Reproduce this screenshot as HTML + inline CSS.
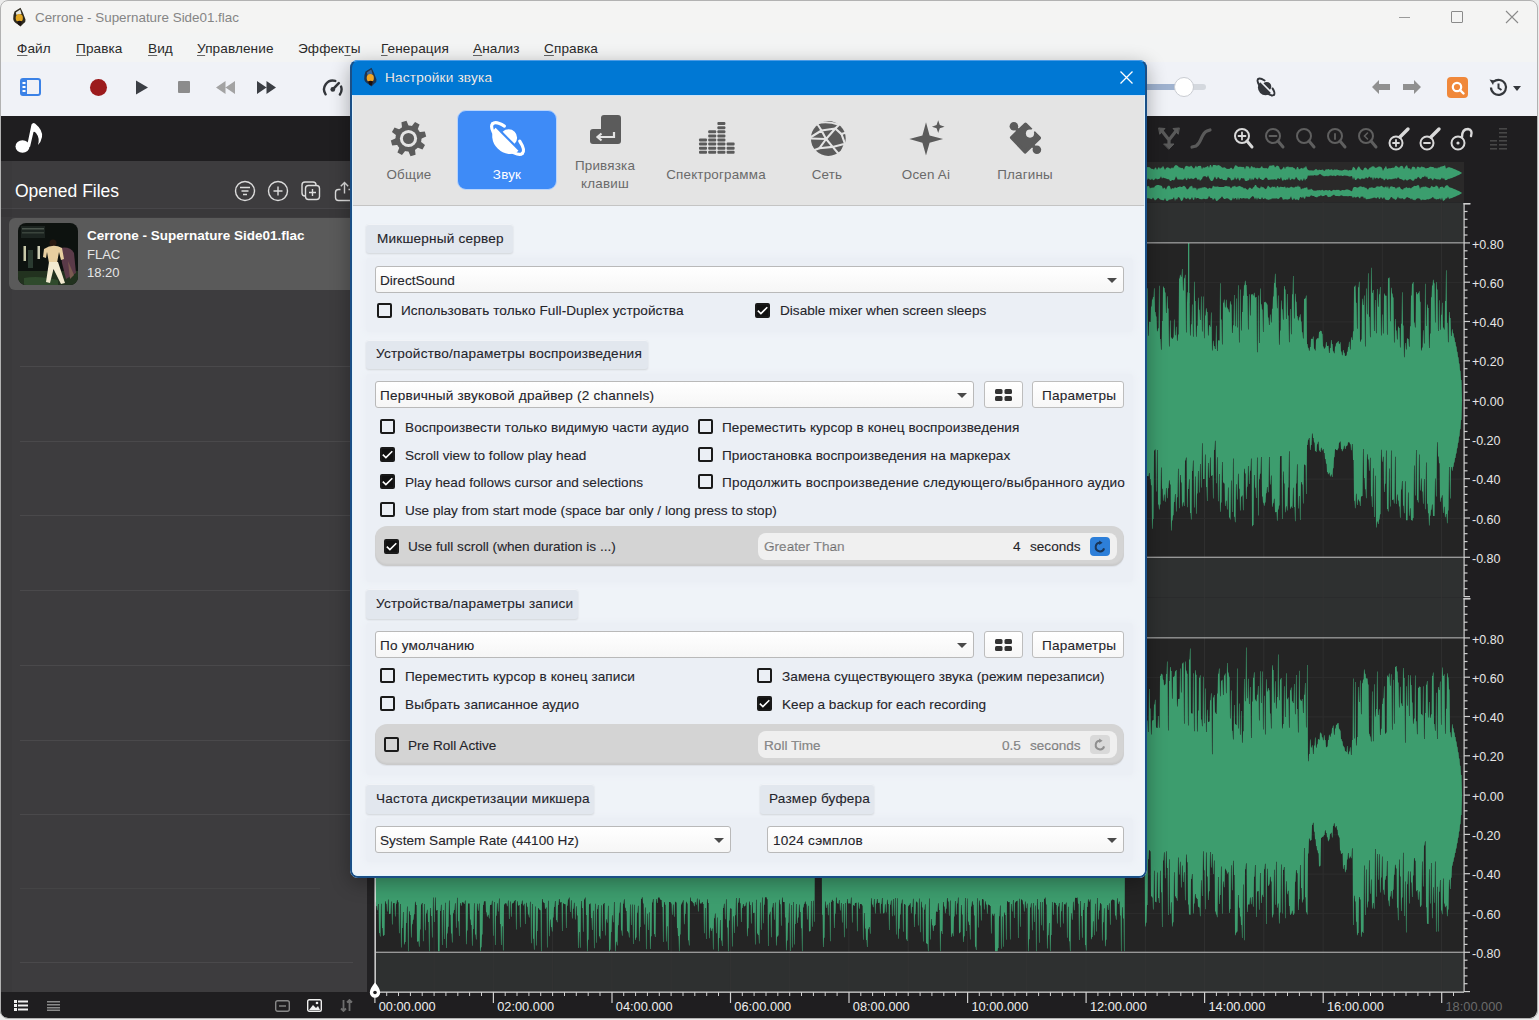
<!DOCTYPE html>
<html><head><meta charset="utf-8">
<style>
*{box-sizing:border-box}
html,body{margin:0;padding:0}
body{width:1539px;height:1020px;overflow:hidden;background:#ececec;position:relative;font-family:"Liberation Sans",sans-serif;color:#1b1b1b}
.a{position:absolute}
.t{position:absolute;white-space:nowrap;line-height:16px;font-size:14px}
#win{position:absolute;left:0;top:0;width:1537px;height:1018px;border-radius:8px;overflow:hidden;background:#f3f3f3}
#wb{position:absolute;left:0;top:0;width:1538px;height:1019px;border:1px solid #b2b2b2;border-radius:8px;pointer-events:none}
.menu .t{color:#2a2a2a;font-size:13.6px;letter-spacing:0.1px;margin-top:1px}
.u{text-decoration:underline;text-decoration-color:#666;text-decoration-thickness:1px;text-underline-offset:2px}
.lbl{position:absolute;background:#e2e7ee;border-radius:3px;box-shadow:0 1px 2px rgba(0,0,0,0.12), inset 0 1px 0 rgba(255,255,255,0.5)}
.sel{position:absolute;background:linear-gradient(#ffffff,#f6f6f6);border:1px solid #b9b9b9;border-radius:3px}
.sel .arr{position:absolute;right:6.5px;top:10.5px;width:0;height:0;border-left:5px solid transparent;border-right:5px solid transparent;border-top:5px solid #4a4a4a}
.btn{position:absolute;background:linear-gradient(#ffffff,#f7f7f7);border:1px solid #bdbdbd;border-radius:3px}
.cb{position:absolute;width:15px;height:15px;border:2px solid #1a1a1a;border-radius:2px;background:transparent}
.cb.on{background:#111}
.cb.on svg{position:absolute;left:0;top:0}
.tab{position:absolute;color:#6a6a6a;font-size:14px;text-align:center;line-height:18px;margin-top:1px;letter-spacing:0.2px}
.ax{position:absolute;color:#e6e6e6;font-size:12.5px;line-height:14px;white-space:nowrap}
.tl{position:absolute;color:#eeeeee;font-size:12.8px;line-height:14px;white-space:nowrap}
.hl{position:absolute;left:20px;width:333px;height:1px;background:#4a494b}
</style></head><body>
<div id="win">
  <!-- title bar -->
  <div class="a" style="left:0;top:0;width:1537px;height:33px;background:#f4f4f3"></div>
  <svg class="a" style="left:12px;top:7px" width="15" height="20" viewBox="0 0 15 20">
    <path d="M2.5 4.5 L8.5 0.8 L11 6 L13.5 12.5 Q14 15 11.5 16.5 L8.5 19.5 L6 17.5 Q1.5 15 1.2 12 Q1 8 2.5 4.5Z" fill="#2e2a1e"/>
    <path d="M3.8 5.5 L8.2 2.6 L9.6 7 L4.5 8Z" fill="#e6e6de"/>
    <ellipse cx="7.3" cy="11" rx="3.6" ry="4" fill="#e2a722"/>
    <path d="M5 14.5 Q7.5 13 10 14.5 L8.5 18.5 L6.5 18Z" fill="#1e1414"/>
  </svg>
  <div class="t" style="left:35px;top:10px;color:#858585;font-size:13.4px">Cerrone - Supernature Side01.flac</div>
  <div class="a" style="left:1399px;top:17px;width:11px;height:1px;background:#9a9a9a"></div>
  <div class="a" style="left:1451px;top:11px;width:12px;height:12px;border:1px solid #8a8a8a;border-radius:1px"></div>
  <svg class="a" style="left:1505px;top:10px" width="14" height="14" viewBox="0 0 14 14"><path d="M1 1L13 13M13 1L1 13" stroke="#8a8a8a" stroke-width="1.1"/></svg>

  <!-- menu -->
  <div class="a menu" style="left:0;top:33px;width:1537px;height:29px;background:#f3f4f4">
    <div class="t" style="left:17px;top:7px"><span class="u">Ф</span>айл</div>
    <div class="t" style="left:76px;top:7px"><span class="u">П</span>равка</div>
    <div class="t" style="left:148px;top:7px"><span class="u">В</span>ид</div>
    <div class="t" style="left:197px;top:7px"><span class="u">У</span>правление</div>
    <div class="t" style="left:298px;top:7px">Эффек<span class="u">т</span>ы</div>
    <div class="t" style="left:381px;top:7px"><span class="u">Г</span>енерация</div>
    <div class="t" style="left:473px;top:7px"><span class="u">А</span>нализ</div>
    <div class="t" style="left:544px;top:7px"><span class="u">С</span>правка</div>
  </div>

  <!-- toolbar -->
  <div class="a" style="left:0;top:62px;width:1537px;height:54px;background:#f0f2f7"></div>
  <svg class="a" style="left:20px;top:78px" width="21" height="18" viewBox="0 0 21 18">
    <rect x="1" y="1" width="19" height="16" rx="2" fill="none" stroke="#3b82e6" stroke-width="2"/>
    <rect x="1" y="1" width="6" height="16" fill="#3b82e6"/>
    <rect x="2.5" y="4" width="3" height="2" fill="#fff"/><rect x="2.5" y="8" width="3" height="2" fill="#fff"/><rect x="2.5" y="12" width="3" height="2" fill="#fff"/>
  </svg>
  <div class="a" style="left:90px;top:79px;width:17px;height:17px;border-radius:50%;background:#9c1b1d"></div>
  <svg class="a" style="left:135px;top:80px" width="14" height="15" viewBox="0 0 14 15"><path d="M1 0.5L13 7.5L1 14.5Z" fill="#3b3e44"/></svg>
  <div class="a" style="left:178px;top:81px;width:12px;height:12px;background:#8c8c8c;border-radius:1px"></div>
  <svg class="a" style="left:216px;top:81px" width="19" height="13" viewBox="0 0 19 13"><path d="M9.5 0L0 6.5L9.5 13ZM19 0L9.5 6.5L19 13Z" fill="#a3a3a3"/></svg>
  <svg class="a" style="left:257px;top:81px" width="19" height="13" viewBox="0 0 19 13"><path d="M0 0L9.5 6.5L0 13ZM9.5 0L19 6.5L9.5 13Z" fill="#3b3e44"/></svg>
  <svg class="a" style="left:322px;top:78px" width="22" height="18" viewBox="0 0 22 18"><g fill="none" stroke="#34373c" stroke-width="2.4" stroke-linecap="round"><path d="M3.6 16.3 A8.8 8.8 0 0 1 13.3 2.9"/><path d="M19.1 8.6 A8.8 8.8 0 0 1 17.9 16.5"/><path d="M10.8 11.4 L16.8 5.2" stroke-width="2.6"/></g><circle cx="10.8" cy="11.4" r="2.4" fill="#34373c"/></svg>
  <!-- right toolbar -->
  <div class="a" style="left:1140px;top:84px;width:66px;height:6px;border-radius:3px;background:#d4d8de"></div>
  <div class="a" style="left:1140px;top:84px;width:40px;height:6px;border-radius:3px;background:#9fb2cf"></div>
  <div class="a" style="left:1174px;top:77px;width:20px;height:20px;border-radius:50%;background:#fff;border:1px solid #c9ccd2"></div>
  <svg class="a" style="left:1254px;top:75px" width="24" height="24" viewBox="0 0 45 45">
    <g transform="translate(22.5 22.5) rotate(45)" fill="#34373c">
      <path d="M -8.3 -1.6 A 8.6 8.6 0 0 1 8.9 -1.6 Z"/>
      <path d="M -14.2 1.3 A 14.3 14.3 0 0 0 14.4 1.3 Z"/>
      <g fill="none" stroke="#34373c" stroke-width="3.6" stroke-linecap="round">
        <path d="M -21 0 A 21 7.8 0 0 0 21 0"/>
        <path d="M -21 0 A 21 7.8 0 0 1 -10.5 -6.8"/>
        <path d="M 10.5 -6.8 A 21 7.8 0 0 1 21 0"/>
      </g>
    </g>
  </svg>
  <svg class="a" style="left:1372px;top:80px" width="18" height="14" viewBox="0 0 18 14"><path d="M0 7L7 0V4H18V10H7V14Z" fill="#909090"/></svg>
  <svg class="a" style="left:1403px;top:80px" width="18" height="14" viewBox="0 0 18 14"><path d="M18 7L11 0V4H0V10H11V14Z" fill="#909090"/></svg>
  <div class="a" style="left:1447px;top:77px;width:21px;height:21px;border-radius:4px;background:#f0883a"></div>
  <svg class="a" style="left:1450px;top:80px" width="16" height="16" viewBox="0 0 16 16"><circle cx="7" cy="7" r="4.2" fill="none" stroke="#fff" stroke-width="2.2"/><path d="M10 10L13.5 13.5" stroke="#fff" stroke-width="2.4" stroke-linecap="round"/></svg>
  <svg class="a" style="left:1487px;top:77px" width="36" height="21" viewBox="0 0 36 21"><path d="M4 10.5 A7.5 7.5 0 1 0 6.5 4.8" fill="none" stroke="#34373c" stroke-width="2.2"/><path d="M2.5 2.5 L7.5 3.5 L6 8Z" fill="#34373c"/><path d="M11.5 6.5V11L14.5 13" fill="none" stroke="#34373c" stroke-width="2"/><path d="M26 9H34L30 14Z" fill="#34373c"/></svg>

  <!-- dark strip -->
  <div class="a" style="left:0;top:116px;width:1537px;height:45px;background:#1f1e20"></div>
  <svg class="a" style="left:14px;top:121px" width="32" height="34" viewBox="0 0 32 34"><ellipse cx="8.5" cy="25.5" rx="7" ry="6.2" fill="#fff"/><path d="M13 25 L17.5 3.5 Q19 1 21 2.5 Q29 9 28 16 Q27 21 24 24 Q26 17 22 12 Q20 10 19.5 11 L16 26Z" fill="#fff"/></svg>
  <!-- right strip icons -->
  <svg class="a" style="left:1155px;top:124px" width="360" height="30" viewBox="1155 124 360 30">
<g fill="none" stroke-linecap="round">
 <path d="M1162 131 L1169 140 L1176 131 M1169 140 V146" stroke="#5a5a5a" stroke-width="3.2"/><path d="M1159 128 L1165 128.5 L1160 134Z M1179 128 L1173 128.5 L1178 134Z M1164 144 L1174 144 L1169 149Z" fill="#5a5a5a" stroke="#5a5a5a" stroke-width="1"/>
 <path d="M1192 147 L1196 146 Q1199 144 1201 139 Q1204 132 1207 131 L1210 130" stroke="#5a5a5a" stroke-width="3.2"/>
 <circle cx="1242" cy="136" r="7" stroke="#d9d9d9" stroke-width="2"/><path d="M1247 141 L1252 147" stroke="#d9d9d9" stroke-width="3"/><path d="M1242 132.5V139.5M1238.5 136H1245.5" stroke="#d9d9d9" stroke-width="1.8"/>
 <circle cx="1273" cy="136" r="7" stroke="#5f5f5f" stroke-width="2"/><path d="M1278 141 L1283 147" stroke="#5f5f5f" stroke-width="3"/><path d="M1269.5 136H1276.5" stroke="#5f5f5f" stroke-width="1.8"/>
 <circle cx="1304" cy="136" r="7" stroke="#5f5f5f" stroke-width="2"/><path d="M1309 141 L1314 147" stroke="#5f5f5f" stroke-width="3"/>
 <circle cx="1335" cy="136" r="7" stroke="#5f5f5f" stroke-width="2"/><path d="M1340 141 L1345 147" stroke="#5f5f5f" stroke-width="3"/><path d="M1335 134V139" stroke="#5f5f5f" stroke-width="1.8"/>
 <circle cx="1366" cy="136" r="7" stroke="#5f5f5f" stroke-width="2"/><path d="M1371 141 L1376 147" stroke="#5f5f5f" stroke-width="3"/><path d="M1367.5 133L1364.5 136L1367.5 139" stroke="#5f5f5f" stroke-width="1.6"/>
 <circle cx="1396" cy="143" r="6.5" stroke="#d9d9d9" stroke-width="2"/><path d="M1400 137 L1408 129" stroke="#d9d9d9" stroke-width="3.4"/><path d="M1396 140V146M1393 143H1399" stroke="#d9d9d9" stroke-width="1.8"/>
 <circle cx="1427" cy="143" r="6.5" stroke="#d9d9d9" stroke-width="2"/><path d="M1431 137 L1439 129" stroke="#d9d9d9" stroke-width="3.4"/><path d="M1424 143H1430" stroke="#d9d9d9" stroke-width="1.8"/>
 <circle cx="1458" cy="143" r="6.5" stroke="#d9d9d9" stroke-width="2"/><path d="M1462 137 Q1462 129 1468 129 Q1473 130 1471 136" stroke="#d9d9d9" stroke-width="2.4"/><circle cx="1458" cy="143" r="1.6" fill="#d9d9d9" stroke="none"/>
</g>
<g fill="#474747"><rect x="1490" y="140" width="7" height="1.6"/><rect x="1490" y="144" width="7" height="1.6"/><rect x="1490" y="148" width="7" height="1.6"/><rect x="1499" y="128" width="8" height="1.6"/><rect x="1499" y="132" width="8" height="1.6"/><rect x="1499" y="136" width="8" height="1.6"/><rect x="1499" y="140" width="8" height="1.6"/><rect x="1499" y="144" width="8" height="1.6"/><rect x="1499" y="148" width="8" height="1.6"/></g>
</svg>

  <!-- sidebar -->
  <div class="a" style="left:0;top:161px;width:370px;height:831px;background:#3d3c3e"></div>
  <div class="a" style="left:0;top:208px;width:370px;height:1px;background:#474649"></div>
  <div class="a" style="left:0;top:209px;width:370px;height:8px;background:#39383a"></div>
  <div class="a" style="left:0;top:161px;width:12px;height:831px;background:rgba(0,0,0,0.03)"></div>
  <div class="t" style="left:15px;top:181px;color:#fff;font-size:17.5px;line-height:20px">Opened Files</div>
  <svg class="a" style="left:234px;top:180px" width="124" height="22" viewBox="0 0 124 22">
    <g fill="none" stroke="#dcdcdc" stroke-width="1.4">
      <circle cx="11" cy="11" r="9.5"/><path d="M6 7.5H16M7.5 11H14.5M9 14.5H13"/>
      <circle cx="44" cy="11" r="9.5"/><path d="M44 6.5V15.5M39.5 11H48.5"/>
      <rect x="68" y="2" width="14" height="14" rx="3"/><rect x="71.5" y="5.5" width="14" height="14" rx="3" fill="#3d3c3e"/><path d="M78.5 9V16M75 12.5H82"/>
      <path d="M106.5 9.5H104.5Q101.5 9.5 101.5 12.5V17.5Q101.5 20.5 104.5 20.5H124M110.5 13.5V2.5M106.8 6.2L110.5 2.5L114.2 6.2M114.5 9.5H124"/>
    </g>
  </svg>
  <div class="a" style="left:9px;top:218px;width:370px;height:72px;border-radius:6px;background:#5a5a5a"></div>
  <svg class="a" style="left:18px;top:223px" width="60" height="62" viewBox="0 0 60 62">
    <defs><clipPath id="thc"><rect width="60" height="62" rx="8"/></clipPath></defs>
    <g clip-path="url(#thc)">
      <rect width="60" height="62" fill="#0d120f"/>
      <rect x="3" y="3" width="24" height="12" fill="#1c2420"/>
      <rect x="4" y="5" width="22" height="1.5" fill="#4a544c"/><rect x="4" y="9" width="22" height="1.5" fill="#3a443c"/>
      <rect x="0" y="48" width="60" height="14" fill="#22321f"/>
      <path d="M6 55 Q20 52 40 57 L40 62 L6 62Z" fill="#2f4a2c"/>
      <rect x="5.5" y="23" width="2.5" height="15" fill="#c8c8a8"/><rect x="19.5" y="23" width="2.5" height="13" fill="#d0d0b8"/>
      <rect x="10" y="27" width="5" height="18" fill="#2a3a30"/>
      <path d="M42 25 Q52 23 56 30 L58 50 L48 56 L44 40Z" fill="#5a3a48"/>
      <path d="M50 38 L56 52 L52 56Z" fill="#7a5a50"/>
      <circle cx="35" cy="20" r="3.5" fill="#2a1a12"/>
      <path d="M26 26 Q35 20 44 25 L46 36 L43 37 L41 29 L39 40 L31 40 L29 29 L28 35 L25 34Z" fill="#e8cfa0"/>
      <path d="M31 39 L40 39 L47 60 L43 61 L35.5 46 L32 60 L28 59 Z" fill="#f2ead0"/>
    </g>
  </svg>
  <div class="t" style="left:87px;top:228px;color:#fff;font-weight:bold;font-size:13.5px">Cerrone - Supernature Side01.flac</div>
  <div class="t" style="left:87px;top:246.5px;color:#e6e6e6;font-size:13px">FLAC</div>
  <div class="t" style="left:87px;top:264.5px;color:#e6e6e6;font-size:13px">18:20</div>
  <div class="hl" style="top:366px"></div><div class="hl" style="top:441px"></div><div class="hl" style="top:515px"></div>
  <div class="hl" style="top:590px"></div><div class="hl" style="top:665px"></div><div class="hl" style="top:740px"></div>
  <div class="hl" style="top:814px"></div><div class="hl" style="top:888px;width:300px;opacity:0.6"></div><div class="hl" style="top:962px"></div>

  <!-- bottom bar -->
  <div class="a" style="left:0;top:992px;width:1537px;height:26px;background:#1f1e20"></div>
  <svg class="a" style="left:14px;top:1000px" width="14" height="11" viewBox="0 0 14 11"><g fill="#f0f0f0"><rect x="0" y="0" width="3" height="3"/><rect x="0" y="4" width="3" height="3"/><rect x="0" y="8" width="3" height="3"/><rect x="4" y="0.5" width="10" height="2"/><rect x="4" y="4.5" width="10" height="2"/><rect x="4" y="8.5" width="10" height="2"/></g></svg>
  <svg class="a" style="left:47px;top:1001px" width="13" height="10" viewBox="0 0 13 10"><g fill="#8a8a8a"><rect y="0" width="13" height="1.5"/><rect y="3" width="13" height="1.5"/><rect y="6" width="13" height="1.5"/><rect y="8.5" width="13" height="1.5"/></g></svg>
  <svg class="a" style="left:275px;top:1000px" width="15" height="12" viewBox="0 0 15 12"><rect x="0.7" y="0.7" width="13.6" height="10.6" rx="2" fill="none" stroke="#888" stroke-width="1.4"/><path d="M4 6H11" stroke="#888" stroke-width="1.4"/></svg>
  <svg class="a" style="left:307px;top:999px" width="15" height="13" viewBox="0 0 15 13"><rect x="0.7" y="0.7" width="13.6" height="11.6" rx="1.5" fill="none" stroke="#f0f0f0" stroke-width="1.4"/><path d="M2 11L6 6L9 9L11 7L13 11Z" fill="#f0f0f0"/><circle cx="10" cy="4" r="1.3" fill="#f0f0f0"/></svg>
  <svg class="a" style="left:340px;top:999px" width="13" height="13" viewBox="0 0 13 13"><path d="M3.5 1V12M1 9.5L3.5 12L6 9.5M9.5 12V1M7 3.5L9.5 1L12 3.5" fill="none" stroke="#6e6e6e" stroke-width="1.8"/></svg>

  <!-- waveform area -->
  <svg class="a" style="left:0;top:0" width="1537" height="1018" viewBox="0 0 1537 1018">
<rect x="367" y="161" width="1170" height="857" fill="#1f1e20"/>
<rect x="367" y="161" width="9" height="831" fill="#222123"/>
<rect x="370" y="162" width="1094" height="40" fill="#2a2929"/>
<path d="M375.0,168.1 L376.0,166.8 L377.0,165.6 L378.0,166.5 L379.0,168.5 L380.0,166.9 L381.0,166.8 L382.0,166.2 L383.0,167.2 L384.0,166.4 L385.0,168.2 L386.0,165.6 L387.0,166.7 L388.0,166.6 L389.0,167.0 L390.0,166.5 L391.0,166.6 L392.0,168.6 L393.0,166.8 L394.0,169.2 L395.0,168.9 L396.0,168.0 L397.0,169.9 L398.0,169.9 L399.0,168.8 L400.0,168.6 L401.0,168.3 L402.0,168.6 L403.0,168.4 L404.0,168.5 L405.0,166.6 L406.0,167.0 L407.0,169.0 L408.0,166.7 L409.0,166.5 L410.0,166.4 L411.0,168.3 L412.0,166.4 L413.0,167.2 L414.0,167.5 L415.0,167.3 L416.0,166.3 L417.0,167.0 L418.0,167.6 L419.0,168.6 L420.0,168.7 L421.0,168.3 L422.0,167.7 L423.0,167.1 L424.0,167.5 L425.0,167.3 L426.0,165.6 L427.0,165.8 L428.0,168.4 L429.0,166.7 L430.0,166.7 L431.0,166.9 L432.0,167.1 L433.0,167.1 L434.0,168.3 L435.0,166.3 L436.0,166.7 L437.0,167.6 L438.0,167.0 L439.0,167.3 L440.0,167.0 L441.0,167.2 L442.0,166.6 L443.0,167.0 L444.0,166.3 L445.0,166.1 L446.0,166.0 L447.0,166.3 L448.0,167.7 L449.0,167.7 L450.0,168.5 L451.0,168.5 L452.0,166.9 L453.0,166.1 L454.0,167.1 L455.0,166.6 L456.0,169.1 L457.0,166.1 L458.0,167.3 L459.0,166.4 L460.0,166.9 L461.0,167.5 L462.0,167.1 L463.0,166.1 L464.0,167.6 L465.0,165.5 L466.0,166.5 L467.0,167.1 L468.0,168.3 L469.0,165.1 L470.0,165.7 L471.0,166.6 L472.0,169.3 L473.0,166.6 L474.0,167.1 L475.0,166.8 L476.0,168.0 L477.0,166.5 L478.0,166.9 L479.0,169.4 L480.0,169.6 L481.0,167.2 L482.0,166.8 L483.0,167.3 L484.0,167.2 L485.0,167.0 L486.0,167.3 L487.0,165.7 L488.0,166.2 L489.0,168.0 L490.0,167.5 L491.0,165.7 L492.0,165.2 L493.0,166.2 L494.0,167.1 L495.0,167.0 L496.0,167.0 L497.0,167.4 L498.0,167.8 L499.0,166.0 L500.0,165.9 L501.0,165.5 L502.0,165.8 L503.0,166.3 L504.0,167.9 L505.0,168.5 L506.0,168.4 L507.0,167.7 L508.0,166.6 L509.0,169.1 L510.0,168.4 L511.0,167.6 L512.0,165.4 L513.0,167.4 L514.0,169.4 L515.0,167.9 L516.0,167.9 L517.0,169.3 L518.0,169.9 L519.0,167.9 L520.0,167.2 L521.0,167.0 L522.0,169.9 L523.0,169.5 L524.0,167.9 L525.0,166.3 L526.0,166.6 L527.0,166.3 L528.0,167.0 L529.0,166.4 L530.0,165.8 L531.0,165.1 L532.0,165.1 L533.0,165.3 L534.0,166.0 L535.0,168.8 L536.0,166.3 L537.0,166.3 L538.0,166.5 L539.0,166.1 L540.0,167.7 L541.0,167.9 L542.0,170.3 L543.0,167.8 L544.0,169.7 L545.0,166.9 L546.0,168.2 L547.0,166.2 L548.0,166.5 L549.0,167.6 L550.0,168.2 L551.0,167.2 L552.0,167.4 L553.0,166.9 L554.0,169.1 L555.0,166.5 L556.0,167.5 L557.0,167.0 L558.0,167.6 L559.0,167.4 L560.0,168.0 L561.0,167.9 L562.0,167.3 L563.0,168.3 L564.0,167.6 L565.0,168.1 L566.0,167.3 L567.0,166.7 L568.0,166.9 L569.0,168.2 L570.0,167.7 L571.0,166.7 L572.0,167.5 L573.0,166.4 L574.0,167.0 L575.0,167.1 L576.0,168.5 L577.0,166.9 L578.0,165.8 L579.0,165.8 L580.0,167.6 L581.0,166.1 L582.0,165.9 L583.0,166.4 L584.0,166.1 L585.0,166.8 L586.0,166.3 L587.0,166.8 L588.0,167.5 L589.0,167.1 L590.0,165.9 L591.0,165.1 L592.0,165.4 L593.0,165.9 L594.0,166.7 L595.0,166.5 L596.0,166.8 L597.0,167.8 L598.0,167.8 L599.0,168.4 L600.0,167.7 L601.0,168.5 L602.0,169.0 L603.0,169.6 L604.0,167.9 L605.0,166.3 L606.0,165.8 L607.0,165.7 L608.0,168.5 L609.0,168.9 L610.0,168.0 L611.0,167.7 L612.0,169.1 L613.0,166.8 L614.0,166.8 L615.0,167.1 L616.0,169.9 L617.0,169.5 L618.0,168.9 L619.0,167.3 L620.0,166.8 L621.0,165.8 L622.0,165.7 L623.0,166.0 L624.0,166.4 L625.0,165.7 L626.0,166.8 L627.0,166.3 L628.0,166.3 L629.0,167.3 L630.0,165.1 L631.0,165.6 L632.0,165.6 L633.0,166.0 L634.0,166.3 L635.0,166.2 L636.0,166.1 L637.0,167.0 L638.0,166.6 L639.0,167.6 L640.0,167.6 L641.0,167.2 L642.0,168.8 L643.0,167.0 L644.0,167.3 L645.0,167.7 L646.0,169.7 L647.0,169.4 L648.0,168.4 L649.0,167.2 L650.0,169.1 L651.0,166.7 L652.0,166.9 L653.0,166.9 L654.0,166.3 L655.0,166.5 L656.0,167.6 L657.0,166.6 L658.0,167.1 L659.0,167.5 L660.0,168.8 L661.0,166.3 L662.0,165.9 L663.0,168.0 L664.0,166.9 L665.0,168.3 L666.0,169.1 L667.0,166.8 L668.0,167.8 L669.0,168.2 L670.0,167.1 L671.0,166.9 L672.0,169.8 L673.0,169.4 L674.0,166.7 L675.0,167.3 L676.0,167.1 L677.0,165.6 L678.0,165.8 L679.0,166.0 L680.0,167.9 L681.0,168.3 L682.0,169.3 L683.0,168.6 L684.0,169.9 L685.0,167.4 L686.0,168.2 L687.0,166.7 L688.0,166.6 L689.0,166.0 L690.0,168.5 L691.0,168.6 L692.0,167.8 L693.0,167.3 L694.0,166.3 L695.0,166.2 L696.0,166.6 L697.0,166.8 L698.0,166.9 L699.0,165.1 L700.0,168.5 L701.0,168.7 L702.0,168.6 L703.0,166.2 L704.0,166.9 L705.0,168.0 L706.0,165.3 L707.0,165.1 L708.0,165.6 L709.0,166.2 L710.0,166.5 L711.0,167.6 L712.0,167.2 L713.0,166.2 L714.0,166.0 L715.0,167.4 L716.0,166.1 L717.0,167.2 L718.0,167.6 L719.0,167.4 L720.0,168.8 L721.0,168.9 L722.0,167.4 L723.0,166.2 L724.0,166.1 L725.0,167.1 L726.0,165.6 L727.0,167.3 L728.0,167.8 L729.0,167.7 L730.0,165.6 L731.0,165.1 L732.0,165.1 L733.0,167.3 L734.0,167.8 L735.0,168.3 L736.0,168.4 L737.0,166.1 L738.0,166.5 L739.0,168.6 L740.0,167.4 L741.0,167.2 L742.0,169.4 L743.0,168.1 L744.0,166.7 L745.0,166.6 L746.0,166.5 L747.0,166.8 L748.0,165.7 L749.0,168.7 L750.0,168.2 L751.0,167.0 L752.0,166.4 L753.0,166.2 L754.0,165.6 L755.0,166.3 L756.0,166.6 L757.0,169.5 L758.0,168.5 L759.0,167.2 L760.0,166.4 L761.0,167.1 L762.0,167.4 L763.0,167.8 L764.0,169.0 L765.0,167.2 L766.0,167.0 L767.0,168.0 L768.0,166.1 L769.0,169.0 L770.0,165.7 L771.0,168.1 L772.0,165.6 L773.0,165.1 L774.0,166.3 L775.0,167.0 L776.0,166.9 L777.0,168.9 L778.0,167.3 L779.0,167.8 L780.0,167.9 L781.0,167.1 L782.0,167.0 L783.0,167.0 L784.0,167.5 L785.0,166.5 L786.0,165.5 L787.0,165.8 L788.0,166.4 L789.0,166.5 L790.0,167.4 L791.0,166.9 L792.0,165.9 L793.0,167.1 L794.0,168.3 L795.0,168.3 L796.0,167.4 L797.0,169.2 L798.0,168.0 L799.0,167.9 L800.0,167.4 L801.0,169.7 L802.0,167.3 L803.0,166.1 L804.0,166.0 L805.0,165.7 L806.0,167.1 L807.0,165.9 L808.0,167.6 L809.0,167.9 L810.0,168.1 L811.0,166.7 L812.0,166.6 L813.0,167.5 L814.0,168.1 L815.0,168.2 L816.0,167.5 L817.0,167.6 L818.0,168.9 L819.0,167.9 L820.0,166.4 L821.0,165.6 L822.0,168.2 L823.0,166.7 L824.0,168.8 L825.0,167.1 L826.0,166.8 L827.0,166.3 L828.0,165.3 L829.0,165.1 L830.0,165.7 L831.0,166.2 L832.0,167.0 L833.0,167.1 L834.0,167.9 L835.0,165.7 L836.0,165.2 L837.0,165.1 L838.0,165.9 L839.0,169.1 L840.0,169.1 L841.0,166.7 L842.0,165.9 L843.0,165.8 L844.0,168.9 L845.0,167.6 L846.0,169.3 L847.0,167.0 L848.0,166.0 L849.0,168.9 L850.0,167.0 L851.0,167.9 L852.0,167.9 L853.0,167.7 L854.0,168.6 L855.0,166.8 L856.0,167.5 L857.0,167.9 L858.0,170.1 L859.0,168.6 L860.0,167.3 L861.0,167.8 L862.0,166.6 L863.0,168.1 L864.0,166.3 L865.0,167.0 L866.0,169.2 L867.0,167.9 L868.0,166.1 L869.0,166.2 L870.0,167.3 L871.0,166.7 L872.0,166.2 L873.0,165.8 L874.0,168.4 L875.0,167.1 L876.0,167.3 L877.0,167.8 L878.0,167.2 L879.0,167.6 L880.0,166.5 L881.0,166.2 L882.0,166.0 L883.0,165.6 L884.0,165.2 L885.0,165.1 L886.0,167.9 L887.0,166.4 L888.0,166.2 L889.0,165.7 L890.0,168.3 L891.0,166.0 L892.0,166.9 L893.0,166.3 L894.0,167.6 L895.0,166.9 L896.0,166.2 L897.0,168.1 L898.0,165.1 L899.0,166.4 L900.0,167.4 L901.0,169.0 L902.0,167.4 L903.0,167.7 L904.0,166.2 L905.0,165.8 L906.0,166.0 L907.0,166.6 L908.0,167.1 L909.0,167.8 L910.0,167.2 L911.0,166.5 L912.0,165.7 L913.0,165.6 L914.0,167.6 L915.0,167.0 L916.0,167.5 L917.0,168.5 L918.0,167.8 L919.0,167.3 L920.0,166.1 L921.0,167.9 L922.0,165.8 L923.0,166.4 L924.0,166.4 L925.0,166.6 L926.0,168.6 L927.0,166.2 L928.0,167.2 L929.0,168.1 L930.0,167.9 L931.0,168.4 L932.0,165.6 L933.0,166.1 L934.0,167.0 L935.0,167.1 L936.0,167.6 L937.0,167.7 L938.0,167.4 L939.0,167.6 L940.0,168.3 L941.0,168.3 L942.0,167.7 L943.0,169.0 L944.0,166.9 L945.0,168.2 L946.0,165.5 L947.0,165.1 L948.0,165.7 L949.0,167.7 L950.0,167.9 L951.0,167.8 L952.0,166.8 L953.0,167.3 L954.0,166.2 L955.0,166.2 L956.0,166.7 L957.0,166.9 L958.0,166.4 L959.0,165.9 L960.0,165.7 L961.0,167.4 L962.0,169.2 L963.0,168.1 L964.0,167.0 L965.0,168.0 L966.0,170.0 L967.0,168.7 L968.0,166.7 L969.0,165.7 L970.0,166.8 L971.0,166.5 L972.0,166.5 L973.0,166.7 L974.0,166.9 L975.0,165.9 L976.0,166.5 L977.0,167.3 L978.0,169.6 L979.0,166.6 L980.0,165.9 L981.0,165.5 L982.0,165.1 L983.0,167.3 L984.0,166.2 L985.0,166.2 L986.0,167.6 L987.0,166.0 L988.0,166.1 L989.0,167.7 L990.0,166.2 L991.0,166.8 L992.0,168.2 L993.0,168.2 L994.0,168.2 L995.0,167.2 L996.0,168.5 L997.0,169.0 L998.0,169.7 L999.0,167.4 L1000.0,167.8 L1001.0,167.3 L1002.0,169.0 L1003.0,166.8 L1004.0,167.5 L1005.0,167.5 L1006.0,168.3 L1007.0,167.4 L1008.0,167.1 L1009.0,167.2 L1010.0,167.4 L1011.0,167.7 L1012.0,169.5 L1013.0,169.3 L1014.0,167.5 L1015.0,167.8 L1016.0,167.5 L1017.0,165.9 L1018.0,168.9 L1019.0,166.2 L1020.0,166.5 L1021.0,167.2 L1022.0,167.7 L1023.0,170.2 L1024.0,168.3 L1025.0,166.2 L1026.0,165.2 L1027.0,165.1 L1028.0,165.8 L1029.0,166.8 L1030.0,169.0 L1031.0,168.2 L1032.0,167.0 L1033.0,166.3 L1034.0,168.1 L1035.0,167.0 L1036.0,165.9 L1037.0,165.7 L1038.0,167.1 L1039.0,166.6 L1040.0,166.9 L1041.0,167.2 L1042.0,167.3 L1043.0,167.4 L1044.0,166.2 L1045.0,167.5 L1046.0,166.5 L1047.0,167.3 L1048.0,167.2 L1049.0,168.1 L1050.0,167.9 L1051.0,168.2 L1052.0,167.1 L1053.0,169.1 L1054.0,167.7 L1055.0,169.2 L1056.0,167.0 L1057.0,167.0 L1058.0,166.0 L1059.0,165.5 L1060.0,168.5 L1061.0,167.6 L1062.0,169.3 L1063.0,169.0 L1064.0,166.9 L1065.0,166.3 L1066.0,166.0 L1067.0,167.5 L1068.0,166.6 L1069.0,166.4 L1070.0,166.2 L1071.0,166.3 L1072.0,166.7 L1073.0,166.0 L1074.0,166.8 L1075.0,165.8 L1076.0,166.9 L1077.0,166.7 L1078.0,167.3 L1079.0,169.4 L1080.0,167.6 L1081.0,167.2 L1082.0,167.3 L1083.0,168.8 L1084.0,167.5 L1085.0,168.0 L1086.0,167.6 L1087.0,167.5 L1088.0,166.5 L1089.0,168.6 L1090.0,165.8 L1091.0,165.8 L1092.0,165.1 L1093.0,165.2 L1094.0,167.0 L1095.0,167.3 L1096.0,168.2 L1097.0,166.5 L1098.0,165.4 L1099.0,167.6 L1100.0,165.3 L1101.0,166.6 L1102.0,165.7 L1103.0,167.2 L1104.0,168.1 L1105.0,166.3 L1106.0,167.2 L1107.0,166.5 L1108.0,166.8 L1109.0,166.2 L1110.0,166.9 L1111.0,167.6 L1112.0,166.7 L1113.0,167.9 L1114.0,167.6 L1115.0,167.1 L1116.0,167.5 L1117.0,167.0 L1118.0,169.7 L1119.0,167.4 L1120.0,167.0 L1121.0,166.4 L1122.0,166.3 L1123.0,169.1 L1124.0,167.8 L1125.0,167.1 L1126.0,166.7 L1127.0,166.2 L1128.0,167.0 L1129.0,167.2 L1130.0,169.5 L1131.0,168.0 L1132.0,168.8 L1133.0,167.4 L1134.0,166.3 L1135.0,168.7 L1136.0,166.5 L1137.0,166.1 L1138.0,167.2 L1139.0,169.8 L1140.0,168.0 L1141.0,168.7 L1142.0,166.8 L1143.0,166.2 L1144.0,167.4 L1145.0,167.3 L1146.0,167.6 L1147.0,167.0 L1148.0,167.2 L1149.0,166.9 L1150.0,167.5 L1151.0,168.6 L1152.0,168.9 L1153.0,168.8 L1154.0,169.7 L1155.0,167.8 L1156.0,167.6 L1157.0,170.0 L1158.0,168.1 L1159.0,167.1 L1160.0,169.0 L1161.0,167.4 L1162.0,167.7 L1163.0,165.8 L1164.0,167.8 L1165.0,170.0 L1166.0,167.9 L1167.0,167.4 L1168.0,167.3 L1169.0,168.0 L1170.0,168.6 L1171.0,168.5 L1172.0,167.2 L1173.0,168.6 L1174.0,166.7 L1175.0,165.5 L1176.0,165.1 L1177.0,165.4 L1178.0,166.0 L1179.0,167.4 L1180.0,167.3 L1181.0,168.2 L1182.0,167.8 L1183.0,168.3 L1184.0,169.7 L1185.0,166.8 L1186.0,166.1 L1187.0,165.7 L1188.0,166.4 L1189.0,166.4 L1190.0,166.8 L1191.0,165.6 L1192.0,166.5 L1193.0,167.8 L1194.0,168.8 L1195.0,167.1 L1196.0,165.4 L1197.0,167.5 L1198.0,166.0 L1199.0,166.1 L1200.0,165.8 L1201.0,165.9 L1202.0,169.2 L1203.0,167.1 L1204.0,167.9 L1205.0,167.3 L1206.0,167.3 L1207.0,166.5 L1208.0,165.7 L1209.0,167.9 L1210.0,165.1 L1211.0,165.1 L1212.0,167.7 L1213.0,165.1 L1214.0,165.1 L1215.0,165.1 L1216.0,165.3 L1217.0,165.8 L1218.0,165.1 L1219.0,165.2 L1220.0,165.7 L1221.0,166.6 L1222.0,167.4 L1223.0,167.7 L1224.0,167.3 L1225.0,167.6 L1226.0,168.3 L1227.0,169.0 L1228.0,168.8 L1229.0,168.9 L1230.0,168.4 L1231.0,167.4 L1232.0,168.2 L1233.0,169.6 L1234.0,167.8 L1235.0,165.5 L1236.0,165.2 L1237.0,166.0 L1238.0,166.7 L1239.0,167.1 L1240.0,166.6 L1241.0,167.0 L1242.0,166.7 L1243.0,167.2 L1244.0,166.7 L1245.0,169.4 L1246.0,166.1 L1247.0,166.5 L1248.0,166.2 L1249.0,167.1 L1250.0,169.1 L1251.0,166.3 L1252.0,166.3 L1253.0,167.5 L1254.0,167.2 L1255.0,167.5 L1256.0,168.5 L1257.0,167.6 L1258.0,168.2 L1259.0,168.1 L1260.0,168.3 L1261.0,166.9 L1262.0,166.1 L1263.0,168.2 L1264.0,167.8 L1265.0,168.4 L1266.0,167.7 L1267.0,168.6 L1268.0,168.4 L1269.0,166.6 L1270.0,165.3 L1271.0,165.9 L1272.0,165.2 L1273.0,165.5 L1274.0,165.1 L1275.0,167.5 L1276.0,166.5 L1277.0,165.4 L1278.0,165.9 L1279.0,166.5 L1280.0,169.3 L1281.0,169.4 L1282.0,169.2 L1283.0,167.7 L1284.0,166.6 L1285.0,169.2 L1286.0,166.5 L1287.0,167.2 L1288.0,166.0 L1289.0,167.4 L1290.0,166.7 L1291.0,167.6 L1292.0,166.8 L1293.0,167.4 L1294.0,168.1 L1295.0,168.6 L1296.0,170.0 L1297.0,166.9 L1298.0,167.1 L1299.0,169.5 L1300.0,168.8 L1301.0,168.3 L1302.0,167.7 L1303.0,169.0 L1304.0,167.2 L1305.0,167.8 L1306.0,165.8 L1307.0,168.5 L1308.0,170.1 L1309.0,170.3 L1310.0,170.4 L1311.0,170.2 L1312.0,170.5 L1313.0,170.4 L1314.0,170.5 L1315.0,169.6 L1316.0,169.1 L1317.0,169.6 L1318.0,170.5 L1319.0,169.6 L1320.0,170.0 L1321.0,169.9 L1322.0,169.7 L1323.0,169.6 L1324.0,171.0 L1325.0,170.6 L1326.0,168.9 L1327.0,169.8 L1328.0,169.1 L1329.0,169.2 L1330.0,169.9 L1331.0,169.3 L1332.0,169.3 L1333.0,170.6 L1334.0,169.5 L1335.0,169.5 L1336.0,169.7 L1337.0,169.3 L1338.0,170.0 L1339.0,170.0 L1340.0,170.4 L1341.0,170.3 L1342.0,170.8 L1343.0,170.1 L1344.0,169.9 L1345.0,169.3 L1346.0,170.3 L1347.0,169.6 L1348.0,170.7 L1349.0,170.2 L1350.0,170.1 L1351.0,170.6 L1352.0,169.8 L1353.0,166.7 L1354.0,167.2 L1355.0,168.3 L1356.0,170.5 L1357.0,168.8 L1358.0,167.0 L1359.0,166.3 L1360.0,167.9 L1361.0,169.6 L1362.0,170.0 L1363.0,170.6 L1364.0,168.2 L1365.0,167.6 L1366.0,167.8 L1367.0,168.7 L1368.0,169.9 L1369.0,168.6 L1370.0,167.4 L1371.0,167.4 L1372.0,166.3 L1373.0,166.4 L1374.0,166.3 L1375.0,167.8 L1376.0,167.8 L1377.0,167.6 L1378.0,166.8 L1379.0,166.6 L1380.0,166.6 L1381.0,166.9 L1382.0,167.8 L1383.0,170.9 L1384.0,168.7 L1385.0,167.4 L1386.0,165.7 L1387.0,168.8 L1388.0,168.7 L1389.0,167.9 L1390.0,168.4 L1391.0,167.9 L1392.0,168.1 L1393.0,167.4 L1394.0,168.0 L1395.0,166.6 L1396.0,165.4 L1397.0,166.4 L1398.0,167.0 L1399.0,167.9 L1400.0,166.6 L1401.0,166.0 L1402.0,165.7 L1403.0,166.7 L1404.0,169.3 L1405.0,167.0 L1406.0,165.9 L1407.0,165.1 L1408.0,167.9 L1409.0,168.4 L1410.0,168.3 L1411.0,170.0 L1412.0,167.2 L1413.0,166.4 L1414.0,167.1 L1415.0,167.3 L1416.0,169.7 L1417.0,166.8 L1418.0,166.7 L1419.0,166.9 L1420.0,168.0 L1421.0,166.7 L1422.0,166.6 L1423.0,167.2 L1424.0,167.1 L1425.0,167.9 L1426.0,168.5 L1427.0,167.9 L1428.0,167.9 L1429.0,167.5 L1430.0,166.8 L1431.0,166.7 L1432.0,167.0 L1433.0,167.1 L1434.0,167.4 L1435.0,168.5 L1436.0,167.6 L1437.0,168.8 L1438.0,167.2 L1439.0,167.8 L1440.0,166.9 L1441.0,166.4 L1442.0,166.4 L1443.0,165.9 L1444.0,166.1 L1445.0,165.1 L1446.0,168.7 L1447.0,167.7 L1448.0,167.4 L1449.0,167.0 L1450.0,167.4 L1451.0,167.8 L1452.0,168.1 L1453.0,168.5 L1454.0,168.9 L1455.0,169.3 L1456.0,169.8 L1457.0,170.2 L1458.0,170.7 L1459.0,171.1 L1460.0,171.7 L1461.0,172.2 L1462.0,173.0 L1463.0,173.0 L1463.0,173.0 L1462.0,173.0 L1461.0,173.8 L1460.0,174.3 L1459.0,174.9 L1458.0,175.3 L1457.0,175.8 L1456.0,176.2 L1455.0,176.7 L1454.0,177.1 L1453.0,177.5 L1452.0,177.9 L1451.0,178.2 L1450.0,178.6 L1449.0,179.0 L1448.0,178.8 L1447.0,180.0 L1446.0,180.1 L1445.0,180.2 L1444.0,177.9 L1443.0,179.3 L1442.0,177.4 L1441.0,179.1 L1440.0,179.7 L1439.0,179.6 L1438.0,179.2 L1437.0,179.4 L1436.0,178.9 L1435.0,178.7 L1434.0,178.3 L1433.0,180.6 L1432.0,179.4 L1431.0,178.3 L1430.0,178.4 L1429.0,179.1 L1428.0,179.1 L1427.0,176.3 L1426.0,177.8 L1425.0,175.6 L1424.0,177.2 L1423.0,176.8 L1422.0,177.5 L1421.0,178.9 L1420.0,178.8 L1419.0,177.4 L1418.0,176.7 L1417.0,178.6 L1416.0,178.9 L1415.0,178.6 L1414.0,180.4 L1413.0,180.7 L1412.0,180.5 L1411.0,179.6 L1410.0,179.1 L1409.0,179.5 L1408.0,180.1 L1407.0,180.8 L1406.0,179.8 L1405.0,179.2 L1404.0,180.8 L1403.0,180.1 L1402.0,179.6 L1401.0,179.0 L1400.0,179.1 L1399.0,178.3 L1398.0,177.0 L1397.0,178.7 L1396.0,178.5 L1395.0,178.3 L1394.0,179.1 L1393.0,178.5 L1392.0,179.6 L1391.0,179.0 L1390.0,179.6 L1389.0,178.7 L1388.0,179.9 L1387.0,179.6 L1386.0,178.3 L1385.0,179.8 L1384.0,180.6 L1383.0,178.4 L1382.0,179.0 L1381.0,178.1 L1380.0,177.6 L1379.0,178.5 L1378.0,178.7 L1377.0,177.4 L1376.0,178.3 L1375.0,178.8 L1374.0,177.1 L1373.0,180.4 L1372.0,176.9 L1371.0,178.2 L1370.0,177.1 L1369.0,176.5 L1368.0,178.2 L1367.0,178.3 L1366.0,176.9 L1365.0,178.8 L1364.0,178.6 L1363.0,178.9 L1362.0,177.9 L1361.0,179.3 L1360.0,179.4 L1359.0,178.7 L1358.0,177.9 L1357.0,179.1 L1356.0,180.0 L1355.0,179.9 L1354.0,176.9 L1353.0,179.8 L1352.0,176.0 L1351.0,176.3 L1350.0,176.4 L1349.0,176.4 L1348.0,176.1 L1347.0,175.7 L1346.0,175.7 L1345.0,175.5 L1344.0,175.4 L1343.0,176.0 L1342.0,176.1 L1341.0,175.3 L1340.0,175.9 L1339.0,175.6 L1338.0,175.4 L1337.0,175.1 L1336.0,176.2 L1335.0,175.9 L1334.0,175.4 L1333.0,175.8 L1332.0,175.9 L1331.0,175.3 L1330.0,175.8 L1329.0,175.8 L1328.0,176.5 L1327.0,175.8 L1326.0,176.3 L1325.0,176.0 L1324.0,176.4 L1323.0,175.7 L1322.0,175.5 L1321.0,174.4 L1320.0,174.1 L1319.0,174.6 L1318.0,175.6 L1317.0,175.2 L1316.0,175.8 L1315.0,175.0 L1314.0,175.3 L1313.0,175.7 L1312.0,175.2 L1311.0,175.7 L1310.0,175.3 L1309.0,175.9 L1308.0,175.3 L1307.0,178.8 L1306.0,179.0 L1305.0,180.7 L1304.0,178.0 L1303.0,180.5 L1302.0,180.7 L1301.0,178.8 L1300.0,180.9 L1299.0,180.3 L1298.0,179.7 L1297.0,178.3 L1296.0,176.7 L1295.0,179.3 L1294.0,179.4 L1293.0,179.2 L1292.0,178.6 L1291.0,179.7 L1290.0,180.2 L1289.0,177.0 L1288.0,180.1 L1287.0,179.0 L1286.0,180.0 L1285.0,180.3 L1284.0,179.3 L1283.0,180.9 L1282.0,180.0 L1281.0,176.9 L1280.0,179.1 L1279.0,178.9 L1278.0,177.8 L1277.0,179.4 L1276.0,180.0 L1275.0,179.1 L1274.0,179.6 L1273.0,179.6 L1272.0,179.6 L1271.0,179.4 L1270.0,179.7 L1269.0,179.8 L1268.0,180.0 L1267.0,178.0 L1266.0,177.5 L1265.0,178.0 L1264.0,179.6 L1263.0,180.0 L1262.0,180.0 L1261.0,179.0 L1260.0,179.0 L1259.0,176.9 L1258.0,179.4 L1257.0,179.2 L1256.0,178.4 L1255.0,177.2 L1254.0,179.1 L1253.0,180.2 L1252.0,178.3 L1251.0,180.8 L1250.0,177.7 L1249.0,180.3 L1248.0,180.2 L1247.0,180.9 L1246.0,180.9 L1245.0,180.7 L1244.0,177.9 L1243.0,178.7 L1242.0,178.0 L1241.0,178.3 L1240.0,180.6 L1239.0,180.3 L1238.0,177.2 L1237.0,179.2 L1236.0,179.4 L1235.0,177.0 L1234.0,179.8 L1233.0,179.4 L1232.0,180.6 L1231.0,180.3 L1230.0,177.7 L1229.0,178.1 L1228.0,176.7 L1227.0,179.8 L1226.0,180.5 L1225.0,180.0 L1224.0,179.9 L1223.0,179.9 L1222.0,178.4 L1221.0,179.0 L1220.0,178.9 L1219.0,178.0 L1218.0,176.7 L1217.0,179.2 L1216.0,178.7 L1215.0,176.5 L1214.0,178.2 L1213.0,180.6 L1212.0,180.9 L1211.0,180.9 L1210.0,179.4 L1209.0,177.8 L1208.0,175.3 L1207.0,177.5 L1206.0,176.7 L1205.0,176.0 L1204.0,176.6 L1203.0,176.5 L1202.0,179.1 L1201.0,179.8 L1200.0,180.9 L1199.0,178.7 L1198.0,180.3 L1197.0,178.8 L1196.0,177.4 L1195.0,178.1 L1194.0,178.8 L1193.0,179.2 L1192.0,178.6 L1191.0,178.5 L1190.0,178.7 L1189.0,179.2 L1188.0,177.6 L1187.0,180.2 L1186.0,179.7 L1185.0,177.4 L1184.0,179.4 L1183.0,179.3 L1182.0,180.2 L1181.0,178.9 L1180.0,180.0 L1179.0,179.1 L1178.0,180.1 L1177.0,178.3 L1176.0,176.3 L1175.0,179.1 L1174.0,180.4 L1173.0,180.1 L1172.0,179.9 L1171.0,180.9 L1170.0,180.9 L1169.0,179.3 L1168.0,179.2 L1167.0,179.0 L1166.0,178.5 L1165.0,178.2 L1164.0,178.0 L1163.0,177.6 L1162.0,178.7 L1161.0,176.2 L1160.0,178.3 L1159.0,178.9 L1158.0,178.9 L1157.0,179.4 L1156.0,178.3 L1155.0,178.9 L1154.0,180.0 L1153.0,180.2 L1152.0,178.6 L1151.0,180.0 L1150.0,179.6 L1149.0,179.3 L1148.0,178.3 L1147.0,180.3 L1146.0,179.3 L1145.0,179.1 L1144.0,179.2 L1143.0,179.7 L1142.0,179.7 L1141.0,179.2 L1140.0,179.5 L1139.0,179.7 L1138.0,179.5 L1137.0,179.0 L1136.0,178.7 L1135.0,178.7 L1134.0,178.8 L1133.0,178.6 L1132.0,177.3 L1131.0,178.1 L1130.0,178.0 L1129.0,177.9 L1128.0,177.7 L1127.0,177.3 L1126.0,178.8 L1125.0,178.0 L1124.0,178.1 L1123.0,178.4 L1122.0,179.1 L1121.0,178.9 L1120.0,178.0 L1119.0,178.0 L1118.0,177.9 L1117.0,178.4 L1116.0,179.8 L1115.0,179.8 L1114.0,180.5 L1113.0,177.7 L1112.0,178.6 L1111.0,180.1 L1110.0,177.6 L1109.0,178.2 L1108.0,177.8 L1107.0,178.6 L1106.0,180.1 L1105.0,179.7 L1104.0,179.5 L1103.0,179.1 L1102.0,179.8 L1101.0,178.6 L1100.0,177.0 L1099.0,176.3 L1098.0,176.3 L1097.0,176.6 L1096.0,177.1 L1095.0,177.8 L1094.0,179.3 L1093.0,179.6 L1092.0,177.3 L1091.0,177.8 L1090.0,176.6 L1089.0,177.5 L1088.0,176.1 L1087.0,179.5 L1086.0,179.2 L1085.0,177.8 L1084.0,176.7 L1083.0,178.3 L1082.0,178.6 L1081.0,178.3 L1080.0,179.9 L1079.0,180.1 L1078.0,179.4 L1077.0,179.0 L1076.0,179.7 L1075.0,180.9 L1074.0,178.4 L1073.0,179.1 L1072.0,178.4 L1071.0,179.4 L1070.0,179.3 L1069.0,177.3 L1068.0,178.6 L1067.0,179.3 L1066.0,177.6 L1065.0,179.8 L1064.0,178.8 L1063.0,176.8 L1062.0,178.8 L1061.0,178.2 L1060.0,176.6 L1059.0,179.3 L1058.0,178.9 L1057.0,178.4 L1056.0,179.4 L1055.0,179.9 L1054.0,179.8 L1053.0,178.6 L1052.0,176.4 L1051.0,177.8 L1050.0,178.6 L1049.0,179.0 L1048.0,179.2 L1047.0,179.0 L1046.0,178.0 L1045.0,177.0 L1044.0,177.4 L1043.0,178.2 L1042.0,179.6 L1041.0,177.9 L1040.0,179.2 L1039.0,177.7 L1038.0,179.9 L1037.0,179.2 L1036.0,179.7 L1035.0,177.9 L1034.0,178.5 L1033.0,178.5 L1032.0,179.1 L1031.0,176.2 L1030.0,176.5 L1029.0,177.8 L1028.0,177.5 L1027.0,179.3 L1026.0,178.8 L1025.0,179.8 L1024.0,179.5 L1023.0,179.4 L1022.0,178.2 L1021.0,179.3 L1020.0,178.9 L1019.0,179.3 L1018.0,179.0 L1017.0,180.3 L1016.0,177.7 L1015.0,177.6 L1014.0,178.6 L1013.0,179.2 L1012.0,178.0 L1011.0,180.8 L1010.0,180.9 L1009.0,180.9 L1008.0,180.0 L1007.0,179.3 L1006.0,179.3 L1005.0,179.1 L1004.0,179.6 L1003.0,179.2 L1002.0,179.7 L1001.0,178.8 L1000.0,178.8 L999.0,178.6 L998.0,179.0 L997.0,180.1 L996.0,179.7 L995.0,178.4 L994.0,180.6 L993.0,180.8 L992.0,177.5 L991.0,179.2 L990.0,177.2 L989.0,180.0 L988.0,180.3 L987.0,176.8 L986.0,177.8 L985.0,177.4 L984.0,177.2 L983.0,178.5 L982.0,177.7 L981.0,178.5 L980.0,178.7 L979.0,179.1 L978.0,176.3 L977.0,175.8 L976.0,176.6 L975.0,177.6 L974.0,178.2 L973.0,178.8 L972.0,177.1 L971.0,180.0 L970.0,177.4 L969.0,179.8 L968.0,178.3 L967.0,177.5 L966.0,178.1 L965.0,177.0 L964.0,178.4 L963.0,178.7 L962.0,178.6 L961.0,178.1 L960.0,178.2 L959.0,177.9 L958.0,179.4 L957.0,178.9 L956.0,178.3 L955.0,176.4 L954.0,177.0 L953.0,179.5 L952.0,180.1 L951.0,179.1 L950.0,178.5 L949.0,178.1 L948.0,178.9 L947.0,178.1 L946.0,179.5 L945.0,179.1 L944.0,179.5 L943.0,176.3 L942.0,178.7 L941.0,177.9 L940.0,179.3 L939.0,177.0 L938.0,177.2 L937.0,179.6 L936.0,179.2 L935.0,178.5 L934.0,177.4 L933.0,177.2 L932.0,179.4 L931.0,179.2 L930.0,179.8 L929.0,178.2 L928.0,178.7 L927.0,178.9 L926.0,178.3 L925.0,177.5 L924.0,177.6 L923.0,176.6 L922.0,178.2 L921.0,176.3 L920.0,178.4 L919.0,178.2 L918.0,177.3 L917.0,177.5 L916.0,178.8 L915.0,179.4 L914.0,179.3 L913.0,179.3 L912.0,179.0 L911.0,179.7 L910.0,179.7 L909.0,178.6 L908.0,177.3 L907.0,179.1 L906.0,180.7 L905.0,180.4 L904.0,177.9 L903.0,180.7 L902.0,180.9 L901.0,180.9 L900.0,180.9 L899.0,177.8 L898.0,180.2 L897.0,177.8 L896.0,180.4 L895.0,180.6 L894.0,179.1 L893.0,179.6 L892.0,179.2 L891.0,180.1 L890.0,177.5 L889.0,177.5 L888.0,179.3 L887.0,178.9 L886.0,180.0 L885.0,179.8 L884.0,177.5 L883.0,177.6 L882.0,177.7 L881.0,177.4 L880.0,178.3 L879.0,177.5 L878.0,180.0 L877.0,178.6 L876.0,178.2 L875.0,178.9 L874.0,179.0 L873.0,179.5 L872.0,178.4 L871.0,179.5 L870.0,177.8 L869.0,178.7 L868.0,176.1 L867.0,177.1 L866.0,179.0 L865.0,177.9 L864.0,178.1 L863.0,178.4 L862.0,177.7 L861.0,179.2 L860.0,179.2 L859.0,179.3 L858.0,179.3 L857.0,179.3 L856.0,178.7 L855.0,178.5 L854.0,177.7 L853.0,177.9 L852.0,178.1 L851.0,179.0 L850.0,178.0 L849.0,179.5 L848.0,179.4 L847.0,179.8 L846.0,179.2 L845.0,176.6 L844.0,179.0 L843.0,177.1 L842.0,179.6 L841.0,177.6 L840.0,180.0 L839.0,180.3 L838.0,179.7 L837.0,177.4 L836.0,177.2 L835.0,177.5 L834.0,177.6 L833.0,178.6 L832.0,178.1 L831.0,178.2 L830.0,178.2 L829.0,178.2 L828.0,178.2 L827.0,176.6 L826.0,177.4 L825.0,177.6 L824.0,177.6 L823.0,177.8 L822.0,176.8 L821.0,178.5 L820.0,179.0 L819.0,178.8 L818.0,179.4 L817.0,177.1 L816.0,178.6 L815.0,176.9 L814.0,178.5 L813.0,179.2 L812.0,180.2 L811.0,177.8 L810.0,180.9 L809.0,180.6 L808.0,179.9 L807.0,178.9 L806.0,178.4 L805.0,177.5 L804.0,179.5 L803.0,180.0 L802.0,177.9 L801.0,178.2 L800.0,177.8 L799.0,178.4 L798.0,178.5 L797.0,178.3 L796.0,177.2 L795.0,179.4 L794.0,179.6 L793.0,180.5 L792.0,180.3 L791.0,180.3 L790.0,179.2 L789.0,178.3 L788.0,180.0 L787.0,177.2 L786.0,179.4 L785.0,179.3 L784.0,178.6 L783.0,176.6 L782.0,178.5 L781.0,179.4 L780.0,179.8 L779.0,179.5 L778.0,178.8 L777.0,177.8 L776.0,177.4 L775.0,178.3 L774.0,176.2 L773.0,177.9 L772.0,180.4 L771.0,180.7 L770.0,178.0 L769.0,180.1 L768.0,180.2 L767.0,178.8 L766.0,179.7 L765.0,178.9 L764.0,177.8 L763.0,178.8 L762.0,180.2 L761.0,180.9 L760.0,180.2 L759.0,179.8 L758.0,178.4 L757.0,179.1 L756.0,176.2 L755.0,179.5 L754.0,178.5 L753.0,177.3 L752.0,179.1 L751.0,179.5 L750.0,179.7 L749.0,178.8 L748.0,178.6 L747.0,178.9 L746.0,177.7 L745.0,177.4 L744.0,178.3 L743.0,177.7 L742.0,177.0 L741.0,178.6 L740.0,177.8 L739.0,180.1 L738.0,178.4 L737.0,180.0 L736.0,179.3 L735.0,180.4 L734.0,180.0 L733.0,179.5 L732.0,179.6 L731.0,179.0 L730.0,179.7 L729.0,179.4 L728.0,179.5 L727.0,179.0 L726.0,180.0 L725.0,177.4 L724.0,178.8 L723.0,179.0 L722.0,180.4 L721.0,180.1 L720.0,176.8 L719.0,179.9 L718.0,180.9 L717.0,180.9 L716.0,180.9 L715.0,180.9 L714.0,178.3 L713.0,179.5 L712.0,179.0 L711.0,179.0 L710.0,180.7 L709.0,180.9 L708.0,180.9 L707.0,180.7 L706.0,180.6 L705.0,179.2 L704.0,178.7 L703.0,177.8 L702.0,177.7 L701.0,178.0 L700.0,179.5 L699.0,179.4 L698.0,178.8 L697.0,178.5 L696.0,179.0 L695.0,176.9 L694.0,178.4 L693.0,177.7 L692.0,179.3 L691.0,179.7 L690.0,179.0 L689.0,176.8 L688.0,178.2 L687.0,178.4 L686.0,179.7 L685.0,179.3 L684.0,177.4 L683.0,179.0 L682.0,177.3 L681.0,179.8 L680.0,178.3 L679.0,179.5 L678.0,179.0 L677.0,177.0 L676.0,178.4 L675.0,177.5 L674.0,177.5 L673.0,176.3 L672.0,177.1 L671.0,176.6 L670.0,177.2 L669.0,178.2 L668.0,179.4 L667.0,178.7 L666.0,179.2 L665.0,177.3 L664.0,180.9 L663.0,180.9 L662.0,178.8 L661.0,180.1 L660.0,179.6 L659.0,179.9 L658.0,176.5 L657.0,177.7 L656.0,176.1 L655.0,179.0 L654.0,177.7 L653.0,178.8 L652.0,179.0 L651.0,180.0 L650.0,179.8 L649.0,180.0 L648.0,178.9 L647.0,177.0 L646.0,177.6 L645.0,179.6 L644.0,180.4 L643.0,178.1 L642.0,179.2 L641.0,177.5 L640.0,177.9 L639.0,178.0 L638.0,176.8 L637.0,179.3 L636.0,180.1 L635.0,180.9 L634.0,177.7 L633.0,177.2 L632.0,177.7 L631.0,179.7 L630.0,180.4 L629.0,179.3 L628.0,177.4 L627.0,179.6 L626.0,178.3 L625.0,179.0 L624.0,178.3 L623.0,178.8 L622.0,177.2 L621.0,177.6 L620.0,177.8 L619.0,178.8 L618.0,178.8 L617.0,178.7 L616.0,179.2 L615.0,179.9 L614.0,179.2 L613.0,177.4 L612.0,178.5 L611.0,177.1 L610.0,177.4 L609.0,179.1 L608.0,179.2 L607.0,177.7 L606.0,178.1 L605.0,176.3 L604.0,177.4 L603.0,178.3 L602.0,179.3 L601.0,180.1 L600.0,178.4 L599.0,179.3 L598.0,176.6 L597.0,178.7 L596.0,177.4 L595.0,179.4 L594.0,178.2 L593.0,179.7 L592.0,179.5 L591.0,178.2 L590.0,176.4 L589.0,178.3 L588.0,179.2 L587.0,176.6 L586.0,177.1 L585.0,177.0 L584.0,178.0 L583.0,179.2 L582.0,179.2 L581.0,177.3 L580.0,178.6 L579.0,178.6 L578.0,177.9 L577.0,178.5 L576.0,178.0 L575.0,178.4 L574.0,179.8 L573.0,177.6 L572.0,179.9 L571.0,177.8 L570.0,178.6 L569.0,180.0 L568.0,179.1 L567.0,178.0 L566.0,176.3 L565.0,177.9 L564.0,178.7 L563.0,178.5 L562.0,177.6 L561.0,179.2 L560.0,179.8 L559.0,178.4 L558.0,178.7 L557.0,179.3 L556.0,178.5 L555.0,177.5 L554.0,177.0 L553.0,177.5 L552.0,178.5 L551.0,178.3 L550.0,177.5 L549.0,177.2 L548.0,179.3 L547.0,177.2 L546.0,178.9 L545.0,177.9 L544.0,178.1 L543.0,177.0 L542.0,178.0 L541.0,178.1 L540.0,180.9 L539.0,177.2 L538.0,176.4 L537.0,178.6 L536.0,179.6 L535.0,179.7 L534.0,179.6 L533.0,177.9 L532.0,178.7 L531.0,177.8 L530.0,178.1 L529.0,176.7 L528.0,179.0 L527.0,178.7 L526.0,178.7 L525.0,179.5 L524.0,179.5 L523.0,178.2 L522.0,176.9 L521.0,178.5 L520.0,180.9 L519.0,179.2 L518.0,178.1 L517.0,177.1 L516.0,178.3 L515.0,176.9 L514.0,177.8 L513.0,177.7 L512.0,178.6 L511.0,179.0 L510.0,179.1 L509.0,177.9 L508.0,178.7 L507.0,179.9 L506.0,179.4 L505.0,179.8 L504.0,179.4 L503.0,180.0 L502.0,179.5 L501.0,178.7 L500.0,178.4 L499.0,176.5 L498.0,178.4 L497.0,178.2 L496.0,177.8 L495.0,177.1 L494.0,176.9 L493.0,177.7 L492.0,178.0 L491.0,176.9 L490.0,179.2 L489.0,177.7 L488.0,177.6 L487.0,176.2 L486.0,177.6 L485.0,177.8 L484.0,178.2 L483.0,177.9 L482.0,178.5 L481.0,177.6 L480.0,178.3 L479.0,175.9 L478.0,177.5 L477.0,176.2 L476.0,178.3 L475.0,178.8 L474.0,179.5 L473.0,179.1 L472.0,177.3 L471.0,175.7 L470.0,176.4 L469.0,178.6 L468.0,179.9 L467.0,179.7 L466.0,180.2 L465.0,178.3 L464.0,179.7 L463.0,180.4 L462.0,178.6 L461.0,179.3 L460.0,179.2 L459.0,180.0 L458.0,178.9 L457.0,179.6 L456.0,178.0 L455.0,178.2 L454.0,178.3 L453.0,178.8 L452.0,179.3 L451.0,179.5 L450.0,179.7 L449.0,179.4 L448.0,179.0 L447.0,178.6 L446.0,177.3 L445.0,178.6 L444.0,180.1 L443.0,179.7 L442.0,180.1 L441.0,179.5 L440.0,178.8 L439.0,179.4 L438.0,178.5 L437.0,177.9 L436.0,176.3 L435.0,178.2 L434.0,178.3 L433.0,179.3 L432.0,177.2 L431.0,179.5 L430.0,178.6 L429.0,178.9 L428.0,177.3 L427.0,176.9 L426.0,179.2 L425.0,179.3 L424.0,176.6 L423.0,179.0 L422.0,179.5 L421.0,180.9 L420.0,180.9 L419.0,179.6 L418.0,179.2 L417.0,180.1 L416.0,178.2 L415.0,177.4 L414.0,176.8 L413.0,178.0 L412.0,179.8 L411.0,179.6 L410.0,178.6 L409.0,178.7 L408.0,179.2 L407.0,179.8 L406.0,177.6 L405.0,179.7 L404.0,179.3 L403.0,178.9 L402.0,180.0 L401.0,180.1 L400.0,179.3 L399.0,176.9 L398.0,177.3 L397.0,179.1 L396.0,179.4 L395.0,177.9 L394.0,178.4 L393.0,176.4 L392.0,178.2 L391.0,177.5 L390.0,177.9 L389.0,178.7 L388.0,177.5 L387.0,178.3 L386.0,178.7 L385.0,176.8 L384.0,178.3 L383.0,177.9 L382.0,178.5 L381.0,179.5 L380.0,180.7 L379.0,180.0 L378.0,180.3 L377.0,176.6 L376.0,179.1 L375.0,179.2Z" fill="#3b9e6e"/>
<path d="M375.0,188.9 L376.0,186.9 L377.0,187.8 L378.0,185.8 L379.0,186.1 L380.0,185.4 L381.0,187.9 L382.0,186.4 L383.0,186.9 L384.0,186.8 L385.0,186.6 L386.0,187.0 L387.0,188.2 L388.0,186.4 L389.0,188.3 L390.0,189.0 L391.0,188.3 L392.0,188.1 L393.0,186.8 L394.0,185.2 L395.0,185.1 L396.0,185.1 L397.0,187.2 L398.0,185.1 L399.0,185.1 L400.0,186.4 L401.0,186.1 L402.0,187.7 L403.0,187.9 L404.0,187.2 L405.0,186.3 L406.0,186.7 L407.0,187.7 L408.0,188.0 L409.0,187.4 L410.0,186.4 L411.0,188.0 L412.0,187.7 L413.0,189.4 L414.0,188.4 L415.0,187.9 L416.0,189.1 L417.0,187.2 L418.0,186.8 L419.0,186.4 L420.0,187.4 L421.0,188.2 L422.0,186.9 L423.0,186.3 L424.0,185.9 L425.0,185.8 L426.0,186.5 L427.0,185.7 L428.0,185.7 L429.0,185.1 L430.0,185.5 L431.0,185.1 L432.0,185.7 L433.0,186.0 L434.0,186.9 L435.0,187.3 L436.0,187.1 L437.0,186.9 L438.0,186.8 L439.0,188.3 L440.0,185.7 L441.0,188.3 L442.0,189.5 L443.0,189.3 L444.0,188.7 L445.0,189.9 L446.0,189.2 L447.0,186.6 L448.0,186.8 L449.0,187.3 L450.0,187.0 L451.0,186.5 L452.0,187.4 L453.0,187.4 L454.0,187.0 L455.0,186.8 L456.0,188.2 L457.0,188.1 L458.0,186.8 L459.0,186.3 L460.0,187.3 L461.0,188.5 L462.0,188.8 L463.0,187.8 L464.0,187.6 L465.0,186.4 L466.0,186.8 L467.0,186.5 L468.0,186.3 L469.0,186.5 L470.0,187.4 L471.0,187.7 L472.0,188.4 L473.0,187.5 L474.0,186.6 L475.0,188.8 L476.0,187.0 L477.0,189.4 L478.0,189.1 L479.0,190.0 L480.0,188.1 L481.0,187.0 L482.0,186.3 L483.0,187.8 L484.0,186.7 L485.0,186.4 L486.0,186.0 L487.0,186.5 L488.0,186.2 L489.0,186.7 L490.0,189.3 L491.0,188.3 L492.0,187.1 L493.0,186.8 L494.0,188.8 L495.0,187.8 L496.0,185.7 L497.0,186.0 L498.0,185.4 L499.0,186.3 L500.0,188.7 L501.0,187.0 L502.0,187.2 L503.0,188.1 L504.0,189.9 L505.0,189.1 L506.0,185.9 L507.0,185.1 L508.0,188.6 L509.0,187.2 L510.0,186.7 L511.0,186.7 L512.0,185.9 L513.0,187.0 L514.0,186.8 L515.0,186.1 L516.0,188.2 L517.0,185.4 L518.0,188.1 L519.0,185.7 L520.0,185.6 L521.0,185.6 L522.0,186.4 L523.0,186.7 L524.0,186.6 L525.0,186.8 L526.0,186.7 L527.0,186.5 L528.0,186.7 L529.0,188.2 L530.0,185.7 L531.0,185.1 L532.0,185.1 L533.0,185.1 L534.0,185.4 L535.0,189.0 L536.0,189.0 L537.0,190.1 L538.0,189.4 L539.0,187.1 L540.0,187.3 L541.0,186.9 L542.0,188.0 L543.0,186.8 L544.0,188.4 L545.0,186.3 L546.0,187.8 L547.0,188.4 L548.0,188.4 L549.0,189.6 L550.0,187.1 L551.0,186.1 L552.0,185.8 L553.0,185.1 L554.0,186.1 L555.0,185.7 L556.0,186.3 L557.0,188.4 L558.0,189.1 L559.0,188.6 L560.0,189.4 L561.0,186.1 L562.0,187.6 L563.0,187.0 L564.0,186.5 L565.0,186.0 L566.0,186.7 L567.0,189.4 L568.0,187.2 L569.0,187.2 L570.0,188.0 L571.0,189.5 L572.0,189.8 L573.0,189.9 L574.0,186.5 L575.0,189.0 L576.0,187.8 L577.0,188.9 L578.0,187.7 L579.0,186.6 L580.0,187.4 L581.0,187.7 L582.0,186.5 L583.0,187.5 L584.0,187.0 L585.0,188.5 L586.0,187.2 L587.0,186.7 L588.0,187.8 L589.0,186.5 L590.0,186.4 L591.0,186.0 L592.0,187.0 L593.0,186.6 L594.0,187.1 L595.0,186.1 L596.0,185.8 L597.0,185.1 L598.0,185.7 L599.0,186.4 L600.0,187.4 L601.0,187.9 L602.0,187.4 L603.0,187.8 L604.0,187.5 L605.0,185.7 L606.0,186.1 L607.0,186.6 L608.0,186.7 L609.0,186.4 L610.0,186.8 L611.0,187.1 L612.0,187.9 L613.0,187.6 L614.0,188.1 L615.0,187.1 L616.0,186.9 L617.0,188.9 L618.0,186.5 L619.0,186.7 L620.0,186.2 L621.0,186.1 L622.0,186.5 L623.0,186.6 L624.0,187.0 L625.0,186.8 L626.0,186.2 L627.0,187.5 L628.0,189.4 L629.0,189.5 L630.0,188.6 L631.0,188.4 L632.0,187.5 L633.0,186.8 L634.0,186.6 L635.0,188.1 L636.0,189.1 L637.0,188.6 L638.0,186.2 L639.0,185.6 L640.0,187.1 L641.0,188.1 L642.0,187.6 L643.0,186.5 L644.0,187.3 L645.0,188.8 L646.0,186.8 L647.0,189.1 L648.0,186.6 L649.0,186.3 L650.0,187.5 L651.0,187.6 L652.0,186.7 L653.0,188.1 L654.0,187.2 L655.0,188.2 L656.0,186.5 L657.0,188.4 L658.0,187.5 L659.0,187.6 L660.0,186.7 L661.0,187.9 L662.0,189.8 L663.0,188.0 L664.0,186.6 L665.0,186.0 L666.0,186.0 L667.0,186.0 L668.0,185.7 L669.0,185.1 L670.0,185.1 L671.0,185.8 L672.0,186.3 L673.0,188.8 L674.0,187.2 L675.0,187.9 L676.0,186.7 L677.0,186.4 L678.0,186.3 L679.0,187.0 L680.0,187.3 L681.0,187.9 L682.0,188.6 L683.0,186.7 L684.0,188.0 L685.0,186.4 L686.0,185.3 L687.0,185.8 L688.0,185.8 L689.0,187.1 L690.0,187.0 L691.0,186.8 L692.0,187.0 L693.0,187.1 L694.0,188.9 L695.0,186.7 L696.0,185.8 L697.0,188.0 L698.0,186.2 L699.0,187.9 L700.0,189.4 L701.0,187.3 L702.0,187.9 L703.0,186.6 L704.0,186.8 L705.0,187.3 L706.0,188.0 L707.0,188.5 L708.0,188.2 L709.0,186.5 L710.0,186.2 L711.0,186.4 L712.0,186.5 L713.0,186.8 L714.0,188.1 L715.0,187.5 L716.0,189.2 L717.0,188.0 L718.0,185.8 L719.0,186.0 L720.0,185.2 L721.0,186.1 L722.0,188.2 L723.0,186.3 L724.0,186.9 L725.0,188.4 L726.0,187.0 L727.0,186.4 L728.0,185.8 L729.0,186.1 L730.0,185.6 L731.0,188.7 L732.0,186.4 L733.0,186.6 L734.0,186.7 L735.0,185.5 L736.0,185.7 L737.0,188.0 L738.0,186.8 L739.0,186.2 L740.0,185.7 L741.0,185.1 L742.0,186.3 L743.0,187.3 L744.0,187.5 L745.0,188.8 L746.0,185.1 L747.0,187.0 L748.0,187.7 L749.0,187.9 L750.0,189.4 L751.0,188.2 L752.0,187.0 L753.0,186.9 L754.0,187.2 L755.0,187.8 L756.0,187.0 L757.0,185.4 L758.0,188.3 L759.0,186.8 L760.0,189.8 L761.0,186.9 L762.0,187.6 L763.0,187.1 L764.0,186.5 L765.0,189.0 L766.0,187.6 L767.0,187.7 L768.0,189.5 L769.0,187.9 L770.0,186.5 L771.0,188.1 L772.0,186.2 L773.0,189.2 L774.0,186.6 L775.0,187.0 L776.0,186.3 L777.0,186.9 L778.0,186.2 L779.0,186.2 L780.0,186.6 L781.0,187.5 L782.0,189.9 L783.0,188.7 L784.0,188.2 L785.0,187.4 L786.0,187.3 L787.0,188.0 L788.0,186.7 L789.0,186.7 L790.0,186.5 L791.0,187.8 L792.0,188.1 L793.0,186.5 L794.0,187.4 L795.0,187.1 L796.0,187.7 L797.0,186.6 L798.0,186.3 L799.0,185.7 L800.0,186.1 L801.0,186.6 L802.0,187.8 L803.0,188.1 L804.0,185.1 L805.0,185.5 L806.0,185.7 L807.0,188.6 L808.0,186.4 L809.0,187.3 L810.0,187.1 L811.0,186.7 L812.0,185.6 L813.0,188.7 L814.0,185.5 L815.0,185.5 L816.0,185.3 L817.0,185.7 L818.0,185.9 L819.0,187.0 L820.0,186.9 L821.0,188.2 L822.0,186.3 L823.0,186.5 L824.0,189.5 L825.0,188.0 L826.0,186.8 L827.0,185.3 L828.0,185.6 L829.0,187.9 L830.0,189.2 L831.0,187.8 L832.0,187.9 L833.0,188.1 L834.0,187.8 L835.0,188.4 L836.0,188.6 L837.0,187.8 L838.0,188.2 L839.0,187.9 L840.0,189.6 L841.0,188.3 L842.0,188.9 L843.0,186.4 L844.0,185.3 L845.0,185.1 L846.0,188.0 L847.0,186.1 L848.0,186.7 L849.0,187.0 L850.0,186.7 L851.0,186.4 L852.0,185.8 L853.0,189.5 L854.0,187.9 L855.0,188.1 L856.0,186.9 L857.0,186.7 L858.0,188.5 L859.0,186.1 L860.0,185.3 L861.0,186.0 L862.0,188.7 L863.0,189.0 L864.0,188.4 L865.0,190.0 L866.0,188.1 L867.0,186.8 L868.0,187.7 L869.0,187.6 L870.0,187.3 L871.0,186.6 L872.0,186.5 L873.0,186.3 L874.0,185.6 L875.0,187.8 L876.0,186.9 L877.0,186.4 L878.0,186.9 L879.0,187.0 L880.0,186.4 L881.0,185.5 L882.0,188.8 L883.0,186.4 L884.0,187.5 L885.0,185.6 L886.0,186.7 L887.0,185.6 L888.0,186.4 L889.0,187.4 L890.0,188.0 L891.0,187.6 L892.0,186.2 L893.0,187.1 L894.0,187.6 L895.0,188.5 L896.0,189.3 L897.0,188.4 L898.0,187.9 L899.0,187.2 L900.0,187.7 L901.0,187.9 L902.0,189.2 L903.0,187.5 L904.0,185.5 L905.0,189.7 L906.0,187.4 L907.0,187.4 L908.0,186.7 L909.0,187.0 L910.0,187.5 L911.0,185.8 L912.0,186.6 L913.0,186.6 L914.0,189.3 L915.0,187.9 L916.0,187.8 L917.0,186.9 L918.0,189.3 L919.0,188.9 L920.0,185.8 L921.0,185.2 L922.0,186.2 L923.0,187.3 L924.0,188.9 L925.0,189.2 L926.0,188.5 L927.0,188.4 L928.0,187.3 L929.0,186.2 L930.0,185.4 L931.0,185.1 L932.0,186.0 L933.0,187.8 L934.0,186.9 L935.0,186.0 L936.0,186.7 L937.0,186.9 L938.0,186.9 L939.0,186.2 L940.0,186.1 L941.0,186.7 L942.0,186.9 L943.0,186.5 L944.0,187.5 L945.0,186.3 L946.0,186.5 L947.0,188.6 L948.0,187.9 L949.0,188.2 L950.0,188.9 L951.0,185.9 L952.0,188.0 L953.0,188.7 L954.0,187.3 L955.0,186.8 L956.0,186.8 L957.0,185.1 L958.0,187.0 L959.0,185.1 L960.0,187.4 L961.0,189.1 L962.0,187.0 L963.0,189.6 L964.0,187.2 L965.0,188.7 L966.0,186.4 L967.0,186.6 L968.0,185.3 L969.0,185.5 L970.0,185.1 L971.0,188.5 L972.0,185.6 L973.0,186.7 L974.0,189.4 L975.0,189.3 L976.0,186.2 L977.0,185.8 L978.0,185.7 L979.0,188.4 L980.0,186.6 L981.0,187.1 L982.0,186.8 L983.0,187.1 L984.0,187.3 L985.0,187.5 L986.0,187.8 L987.0,188.5 L988.0,188.0 L989.0,187.8 L990.0,187.0 L991.0,186.3 L992.0,186.1 L993.0,185.2 L994.0,185.1 L995.0,185.6 L996.0,186.5 L997.0,187.0 L998.0,189.4 L999.0,187.1 L1000.0,188.1 L1001.0,189.5 L1002.0,186.6 L1003.0,187.1 L1004.0,186.5 L1005.0,186.8 L1006.0,187.8 L1007.0,186.9 L1008.0,187.4 L1009.0,186.3 L1010.0,185.6 L1011.0,185.8 L1012.0,189.0 L1013.0,186.7 L1014.0,189.1 L1015.0,187.6 L1016.0,188.5 L1017.0,185.6 L1018.0,185.8 L1019.0,187.0 L1020.0,188.4 L1021.0,187.0 L1022.0,187.2 L1023.0,185.9 L1024.0,188.2 L1025.0,186.9 L1026.0,187.0 L1027.0,187.4 L1028.0,188.1 L1029.0,187.3 L1030.0,187.0 L1031.0,188.9 L1032.0,187.9 L1033.0,189.8 L1034.0,187.7 L1035.0,187.6 L1036.0,189.7 L1037.0,187.3 L1038.0,186.1 L1039.0,187.3 L1040.0,185.1 L1041.0,187.4 L1042.0,186.8 L1043.0,188.9 L1044.0,187.3 L1045.0,188.6 L1046.0,186.3 L1047.0,186.0 L1048.0,185.8 L1049.0,188.3 L1050.0,186.8 L1051.0,188.3 L1052.0,187.6 L1053.0,188.9 L1054.0,186.7 L1055.0,186.9 L1056.0,188.3 L1057.0,186.0 L1058.0,187.2 L1059.0,189.2 L1060.0,189.0 L1061.0,188.7 L1062.0,187.8 L1063.0,188.7 L1064.0,185.9 L1065.0,186.6 L1066.0,186.2 L1067.0,188.1 L1068.0,186.1 L1069.0,185.4 L1070.0,186.0 L1071.0,186.7 L1072.0,186.6 L1073.0,186.2 L1074.0,188.6 L1075.0,187.0 L1076.0,187.6 L1077.0,189.1 L1078.0,188.2 L1079.0,186.9 L1080.0,189.2 L1081.0,188.9 L1082.0,187.9 L1083.0,188.7 L1084.0,186.3 L1085.0,186.9 L1086.0,185.9 L1087.0,188.5 L1088.0,185.8 L1089.0,187.7 L1090.0,186.5 L1091.0,187.4 L1092.0,187.0 L1093.0,187.8 L1094.0,187.9 L1095.0,187.7 L1096.0,187.7 L1097.0,189.0 L1098.0,188.3 L1099.0,188.0 L1100.0,188.2 L1101.0,187.8 L1102.0,187.0 L1103.0,187.1 L1104.0,188.3 L1105.0,188.8 L1106.0,188.8 L1107.0,188.1 L1108.0,189.3 L1109.0,187.7 L1110.0,188.7 L1111.0,187.3 L1112.0,186.4 L1113.0,186.5 L1114.0,188.7 L1115.0,186.3 L1116.0,186.4 L1117.0,187.8 L1118.0,185.2 L1119.0,187.4 L1120.0,186.4 L1121.0,187.6 L1122.0,187.2 L1123.0,186.4 L1124.0,185.1 L1125.0,185.1 L1126.0,188.0 L1127.0,186.3 L1128.0,186.6 L1129.0,186.6 L1130.0,186.8 L1131.0,186.9 L1132.0,186.9 L1133.0,187.0 L1134.0,186.4 L1135.0,186.7 L1136.0,187.3 L1137.0,187.5 L1138.0,188.4 L1139.0,188.2 L1140.0,187.7 L1141.0,186.0 L1142.0,186.2 L1143.0,187.1 L1144.0,187.3 L1145.0,187.1 L1146.0,186.1 L1147.0,186.3 L1148.0,186.3 L1149.0,185.9 L1150.0,188.6 L1151.0,187.5 L1152.0,188.0 L1153.0,187.2 L1154.0,187.7 L1155.0,186.1 L1156.0,185.4 L1157.0,185.1 L1158.0,185.1 L1159.0,185.1 L1160.0,185.5 L1161.0,185.6 L1162.0,186.2 L1163.0,189.0 L1164.0,187.4 L1165.0,188.1 L1166.0,189.8 L1167.0,186.9 L1168.0,185.9 L1169.0,185.6 L1170.0,186.4 L1171.0,189.4 L1172.0,188.3 L1173.0,188.2 L1174.0,188.6 L1175.0,187.1 L1176.0,188.0 L1177.0,187.8 L1178.0,187.1 L1179.0,187.0 L1180.0,186.2 L1181.0,187.1 L1182.0,186.9 L1183.0,186.3 L1184.0,185.7 L1185.0,186.6 L1186.0,187.8 L1187.0,189.4 L1188.0,189.0 L1189.0,187.9 L1190.0,186.3 L1191.0,186.4 L1192.0,185.6 L1193.0,188.7 L1194.0,187.3 L1195.0,188.6 L1196.0,187.5 L1197.0,190.4 L1198.0,188.1 L1199.0,189.0 L1200.0,187.6 L1201.0,188.6 L1202.0,187.2 L1203.0,187.7 L1204.0,186.9 L1205.0,187.3 L1206.0,187.4 L1207.0,188.1 L1208.0,189.3 L1209.0,187.7 L1210.0,187.9 L1211.0,188.6 L1212.0,188.3 L1213.0,185.6 L1214.0,186.4 L1215.0,186.4 L1216.0,186.8 L1217.0,186.4 L1218.0,186.5 L1219.0,187.1 L1220.0,186.9 L1221.0,186.9 L1222.0,186.9 L1223.0,187.1 L1224.0,187.0 L1225.0,185.9 L1226.0,186.2 L1227.0,186.1 L1228.0,186.8 L1229.0,186.3 L1230.0,186.9 L1231.0,188.6 L1232.0,186.9 L1233.0,186.3 L1234.0,186.4 L1235.0,185.6 L1236.0,187.2 L1237.0,186.4 L1238.0,186.7 L1239.0,185.7 L1240.0,186.3 L1241.0,186.5 L1242.0,187.3 L1243.0,187.3 L1244.0,188.8 L1245.0,187.7 L1246.0,188.7 L1247.0,189.4 L1248.0,189.8 L1249.0,187.9 L1250.0,187.4 L1251.0,188.2 L1252.0,189.3 L1253.0,187.5 L1254.0,187.0 L1255.0,185.1 L1256.0,185.1 L1257.0,187.0 L1258.0,187.6 L1259.0,188.1 L1260.0,188.6 L1261.0,185.9 L1262.0,187.4 L1263.0,186.7 L1264.0,187.9 L1265.0,188.7 L1266.0,189.2 L1267.0,187.6 L1268.0,185.6 L1269.0,186.6 L1270.0,187.4 L1271.0,187.8 L1272.0,186.5 L1273.0,186.7 L1274.0,187.0 L1275.0,186.4 L1276.0,188.6 L1277.0,186.0 L1278.0,186.2 L1279.0,187.7 L1280.0,186.8 L1281.0,186.8 L1282.0,187.0 L1283.0,186.9 L1284.0,187.2 L1285.0,186.2 L1286.0,188.6 L1287.0,186.9 L1288.0,187.7 L1289.0,187.8 L1290.0,187.4 L1291.0,186.6 L1292.0,186.9 L1293.0,187.6 L1294.0,187.5 L1295.0,187.3 L1296.0,186.2 L1297.0,187.3 L1298.0,185.2 L1299.0,187.2 L1300.0,186.3 L1301.0,189.6 L1302.0,188.6 L1303.0,188.6 L1304.0,188.3 L1305.0,187.6 L1306.0,187.9 L1307.0,186.8 L1308.0,190.2 L1309.0,188.9 L1310.0,189.9 L1311.0,188.6 L1312.0,189.4 L1313.0,189.9 L1314.0,191.1 L1315.0,190.2 L1316.0,191.0 L1317.0,190.1 L1318.0,190.4 L1319.0,190.1 L1320.0,190.3 L1321.0,190.6 L1322.0,189.8 L1323.0,189.9 L1324.0,190.9 L1325.0,190.0 L1326.0,190.2 L1327.0,190.1 L1328.0,190.8 L1329.0,190.1 L1330.0,190.1 L1331.0,191.2 L1332.0,190.8 L1333.0,189.9 L1334.0,189.7 L1335.0,190.3 L1336.0,190.1 L1337.0,189.7 L1338.0,189.9 L1339.0,189.7 L1340.0,190.7 L1341.0,190.7 L1342.0,190.0 L1343.0,190.0 L1344.0,190.2 L1345.0,190.0 L1346.0,189.4 L1347.0,189.5 L1348.0,189.6 L1349.0,190.1 L1350.0,190.2 L1351.0,191.1 L1352.0,191.2 L1353.0,187.9 L1354.0,186.9 L1355.0,186.9 L1356.0,187.0 L1357.0,187.7 L1358.0,187.4 L1359.0,187.0 L1360.0,186.2 L1361.0,186.5 L1362.0,186.7 L1363.0,187.2 L1364.0,186.5 L1365.0,188.1 L1366.0,187.6 L1367.0,188.7 L1368.0,189.7 L1369.0,187.9 L1370.0,187.6 L1371.0,187.8 L1372.0,187.1 L1373.0,187.9 L1374.0,187.8 L1375.0,188.1 L1376.0,187.1 L1377.0,186.2 L1378.0,186.5 L1379.0,186.6 L1380.0,186.7 L1381.0,185.7 L1382.0,186.1 L1383.0,186.9 L1384.0,187.6 L1385.0,187.2 L1386.0,186.1 L1387.0,187.9 L1388.0,185.8 L1389.0,189.2 L1390.0,186.8 L1391.0,186.5 L1392.0,186.2 L1393.0,187.0 L1394.0,187.1 L1395.0,187.2 L1396.0,189.0 L1397.0,187.3 L1398.0,187.8 L1399.0,186.6 L1400.0,187.2 L1401.0,188.9 L1402.0,189.2 L1403.0,189.7 L1404.0,187.8 L1405.0,188.4 L1406.0,187.1 L1407.0,187.6 L1408.0,188.3 L1409.0,187.6 L1410.0,188.0 L1411.0,188.6 L1412.0,187.2 L1413.0,187.0 L1414.0,185.8 L1415.0,186.0 L1416.0,186.1 L1417.0,185.6 L1418.0,185.1 L1419.0,185.4 L1420.0,189.1 L1421.0,187.1 L1422.0,187.6 L1423.0,186.6 L1424.0,186.9 L1425.0,186.4 L1426.0,186.6 L1427.0,187.2 L1428.0,187.6 L1429.0,188.0 L1430.0,188.3 L1431.0,186.5 L1432.0,185.7 L1433.0,187.3 L1434.0,186.8 L1435.0,186.9 L1436.0,185.3 L1437.0,186.3 L1438.0,186.6 L1439.0,189.2 L1440.0,186.9 L1441.0,187.1 L1442.0,186.5 L1443.0,187.1 L1444.0,188.2 L1445.0,186.6 L1446.0,185.6 L1447.0,185.3 L1448.0,185.4 L1449.0,187.0 L1450.0,187.4 L1451.0,187.8 L1452.0,188.1 L1453.0,188.5 L1454.0,188.9 L1455.0,189.3 L1456.0,189.8 L1457.0,190.2 L1458.0,190.7 L1459.0,191.1 L1460.0,191.7 L1461.0,192.2 L1462.0,193.0 L1463.0,193.0 L1463.0,193.0 L1462.0,193.0 L1461.0,193.8 L1460.0,194.3 L1459.0,194.9 L1458.0,195.3 L1457.0,195.8 L1456.0,196.2 L1455.0,196.7 L1454.0,197.1 L1453.0,197.5 L1452.0,197.9 L1451.0,198.2 L1450.0,198.6 L1449.0,199.0 L1448.0,196.5 L1447.0,198.7 L1446.0,198.1 L1445.0,199.7 L1444.0,200.5 L1443.0,200.9 L1442.0,197.6 L1441.0,200.2 L1440.0,198.0 L1439.0,199.3 L1438.0,199.0 L1437.0,199.2 L1436.0,199.6 L1435.0,198.5 L1434.0,198.8 L1433.0,196.7 L1432.0,197.8 L1431.0,198.4 L1430.0,198.8 L1429.0,199.2 L1428.0,199.6 L1427.0,199.0 L1426.0,200.0 L1425.0,199.7 L1424.0,200.0 L1423.0,199.4 L1422.0,199.7 L1421.0,200.5 L1420.0,198.7 L1419.0,198.4 L1418.0,198.2 L1417.0,198.4 L1416.0,199.2 L1415.0,200.5 L1414.0,199.4 L1413.0,200.2 L1412.0,198.2 L1411.0,199.6 L1410.0,198.3 L1409.0,198.0 L1408.0,197.4 L1407.0,197.0 L1406.0,198.1 L1405.0,199.1 L1404.0,199.4 L1403.0,198.8 L1402.0,197.8 L1401.0,199.2 L1400.0,197.7 L1399.0,198.8 L1398.0,196.6 L1397.0,198.5 L1396.0,199.7 L1395.0,199.7 L1394.0,198.5 L1393.0,198.7 L1392.0,197.2 L1391.0,197.1 L1390.0,198.7 L1389.0,199.7 L1388.0,200.3 L1387.0,199.8 L1386.0,200.1 L1385.0,198.9 L1384.0,197.0 L1383.0,198.8 L1382.0,198.6 L1381.0,196.7 L1380.0,198.8 L1379.0,199.1 L1378.0,196.7 L1377.0,198.1 L1376.0,198.6 L1375.0,197.5 L1374.0,197.7 L1373.0,197.7 L1372.0,198.4 L1371.0,198.3 L1370.0,199.0 L1369.0,198.8 L1368.0,199.2 L1367.0,198.9 L1366.0,199.6 L1365.0,197.3 L1364.0,198.8 L1363.0,196.3 L1362.0,197.0 L1361.0,196.3 L1360.0,198.6 L1359.0,197.8 L1358.0,196.6 L1357.0,197.1 L1356.0,197.6 L1355.0,197.4 L1354.0,196.6 L1353.0,198.2 L1352.0,196.2 L1351.0,196.3 L1350.0,196.1 L1349.0,196.1 L1348.0,196.6 L1347.0,195.9 L1346.0,196.3 L1345.0,196.1 L1344.0,196.2 L1343.0,196.1 L1342.0,195.5 L1341.0,195.3 L1340.0,196.1 L1339.0,196.2 L1338.0,196.1 L1337.0,196.1 L1336.0,195.9 L1335.0,195.8 L1334.0,194.6 L1333.0,195.2 L1332.0,195.8 L1331.0,196.5 L1330.0,197.0 L1329.0,196.8 L1328.0,197.2 L1327.0,195.5 L1326.0,195.0 L1325.0,195.3 L1324.0,195.9 L1323.0,196.0 L1322.0,196.3 L1321.0,195.0 L1320.0,195.9 L1319.0,196.3 L1318.0,196.6 L1317.0,197.4 L1316.0,196.9 L1315.0,197.0 L1314.0,196.1 L1313.0,196.1 L1312.0,195.7 L1311.0,195.3 L1310.0,196.6 L1309.0,196.9 L1308.0,196.4 L1307.0,196.9 L1306.0,196.1 L1305.0,198.8 L1304.0,198.6 L1303.0,196.4 L1302.0,198.2 L1301.0,197.0 L1300.0,197.2 L1299.0,200.0 L1298.0,200.3 L1297.0,199.0 L1296.0,200.0 L1295.0,199.6 L1294.0,198.1 L1293.0,200.1 L1292.0,199.4 L1291.0,196.3 L1290.0,198.5 L1289.0,199.3 L1288.0,199.2 L1287.0,199.7 L1286.0,198.9 L1285.0,199.4 L1284.0,199.2 L1283.0,199.9 L1282.0,197.6 L1281.0,197.1 L1280.0,197.4 L1279.0,198.8 L1278.0,199.1 L1277.0,198.5 L1276.0,198.2 L1275.0,198.8 L1274.0,198.3 L1273.0,198.7 L1272.0,198.2 L1271.0,199.5 L1270.0,199.0 L1269.0,200.0 L1268.0,199.4 L1267.0,199.4 L1266.0,199.0 L1265.0,198.1 L1264.0,198.9 L1263.0,199.0 L1262.0,197.0 L1261.0,199.2 L1260.0,199.1 L1259.0,199.0 L1258.0,197.6 L1257.0,200.1 L1256.0,197.3 L1255.0,199.6 L1254.0,197.2 L1253.0,196.0 L1252.0,196.6 L1251.0,197.4 L1250.0,198.6 L1249.0,199.5 L1248.0,198.6 L1247.0,198.3 L1246.0,198.5 L1245.0,198.4 L1244.0,198.3 L1243.0,198.0 L1242.0,198.7 L1241.0,198.3 L1240.0,197.9 L1239.0,200.3 L1238.0,197.2 L1237.0,200.3 L1236.0,198.3 L1235.0,198.0 L1234.0,199.6 L1233.0,197.6 L1232.0,199.9 L1231.0,200.4 L1230.0,199.9 L1229.0,199.0 L1228.0,198.6 L1227.0,198.3 L1226.0,198.4 L1225.0,199.1 L1224.0,199.0 L1223.0,197.8 L1222.0,196.3 L1221.0,197.8 L1220.0,198.6 L1219.0,199.3 L1218.0,200.2 L1217.0,200.9 L1216.0,200.7 L1215.0,198.3 L1214.0,198.7 L1213.0,200.2 L1212.0,198.0 L1211.0,198.3 L1210.0,197.6 L1209.0,195.7 L1208.0,198.5 L1207.0,198.8 L1206.0,199.3 L1205.0,198.9 L1204.0,198.8 L1203.0,198.7 L1202.0,199.4 L1201.0,199.0 L1200.0,199.2 L1199.0,198.5 L1198.0,198.0 L1197.0,197.9 L1196.0,198.8 L1195.0,196.7 L1194.0,200.1 L1193.0,199.4 L1192.0,196.9 L1191.0,198.9 L1190.0,199.4 L1189.0,199.3 L1188.0,197.6 L1187.0,198.9 L1186.0,198.7 L1185.0,198.3 L1184.0,197.1 L1183.0,199.6 L1182.0,200.9 L1181.0,200.7 L1180.0,198.4 L1179.0,197.2 L1178.0,197.3 L1177.0,199.7 L1176.0,198.4 L1175.0,200.9 L1174.0,197.1 L1173.0,198.8 L1172.0,199.2 L1171.0,199.3 L1170.0,199.7 L1169.0,199.5 L1168.0,200.7 L1167.0,200.9 L1166.0,200.4 L1165.0,197.9 L1164.0,200.2 L1163.0,200.2 L1162.0,200.0 L1161.0,199.8 L1160.0,199.5 L1159.0,198.4 L1158.0,197.7 L1157.0,198.9 L1156.0,199.8 L1155.0,200.5 L1154.0,199.1 L1153.0,197.4 L1152.0,199.1 L1151.0,199.3 L1150.0,198.4 L1149.0,198.6 L1148.0,198.1 L1147.0,198.6 L1146.0,198.8 L1145.0,199.3 L1144.0,199.8 L1143.0,199.9 L1142.0,199.9 L1141.0,199.7 L1140.0,199.2 L1139.0,199.7 L1138.0,200.4 L1137.0,199.7 L1136.0,197.2 L1135.0,200.5 L1134.0,197.8 L1133.0,200.2 L1132.0,200.1 L1131.0,200.3 L1130.0,200.4 L1129.0,198.3 L1128.0,195.7 L1127.0,196.2 L1126.0,198.4 L1125.0,197.6 L1124.0,199.1 L1123.0,198.8 L1122.0,198.3 L1121.0,198.2 L1120.0,199.2 L1119.0,200.2 L1118.0,199.8 L1117.0,200.3 L1116.0,200.1 L1115.0,200.9 L1114.0,200.4 L1113.0,198.5 L1112.0,198.4 L1111.0,200.5 L1110.0,200.0 L1109.0,200.5 L1108.0,199.6 L1107.0,197.9 L1106.0,198.6 L1105.0,198.7 L1104.0,198.2 L1103.0,199.9 L1102.0,199.9 L1101.0,200.2 L1100.0,198.1 L1099.0,199.1 L1098.0,199.4 L1097.0,199.7 L1096.0,199.9 L1095.0,199.2 L1094.0,197.7 L1093.0,198.3 L1092.0,197.8 L1091.0,196.9 L1090.0,196.5 L1089.0,197.1 L1088.0,199.4 L1087.0,199.8 L1086.0,199.9 L1085.0,199.9 L1084.0,200.7 L1083.0,200.4 L1082.0,200.5 L1081.0,197.9 L1080.0,199.9 L1079.0,199.6 L1078.0,200.8 L1077.0,198.5 L1076.0,199.3 L1075.0,197.5 L1074.0,199.6 L1073.0,198.4 L1072.0,200.6 L1071.0,200.1 L1070.0,199.1 L1069.0,196.9 L1068.0,198.4 L1067.0,200.8 L1066.0,200.9 L1065.0,199.4 L1064.0,199.9 L1063.0,199.0 L1062.0,199.7 L1061.0,198.7 L1060.0,199.8 L1059.0,199.1 L1058.0,199.1 L1057.0,199.2 L1056.0,200.1 L1055.0,199.7 L1054.0,200.7 L1053.0,197.4 L1052.0,198.4 L1051.0,198.3 L1050.0,197.5 L1049.0,199.8 L1048.0,199.7 L1047.0,200.6 L1046.0,200.3 L1045.0,198.0 L1044.0,199.8 L1043.0,198.0 L1042.0,198.7 L1041.0,198.5 L1040.0,197.3 L1039.0,197.9 L1038.0,196.3 L1037.0,199.3 L1036.0,199.0 L1035.0,197.3 L1034.0,199.5 L1033.0,198.9 L1032.0,197.9 L1031.0,198.8 L1030.0,199.3 L1029.0,200.1 L1028.0,198.1 L1027.0,199.1 L1026.0,199.3 L1025.0,198.5 L1024.0,197.6 L1023.0,196.4 L1022.0,197.9 L1021.0,199.1 L1020.0,199.7 L1019.0,197.5 L1018.0,199.5 L1017.0,199.5 L1016.0,199.5 L1015.0,198.7 L1014.0,198.1 L1013.0,198.8 L1012.0,198.1 L1011.0,197.8 L1010.0,196.3 L1009.0,196.9 L1008.0,196.6 L1007.0,197.6 L1006.0,198.2 L1005.0,196.3 L1004.0,199.4 L1003.0,198.9 L1002.0,199.2 L1001.0,197.5 L1000.0,197.8 L999.0,197.1 L998.0,197.9 L997.0,198.7 L996.0,199.1 L995.0,199.9 L994.0,199.6 L993.0,199.4 L992.0,197.6 L991.0,199.5 L990.0,199.5 L989.0,199.9 L988.0,199.5 L987.0,199.3 L986.0,199.8 L985.0,200.3 L984.0,200.8 L983.0,200.3 L982.0,199.2 L981.0,196.6 L980.0,196.7 L979.0,198.7 L978.0,199.7 L977.0,200.9 L976.0,200.9 L975.0,200.9 L974.0,200.1 L973.0,200.1 L972.0,198.8 L971.0,198.7 L970.0,198.4 L969.0,198.3 L968.0,198.3 L967.0,198.3 L966.0,199.1 L965.0,199.3 L964.0,196.5 L963.0,198.5 L962.0,198.3 L961.0,199.1 L960.0,198.0 L959.0,199.5 L958.0,197.3 L957.0,197.8 L956.0,196.1 L955.0,198.9 L954.0,199.8 L953.0,199.9 L952.0,200.8 L951.0,198.4 L950.0,199.5 L949.0,198.9 L948.0,197.1 L947.0,199.2 L946.0,198.1 L945.0,196.0 L944.0,197.4 L943.0,198.2 L942.0,198.2 L941.0,197.5 L940.0,198.9 L939.0,199.8 L938.0,198.5 L937.0,196.2 L936.0,197.8 L935.0,197.4 L934.0,200.1 L933.0,200.1 L932.0,197.8 L931.0,199.2 L930.0,198.6 L929.0,198.3 L928.0,198.2 L927.0,198.0 L926.0,197.8 L925.0,198.1 L924.0,196.7 L923.0,198.2 L922.0,197.4 L921.0,197.7 L920.0,198.6 L919.0,199.4 L918.0,198.9 L917.0,199.7 L916.0,199.3 L915.0,198.7 L914.0,199.5 L913.0,200.3 L912.0,198.8 L911.0,199.9 L910.0,200.0 L909.0,199.6 L908.0,197.0 L907.0,197.7 L906.0,198.7 L905.0,199.5 L904.0,198.2 L903.0,199.2 L902.0,199.1 L901.0,197.2 L900.0,199.2 L899.0,199.0 L898.0,196.4 L897.0,198.1 L896.0,197.3 L895.0,197.7 L894.0,198.9 L893.0,199.8 L892.0,199.7 L891.0,197.1 L890.0,199.8 L889.0,200.0 L888.0,200.5 L887.0,200.1 L886.0,198.7 L885.0,198.2 L884.0,197.5 L883.0,196.9 L882.0,198.1 L881.0,198.1 L880.0,199.1 L879.0,199.1 L878.0,197.2 L877.0,198.9 L876.0,199.2 L875.0,199.9 L874.0,200.6 L873.0,197.6 L872.0,198.7 L871.0,197.2 L870.0,197.8 L869.0,195.8 L868.0,198.8 L867.0,197.8 L866.0,197.0 L865.0,198.7 L864.0,199.7 L863.0,200.2 L862.0,200.2 L861.0,197.4 L860.0,199.2 L859.0,197.7 L858.0,197.7 L857.0,198.2 L856.0,200.5 L855.0,198.9 L854.0,200.1 L853.0,197.0 L852.0,197.7 L851.0,199.0 L850.0,196.3 L849.0,198.9 L848.0,198.0 L847.0,199.5 L846.0,197.9 L845.0,198.9 L844.0,199.2 L843.0,197.9 L842.0,199.0 L841.0,199.8 L840.0,200.5 L839.0,200.1 L838.0,198.0 L837.0,199.1 L836.0,199.0 L835.0,199.0 L834.0,195.9 L833.0,197.1 L832.0,197.3 L831.0,198.4 L830.0,199.2 L829.0,197.5 L828.0,198.0 L827.0,198.3 L826.0,199.2 L825.0,200.0 L824.0,199.4 L823.0,199.7 L822.0,199.6 L821.0,199.4 L820.0,199.9 L819.0,198.3 L818.0,199.8 L817.0,199.9 L816.0,197.1 L815.0,198.5 L814.0,198.3 L813.0,197.7 L812.0,199.0 L811.0,199.1 L810.0,198.2 L809.0,199.0 L808.0,198.4 L807.0,198.8 L806.0,198.8 L805.0,196.6 L804.0,196.0 L803.0,197.0 L802.0,197.2 L801.0,198.5 L800.0,199.4 L799.0,199.8 L798.0,199.2 L797.0,197.7 L796.0,199.2 L795.0,198.7 L794.0,198.6 L793.0,198.1 L792.0,199.1 L791.0,199.3 L790.0,199.2 L789.0,197.4 L788.0,199.4 L787.0,199.3 L786.0,199.4 L785.0,200.9 L784.0,200.9 L783.0,200.9 L782.0,199.7 L781.0,199.9 L780.0,199.5 L779.0,199.8 L778.0,199.4 L777.0,200.2 L776.0,200.7 L775.0,200.9 L774.0,200.9 L773.0,198.2 L772.0,199.8 L771.0,198.6 L770.0,199.6 L769.0,199.4 L768.0,199.3 L767.0,199.0 L766.0,199.5 L765.0,199.3 L764.0,198.5 L763.0,198.1 L762.0,197.9 L761.0,199.0 L760.0,198.7 L759.0,198.9 L758.0,197.8 L757.0,197.4 L756.0,197.3 L755.0,198.4 L754.0,199.3 L753.0,199.4 L752.0,199.2 L751.0,196.9 L750.0,198.0 L749.0,197.3 L748.0,196.7 L747.0,199.3 L746.0,199.6 L745.0,198.7 L744.0,197.3 L743.0,196.5 L742.0,198.9 L741.0,198.3 L740.0,197.7 L739.0,197.2 L738.0,197.9 L737.0,199.3 L736.0,199.6 L735.0,199.5 L734.0,200.2 L733.0,198.0 L732.0,200.1 L731.0,199.3 L730.0,199.2 L729.0,198.6 L728.0,198.6 L727.0,198.6 L726.0,198.4 L725.0,197.9 L724.0,198.5 L723.0,197.7 L722.0,198.6 L721.0,198.2 L720.0,198.1 L719.0,198.8 L718.0,198.1 L717.0,198.5 L716.0,199.0 L715.0,199.7 L714.0,196.3 L713.0,198.2 L712.0,198.4 L711.0,198.8 L710.0,199.4 L709.0,198.8 L708.0,198.7 L707.0,198.5 L706.0,199.0 L705.0,199.4 L704.0,198.7 L703.0,198.7 L702.0,198.5 L701.0,198.8 L700.0,198.8 L699.0,197.6 L698.0,198.9 L697.0,199.3 L696.0,196.8 L695.0,197.3 L694.0,199.3 L693.0,198.8 L692.0,198.5 L691.0,200.0 L690.0,198.7 L689.0,199.1 L688.0,198.0 L687.0,196.4 L686.0,198.9 L685.0,197.8 L684.0,198.6 L683.0,198.7 L682.0,198.3 L681.0,196.7 L680.0,198.7 L679.0,198.0 L678.0,197.5 L677.0,199.1 L676.0,200.0 L675.0,197.5 L674.0,199.4 L673.0,198.4 L672.0,198.1 L671.0,199.0 L670.0,197.1 L669.0,198.7 L668.0,197.4 L667.0,199.2 L666.0,199.2 L665.0,199.7 L664.0,197.0 L663.0,199.7 L662.0,198.9 L661.0,198.5 L660.0,197.3 L659.0,199.5 L658.0,198.5 L657.0,197.8 L656.0,199.9 L655.0,200.0 L654.0,198.7 L653.0,198.3 L652.0,199.6 L651.0,199.4 L650.0,200.6 L649.0,199.1 L648.0,198.9 L647.0,199.9 L646.0,199.2 L645.0,199.0 L644.0,200.3 L643.0,200.9 L642.0,200.8 L641.0,200.9 L640.0,200.0 L639.0,197.5 L638.0,198.8 L637.0,197.1 L636.0,199.9 L635.0,199.9 L634.0,197.8 L633.0,199.2 L632.0,199.4 L631.0,200.2 L630.0,197.3 L629.0,198.1 L628.0,197.3 L627.0,197.9 L626.0,198.4 L625.0,199.4 L624.0,199.6 L623.0,199.9 L622.0,200.3 L621.0,200.9 L620.0,200.9 L619.0,200.1 L618.0,198.9 L617.0,199.5 L616.0,196.6 L615.0,199.2 L614.0,199.8 L613.0,199.3 L612.0,199.2 L611.0,199.0 L610.0,200.2 L609.0,199.9 L608.0,198.8 L607.0,197.6 L606.0,197.2 L605.0,198.6 L604.0,198.5 L603.0,199.7 L602.0,199.5 L601.0,196.7 L600.0,198.2 L599.0,196.9 L598.0,199.6 L597.0,199.5 L596.0,199.5 L595.0,199.3 L594.0,198.8 L593.0,198.9 L592.0,199.7 L591.0,198.2 L590.0,199.9 L589.0,198.8 L588.0,199.1 L587.0,196.5 L586.0,196.9 L585.0,199.4 L584.0,199.2 L583.0,199.4 L582.0,198.6 L581.0,198.8 L580.0,198.8 L579.0,199.5 L578.0,199.3 L577.0,198.7 L576.0,196.6 L575.0,198.9 L574.0,200.9 L573.0,199.1 L572.0,200.9 L571.0,199.2 L570.0,199.9 L569.0,199.9 L568.0,200.1 L567.0,200.0 L566.0,199.2 L565.0,200.2 L564.0,199.2 L563.0,198.7 L562.0,199.3 L561.0,198.4 L560.0,196.7 L559.0,197.3 L558.0,198.8 L557.0,200.3 L556.0,200.5 L555.0,200.3 L554.0,199.1 L553.0,199.6 L552.0,200.2 L551.0,200.3 L550.0,199.8 L549.0,199.7 L548.0,200.0 L547.0,200.0 L546.0,199.4 L545.0,198.6 L544.0,196.1 L543.0,198.7 L542.0,196.7 L541.0,199.8 L540.0,199.2 L539.0,199.3 L538.0,198.0 L537.0,200.1 L536.0,197.6 L535.0,200.4 L534.0,200.3 L533.0,200.8 L532.0,199.3 L531.0,200.2 L530.0,199.5 L529.0,199.8 L528.0,199.3 L527.0,199.0 L526.0,199.0 L525.0,198.8 L524.0,198.6 L523.0,200.0 L522.0,197.6 L521.0,197.4 L520.0,199.6 L519.0,197.8 L518.0,198.9 L517.0,197.1 L516.0,199.5 L515.0,198.4 L514.0,198.6 L513.0,198.6 L512.0,198.0 L511.0,197.3 L510.0,198.5 L509.0,198.4 L508.0,198.7 L507.0,199.0 L506.0,199.1 L505.0,198.3 L504.0,197.8 L503.0,198.7 L502.0,199.1 L501.0,198.5 L500.0,196.9 L499.0,198.3 L498.0,198.2 L497.0,197.0 L496.0,199.6 L495.0,199.6 L494.0,199.7 L493.0,199.8 L492.0,199.7 L491.0,197.9 L490.0,198.8 L489.0,198.9 L488.0,198.8 L487.0,198.9 L486.0,199.1 L485.0,197.3 L484.0,197.6 L483.0,199.1 L482.0,199.0 L481.0,199.4 L480.0,198.7 L479.0,198.3 L478.0,198.2 L477.0,197.6 L476.0,198.1 L475.0,198.0 L474.0,197.4 L473.0,197.3 L472.0,196.8 L471.0,199.2 L470.0,198.9 L469.0,196.0 L468.0,200.0 L467.0,200.9 L466.0,200.9 L465.0,200.9 L464.0,200.9 L463.0,198.7 L462.0,196.6 L461.0,199.1 L460.0,197.6 L459.0,199.7 L458.0,196.8 L457.0,197.5 L456.0,198.5 L455.0,197.0 L454.0,198.2 L453.0,200.9 L452.0,200.8 L451.0,200.2 L450.0,199.7 L449.0,200.6 L448.0,198.9 L447.0,197.3 L446.0,198.9 L445.0,198.3 L444.0,199.2 L443.0,199.4 L442.0,198.6 L441.0,197.6 L440.0,197.6 L439.0,199.0 L438.0,199.4 L437.0,200.2 L436.0,199.7 L435.0,197.6 L434.0,200.0 L433.0,199.9 L432.0,199.0 L431.0,198.0 L430.0,198.8 L429.0,200.2 L428.0,200.4 L427.0,199.6 L426.0,199.2 L425.0,198.7 L424.0,198.4 L423.0,198.1 L422.0,198.3 L421.0,197.9 L420.0,198.5 L419.0,197.5 L418.0,200.3 L417.0,200.1 L416.0,197.4 L415.0,198.2 L414.0,198.5 L413.0,198.7 L412.0,197.3 L411.0,197.6 L410.0,198.3 L409.0,198.9 L408.0,198.9 L407.0,198.2 L406.0,198.0 L405.0,198.4 L404.0,199.0 L403.0,198.0 L402.0,198.6 L401.0,198.5 L400.0,199.3 L399.0,199.2 L398.0,198.9 L397.0,198.5 L396.0,198.5 L395.0,199.1 L394.0,198.8 L393.0,199.3 L392.0,199.2 L391.0,197.6 L390.0,198.8 L389.0,198.4 L388.0,198.4 L387.0,198.4 L386.0,197.8 L385.0,198.3 L384.0,200.2 L383.0,199.7 L382.0,197.0 L381.0,199.2 L380.0,199.3 L379.0,199.0 L378.0,198.3 L377.0,198.2 L376.0,199.2 L375.0,196.9Z" fill="#3b9e6e"/>
<rect x="376" y="202.5" width="1088" height="395" fill="#2e3030"/>
<rect x="376" y="242.8" width="1088" height="314.4" fill="#242424"/>
<rect x="376" y="597.5" width="1088" height="395" fill="#2e3030"/>
<rect x="376" y="637.8" width="1088" height="314.4" fill="#242424"/>
<rect x="433.6" y="202" width="1" height="790" fill="#343535" opacity="0.7"/>
<rect x="492.8" y="202" width="1" height="790" fill="#343535" opacity="0.7"/>
<rect x="552.1" y="202" width="1" height="790" fill="#343535" opacity="0.7"/>
<rect x="611.4" y="202" width="1" height="790" fill="#343535" opacity="0.7"/>
<rect x="670.6" y="202" width="1" height="790" fill="#343535" opacity="0.7"/>
<rect x="729.9" y="202" width="1" height="790" fill="#343535" opacity="0.7"/>
<rect x="789.2" y="202" width="1" height="790" fill="#343535" opacity="0.7"/>
<rect x="848.4" y="202" width="1" height="790" fill="#343535" opacity="0.7"/>
<rect x="907.7" y="202" width="1" height="790" fill="#343535" opacity="0.7"/>
<rect x="967.0" y="202" width="1" height="790" fill="#343535" opacity="0.7"/>
<rect x="1026.2" y="202" width="1" height="790" fill="#343535" opacity="0.7"/>
<rect x="1085.5" y="202" width="1" height="790" fill="#343535" opacity="0.7"/>
<rect x="1144.8" y="202" width="1" height="790" fill="#343535" opacity="0.7"/>
<rect x="1204.0" y="202" width="1" height="790" fill="#343535" opacity="0.7"/>
<rect x="1263.3" y="202" width="1" height="790" fill="#343535" opacity="0.7"/>
<rect x="1322.6" y="202" width="1" height="790" fill="#343535" opacity="0.7"/>
<rect x="1381.8" y="202" width="1" height="790" fill="#343535" opacity="0.7"/>
<rect x="1441.1" y="202" width="1" height="790" fill="#343535" opacity="0.7"/>
<rect x="376" y="517.9" width="1088" height="1" fill="#2d2d2d"/>
<rect x="376" y="478.6" width="1088" height="1" fill="#2d2d2d"/>
<rect x="376" y="439.3" width="1088" height="1" fill="#2d2d2d"/>
<rect x="376" y="400.0" width="1088" height="1" fill="#2d2d2d"/>
<rect x="376" y="360.7" width="1088" height="1" fill="#2d2d2d"/>
<rect x="376" y="321.4" width="1088" height="1" fill="#2d2d2d"/>
<rect x="376" y="282.1" width="1088" height="1" fill="#2d2d2d"/>
<rect x="376" y="912.9" width="1088" height="1" fill="#2d2d2d"/>
<rect x="376" y="873.6" width="1088" height="1" fill="#2d2d2d"/>
<rect x="376" y="834.3" width="1088" height="1" fill="#2d2d2d"/>
<rect x="376" y="795.0" width="1088" height="1" fill="#2d2d2d"/>
<rect x="376" y="755.7" width="1088" height="1" fill="#2d2d2d"/>
<rect x="376" y="716.4" width="1088" height="1" fill="#2d2d2d"/>
<rect x="376" y="677.1" width="1088" height="1" fill="#2d2d2d"/>
<path d="M375.0,300.3 L375.6,300.3 L376.0,299.5 L376.6,299.5 L377.0,314.3 L377.6,314.3 L378.0,348.0 L378.6,348.0 L379.0,354.9 L379.6,354.9 L380.0,328.0 L380.6,328.0 L381.0,313.1 L381.6,313.1 L382.0,354.1 L382.6,354.1 L383.0,312.1 L383.6,312.1 L384.0,330.1 L384.6,330.1 L385.0,265.4 L385.6,265.4 L386.0,296.8 L386.6,296.8 L387.0,302.9 L387.6,302.9 L388.0,305.3 L388.6,305.3 L389.0,338.5 L389.6,338.5 L390.0,297.6 L390.6,297.6 L391.0,307.8 L391.6,307.8 L392.0,322.7 L392.6,322.7 L393.0,327.7 L393.6,327.7 L394.0,325.9 L394.6,325.9 L395.0,282.9 L395.6,282.9 L396.0,321.5 L396.6,321.5 L397.0,305.5 L397.6,305.5 L398.0,336.6 L398.6,336.6 L399.0,345.3 L399.6,345.3 L400.0,303.4 L400.6,303.4 L401.0,278.8 L401.6,278.8 L402.0,281.5 L402.6,281.5 L403.0,331.3 L403.6,331.3 L404.0,297.7 L404.6,297.7 L405.0,332.9 L405.6,332.9 L406.0,350.4 L406.6,350.4 L407.0,292.4 L407.6,292.4 L408.0,291.5 L408.6,291.5 L409.0,310.7 L409.6,310.7 L410.0,354.7 L410.6,354.7 L411.0,301.6 L411.6,301.6 L412.0,322.3 L412.6,322.3 L413.0,300.7 L413.6,300.7 L414.0,307.6 L414.6,307.6 L415.0,298.1 L415.6,298.1 L416.0,289.7 L416.6,289.7 L417.0,298.1 L417.6,298.1 L418.0,332.3 L418.6,332.3 L419.0,294.5 L419.6,294.5 L420.0,301.8 L420.6,301.8 L421.0,274.7 L421.6,274.7 L422.0,271.3 L422.6,271.3 L423.0,271.1 L423.6,271.1 L424.0,300.7 L424.6,300.7 L425.0,288.0 L425.6,288.0 L426.0,323.5 L426.6,323.5 L427.0,290.1 L427.6,290.1 L428.0,321.2 L428.6,321.2 L429.0,345.8 L429.6,345.8 L430.0,292.0 L430.6,292.0 L431.0,303.9 L431.6,303.9 L432.0,334.6 L432.6,334.6 L433.0,293.4 L433.6,293.4 L434.0,285.6 L434.6,285.6 L435.0,330.9 L435.6,330.9 L436.0,299.2 L436.6,299.2 L437.0,273.9 L437.6,273.9 L438.0,296.2 L438.6,296.2 L439.0,347.8 L439.6,347.8 L440.0,320.1 L440.6,320.1 L441.0,296.6 L441.6,296.6 L442.0,282.1 L442.6,282.1 L443.0,330.4 L443.6,330.4 L444.0,295.1 L444.6,295.1 L445.0,314.0 L445.6,314.0 L446.0,303.1 L446.6,303.1 L447.0,286.4 L447.6,286.4 L448.0,309.8 L448.6,309.8 L449.0,298.8 L449.6,298.8 L450.0,286.1 L450.6,286.1 L451.0,287.9 L451.6,287.9 L452.0,318.2 L452.6,318.2 L453.0,341.3 L453.6,341.3 L454.0,301.3 L454.6,301.3 L455.0,295.9 L455.6,295.9 L456.0,341.1 L456.6,341.1 L457.0,336.0 L457.6,336.0 L458.0,287.9 L458.6,287.9 L459.0,297.2 L459.6,297.2 L460.0,310.1 L460.6,310.1 L461.0,314.3 L461.6,314.3 L462.0,334.1 L462.6,334.1 L463.0,305.5 L463.6,305.5 L464.0,353.1 L464.6,353.1 L465.0,340.2 L465.6,340.2 L466.0,305.6 L466.6,305.6 L467.0,324.7 L467.6,324.7 L468.0,297.4 L468.6,297.4 L469.0,307.2 L469.6,307.2 L470.0,307.1 L470.6,307.1 L471.0,333.1 L471.6,333.1 L472.0,281.6 L472.6,281.6 L473.0,279.2 L473.6,279.2 L474.0,287.8 L474.6,287.8 L475.0,328.7 L475.6,328.7 L476.0,295.1 L476.6,295.1 L477.0,313.1 L477.6,313.1 L478.0,296.2 L478.6,296.2 L479.0,292.6 L479.6,292.6 L480.0,350.0 L480.6,350.0 L481.0,320.0 L481.6,320.0 L482.0,287.7 L482.6,287.7 L483.0,333.0 L483.6,333.0 L484.0,270.4 L484.6,270.4 L485.0,302.4 L485.6,302.4 L486.0,291.9 L486.6,291.9 L487.0,332.4 L487.6,332.4 L488.0,314.1 L488.6,314.1 L489.0,299.2 L489.6,299.2 L490.0,335.1 L490.6,335.1 L491.0,315.2 L491.6,315.2 L492.0,349.5 L492.6,349.5 L493.0,290.2 L493.6,290.2 L494.0,304.4 L494.6,304.4 L495.0,313.9 L495.6,313.9 L496.0,333.3 L496.6,333.3 L497.0,304.6 L497.6,304.6 L498.0,286.8 L498.6,286.8 L499.0,287.5 L499.6,287.5 L500.0,287.6 L500.6,287.6 L501.0,292.7 L501.6,292.7 L502.0,282.9 L502.6,282.9 L503.0,284.3 L503.6,284.3 L504.0,278.5 L504.6,278.5 L505.0,281.7 L505.6,281.7 L506.0,298.1 L506.6,298.1 L507.0,336.1 L507.6,336.1 L508.0,291.9 L508.6,291.9 L509.0,286.7 L509.6,286.7 L510.0,285.2 L510.6,285.2 L511.0,337.7 L511.6,337.7 L512.0,341.7 L512.6,341.7 L513.0,296.3 L513.6,296.3 L514.0,348.8 L514.6,348.8 L515.0,333.4 L515.6,333.4 L516.0,307.6 L516.6,307.6 L517.0,301.2 L517.6,301.2 L518.0,284.5 L518.6,284.5 L519.0,337.4 L519.6,337.4 L520.0,339.4 L520.6,339.4 L521.0,319.8 L521.6,319.8 L522.0,319.3 L522.6,319.3 L523.0,290.6 L523.6,290.6 L524.0,324.1 L524.6,324.1 L525.0,297.5 L525.6,297.5 L526.0,299.0 L526.6,299.0 L527.0,341.8 L527.6,341.8 L528.0,312.5 L528.6,312.5 L529.0,328.0 L529.6,328.0 L530.0,354.5 L530.6,354.5 L531.0,307.5 L531.6,307.5 L532.0,334.8 L532.6,334.8 L533.0,308.5 L533.6,308.5 L534.0,320.8 L534.6,320.8 L535.0,298.1 L535.6,298.1 L536.0,345.0 L536.6,345.0 L537.0,345.1 L537.6,345.1 L538.0,286.6 L538.6,286.6 L539.0,299.1 L539.6,299.1 L540.0,336.2 L540.6,336.2 L541.0,311.0 L541.6,311.0 L542.0,302.6 L542.6,302.6 L543.0,289.4 L543.6,289.4 L544.0,332.2 L544.6,332.2 L545.0,324.9 L545.6,324.9 L546.0,302.3 L546.6,302.3 L547.0,279.6 L547.6,279.6 L548.0,275.0 L548.6,275.0 L549.0,282.8 L549.6,282.8 L550.0,282.9 L550.6,282.9 L551.0,319.1 L551.6,319.1 L552.0,335.8 L552.6,335.8 L553.0,299.3 L553.6,299.3 L554.0,276.1 L554.6,276.1 L555.0,259.7 L555.6,259.7 L556.0,290.8 L556.6,290.8 L557.0,278.4 L557.6,278.4 L558.0,285.7 L558.6,285.7 L559.0,330.2 L559.6,330.2 L560.0,281.6 L560.6,281.6 L561.0,280.3 L561.6,280.3 L562.0,288.3 L562.6,288.3 L563.0,279.4 L563.6,279.4 L564.0,284.0 L564.6,284.0 L565.0,307.6 L565.6,307.6 L566.0,288.9 L566.6,288.9 L567.0,292.7 L567.6,292.7 L568.0,303.6 L568.6,303.6 L569.0,342.9 L569.6,342.9 L570.0,318.2 L570.6,318.2 L571.0,319.2 L571.6,319.2 L572.0,316.8 L572.6,316.8 L573.0,286.0 L573.6,286.0 L574.0,336.7 L574.6,336.7 L575.0,323.3 L575.6,323.3 L576.0,281.5 L576.6,281.5 L577.0,289.8 L577.6,289.8 L578.0,329.6 L578.6,329.6 L579.0,343.5 L579.6,343.5 L580.0,307.6 L580.6,307.6 L581.0,298.6 L581.6,298.6 L582.0,340.3 L582.6,340.3 L583.0,285.2 L583.6,285.2 L584.0,285.8 L584.6,285.8 L585.0,290.9 L585.6,290.9 L586.0,314.8 L586.6,314.8 L587.0,328.2 L587.6,328.2 L588.0,294.4 L588.6,294.4 L589.0,296.8 L589.6,296.8 L590.0,295.7 L590.6,295.7 L591.0,319.3 L591.6,319.3 L592.0,350.2 L592.6,350.2 L593.0,301.0 L593.6,301.0 L594.0,348.7 L594.6,348.7 L595.0,340.4 L595.6,340.4 L596.0,328.7 L596.6,328.7 L597.0,319.8 L597.6,319.8 L598.0,285.1 L598.6,285.1 L599.0,292.0 L599.6,292.0 L600.0,314.0 L600.6,314.0 L601.0,304.4 L601.6,304.4 L602.0,342.1 L602.6,342.1 L603.0,296.1 L603.6,296.1 L604.0,333.4 L604.6,333.4 L605.0,344.1 L605.6,344.1 L606.0,310.4 L606.6,310.4 L607.0,345.5 L607.6,345.5 L608.0,319.7 L608.6,319.7 L609.0,326.4 L609.6,326.4 L610.0,317.4 L610.6,317.4 L611.0,299.0 L611.6,299.0 L612.0,298.2 L612.6,298.2 L613.0,305.0 L613.6,305.0 L614.0,355.6 L614.6,355.6 L615.0,305.8 L615.6,305.8 L616.0,336.1 L616.6,336.1 L617.0,276.8 L617.6,276.8 L618.0,311.4 L618.6,311.4 L619.0,345.9 L619.6,345.9 L620.0,354.5 L620.6,354.5 L621.0,345.0 L621.6,345.0 L622.0,287.8 L622.6,287.8 L623.0,337.8 L623.6,337.8 L624.0,317.0 L624.6,317.0 L625.0,342.7 L625.6,342.7 L626.0,307.7 L626.6,307.7 L627.0,282.4 L627.6,282.4 L628.0,288.2 L628.6,288.2 L629.0,300.7 L629.6,300.7 L630.0,342.2 L630.6,342.2 L631.0,299.8 L631.6,299.8 L632.0,291.3 L632.6,291.3 L633.0,296.4 L633.6,296.4 L634.0,289.2 L634.6,289.2 L635.0,305.1 L635.6,305.1 L636.0,337.8 L636.6,337.8 L637.0,352.2 L637.6,352.2 L638.0,326.9 L638.6,326.9 L639.0,279.6 L639.6,279.6 L640.0,272.2 L640.6,272.2 L641.0,330.9 L641.6,330.9 L642.0,279.1 L642.6,279.1 L643.0,278.8 L643.6,278.8 L644.0,278.0 L644.6,278.0 L645.0,285.0 L645.6,285.0 L646.0,328.7 L646.6,328.7 L647.0,281.5 L647.6,281.5 L648.0,278.8 L648.6,278.8 L649.0,287.7 L649.6,287.7 L650.0,290.3 L650.6,290.3 L651.0,283.3 L651.6,283.3 L652.0,306.1 L652.6,306.1 L653.0,287.8 L653.6,287.8 L654.0,296.9 L654.6,296.9 L655.0,289.1 L655.6,289.1 L656.0,298.2 L656.6,298.2 L657.0,345.5 L657.6,345.5 L658.0,345.0 L658.6,345.0 L659.0,290.4 L659.6,290.4 L660.0,281.3 L660.6,281.3 L661.0,308.8 L661.6,308.8 L662.0,318.6 L662.6,318.6 L663.0,294.1 L663.6,294.1 L664.0,303.6 L664.6,303.6 L665.0,335.5 L665.6,335.5 L666.0,322.0 L666.6,322.0 L667.0,288.2 L667.6,288.2 L668.0,301.7 L668.6,301.7 L669.0,288.5 L669.6,288.5 L670.0,319.1 L670.6,319.1 L671.0,286.9 L671.6,286.9 L672.0,299.2 L672.6,299.2 L673.0,329.3 L673.6,329.3 L674.0,308.2 L674.6,308.2 L675.0,303.4 L675.6,303.4 L676.0,308.7 L676.6,308.7 L677.0,306.6 L677.6,306.6 L678.0,304.8 L678.6,304.8 L679.0,322.0 L679.6,322.0 L680.0,313.0 L680.6,313.0 L681.0,305.3 L681.6,305.3 L682.0,336.5 L682.6,336.5 L683.0,337.9 L683.6,337.9 L684.0,332.0 L684.6,332.0 L685.0,281.7 L685.6,281.7 L686.0,339.4 L686.6,339.4 L687.0,339.5 L687.6,339.5 L688.0,338.8 L688.6,338.8 L689.0,292.6 L689.6,292.6 L690.0,282.0 L690.6,282.0 L691.0,316.8 L691.6,316.8 L692.0,284.9 L692.6,284.9 L693.0,285.0 L693.6,285.0 L694.0,343.1 L694.6,343.1 L695.0,339.2 L695.6,339.2 L696.0,301.2 L696.6,301.2 L697.0,308.9 L697.6,308.9 L698.0,330.6 L698.6,330.6 L699.0,309.6 L699.6,309.6 L700.0,335.9 L700.6,335.9 L701.0,306.6 L701.6,306.6 L702.0,301.5 L702.6,301.5 L703.0,281.7 L703.6,281.7 L704.0,279.8 L704.6,279.8 L705.0,284.1 L705.6,284.1 L706.0,346.0 L706.6,346.0 L707.0,341.1 L707.6,341.1 L708.0,299.0 L708.6,299.0 L709.0,294.5 L709.6,294.5 L710.0,301.1 L710.6,301.1 L711.0,344.7 L711.6,344.7 L712.0,339.1 L712.6,339.1 L713.0,345.3 L713.6,345.3 L714.0,328.7 L714.6,328.7 L715.0,301.6 L715.6,301.6 L716.0,341.5 L716.6,341.5 L717.0,302.8 L717.6,302.8 L718.0,344.3 L718.6,344.3 L719.0,296.9 L719.6,296.9 L720.0,325.3 L720.6,325.3 L721.0,288.6 L721.6,288.6 L722.0,341.2 L722.6,341.2 L723.0,314.3 L723.6,314.3 L724.0,319.8 L724.6,319.8 L725.0,312.8 L725.6,312.8 L726.0,344.8 L726.6,344.8 L727.0,290.7 L727.6,290.7 L728.0,273.1 L728.6,273.1 L729.0,313.4 L729.6,313.4 L730.0,285.8 L730.6,285.8 L731.0,314.6 L731.6,314.6 L732.0,313.3 L732.6,313.3 L733.0,286.1 L733.6,286.1 L734.0,340.6 L734.6,340.6 L735.0,341.4 L735.6,341.4 L736.0,342.3 L736.6,342.3 L737.0,323.9 L737.6,323.9 L738.0,333.7 L738.6,333.7 L739.0,333.2 L739.6,333.2 L740.0,301.4 L740.6,301.4 L741.0,323.9 L741.6,323.9 L742.0,286.4 L742.6,286.4 L743.0,299.6 L743.6,299.6 L744.0,342.3 L744.6,342.3 L745.0,331.2 L745.6,331.2 L746.0,287.4 L746.6,287.4 L747.0,304.7 L747.6,304.7 L748.0,287.0 L748.6,287.0 L749.0,275.8 L749.6,275.8 L750.0,322.4 L750.6,322.4 L751.0,272.6 L751.6,272.6 L752.0,274.9 L752.6,274.9 L753.0,319.9 L753.6,319.9 L754.0,290.2 L754.6,290.2 L755.0,291.4 L755.6,291.4 L756.0,287.2 L756.6,287.2 L757.0,337.4 L757.6,337.4 L758.0,284.6 L758.6,284.6 L759.0,312.9 L759.6,312.9 L760.0,315.3 L760.6,315.3 L761.0,341.5 L761.6,341.5 L762.0,321.2 L762.6,321.2 L763.0,303.7 L763.6,303.7 L764.0,333.8 L764.6,333.8 L765.0,303.2 L765.6,303.2 L766.0,346.6 L766.6,346.6 L767.0,292.8 L767.6,292.8 L768.0,299.7 L768.6,299.7 L769.0,300.2 L769.6,300.2 L770.0,328.9 L770.6,328.9 L771.0,302.6 L771.6,302.6 L772.0,347.4 L772.6,347.4 L773.0,284.2 L773.6,284.2 L774.0,351.3 L774.6,351.3 L775.0,302.2 L775.6,302.2 L776.0,297.5 L776.6,297.5 L777.0,308.4 L777.6,308.4 L778.0,292.3 L778.6,292.3 L779.0,320.5 L779.6,320.5 L780.0,316.1 L780.6,316.1 L781.0,294.7 L781.6,294.7 L782.0,277.4 L782.6,277.4 L783.0,280.1 L783.6,280.1 L784.0,319.5 L784.6,319.5 L785.0,282.1 L785.6,282.1 L786.0,293.0 L786.6,293.0 L787.0,314.4 L787.6,314.4 L788.0,289.7 L788.6,289.7 L789.0,271.1 L789.6,271.1 L790.0,284.9 L790.6,284.9 L791.0,347.8 L791.6,347.8 L792.0,316.4 L792.6,316.4 L793.0,288.5 L793.6,288.5 L794.0,313.0 L794.6,313.0 L795.0,332.7 L795.6,332.7 L796.0,288.2 L796.6,288.2 L797.0,292.0 L797.6,292.0 L798.0,335.0 L798.6,335.0 L799.0,287.7 L799.6,287.7 L800.0,279.3 L800.6,279.3 L801.0,311.8 L801.6,311.8 L802.0,312.4 L802.6,312.4 L803.0,289.2 L803.6,289.2 L804.0,283.8 L804.6,283.8 L805.0,310.3 L805.6,310.3 L806.0,320.9 L806.6,320.9 L807.0,336.3 L807.6,336.3 L808.0,346.8 L808.6,346.8 L809.0,329.2 L809.6,329.2 L810.0,299.4 L810.6,299.4 L811.0,290.1 L811.6,290.1 L812.0,293.3 L812.6,293.3 L813.0,291.0 L813.6,291.0 L814.0,304.4 L814.6,304.4 L815.0,293.0 L815.6,293.0 L816.0,341.1 L816.6,341.1 L817.0,307.2 L817.6,307.2 L818.0,340.8 L818.6,340.8 L819.0,319.7 L819.6,319.7 L820.0,335.6 L820.6,335.6 L821.0,301.5 L821.6,301.5 L822.0,296.5 L822.6,296.5 L823.0,293.1 L823.6,293.1 L824.0,319.7 L824.6,319.7 L825.0,283.0 L825.6,283.0 L826.0,318.7 L826.6,318.7 L827.0,306.8 L827.6,306.8 L828.0,327.6 L828.6,327.6 L829.0,289.4 L829.6,289.4 L830.0,272.8 L830.6,272.8 L831.0,333.1 L831.6,333.1 L832.0,280.3 L832.6,280.3 L833.0,285.0 L833.6,285.0 L834.0,332.4 L834.6,332.4 L835.0,324.0 L835.6,324.0 L836.0,310.7 L836.6,310.7 L837.0,284.4 L837.6,284.4 L838.0,287.7 L838.6,287.7 L839.0,295.0 L839.6,295.0 L840.0,302.4 L840.6,302.4 L841.0,285.0 L841.6,285.0 L842.0,272.9 L842.6,272.9 L843.0,313.9 L843.6,313.9 L844.0,284.0 L844.6,284.0 L845.0,308.4 L845.6,308.4 L846.0,304.1 L846.6,304.1 L847.0,303.3 L847.6,303.3 L848.0,317.6 L848.6,317.6 L849.0,292.5 L849.6,292.5 L850.0,327.3 L850.6,327.3 L851.0,339.0 L851.6,339.0 L852.0,336.5 L852.6,336.5 L853.0,337.9 L853.6,337.9 L854.0,330.7 L854.6,330.7 L855.0,285.9 L855.6,285.9 L856.0,343.0 L856.6,343.0 L857.0,300.4 L857.6,300.4 L858.0,301.8 L858.6,301.8 L859.0,322.2 L859.6,322.2 L860.0,296.0 L860.6,296.0 L861.0,303.1 L861.6,303.1 L862.0,330.5 L862.6,330.5 L863.0,295.6 L863.6,295.6 L864.0,278.7 L864.6,278.7 L865.0,335.2 L865.6,335.2 L866.0,305.6 L866.6,305.6 L867.0,277.4 L867.6,277.4 L868.0,322.2 L868.6,322.2 L869.0,278.0 L869.6,278.0 L870.0,321.8 L870.6,321.8 L871.0,320.1 L871.6,320.1 L872.0,310.6 L872.6,310.6 L873.0,298.2 L873.6,298.2 L874.0,347.3 L874.6,347.3 L875.0,315.1 L875.6,315.1 L876.0,332.7 L876.6,332.7 L877.0,335.4 L877.6,335.4 L878.0,290.8 L878.6,290.8 L879.0,286.2 L879.6,286.2 L880.0,285.8 L880.6,285.8 L881.0,323.6 L881.6,323.6 L882.0,292.6 L882.6,292.6 L883.0,296.8 L883.6,296.8 L884.0,292.8 L884.6,292.8 L885.0,324.1 L885.6,324.1 L886.0,288.1 L886.6,288.1 L887.0,305.5 L887.6,305.5 L888.0,277.5 L888.6,277.5 L889.0,323.1 L889.6,323.1 L890.0,299.1 L890.6,299.1 L891.0,292.1 L891.6,292.1 L892.0,337.0 L892.6,337.0 L893.0,305.7 L893.6,305.7 L894.0,308.9 L894.6,308.9 L895.0,322.7 L895.6,322.7 L896.0,297.7 L896.6,297.7 L897.0,300.2 L897.6,300.2 L898.0,327.4 L898.6,327.4 L899.0,305.5 L899.6,305.5 L900.0,329.1 L900.6,329.1 L901.0,346.2 L901.6,346.2 L902.0,294.5 L902.6,294.5 L903.0,324.1 L903.6,324.1 L904.0,339.7 L904.6,339.7 L905.0,303.0 L905.6,303.0 L906.0,307.5 L906.6,307.5 L907.0,300.9 L907.6,300.9 L908.0,349.1 L908.6,349.1 L909.0,303.0 L909.6,303.0 L910.0,331.5 L910.6,331.5 L911.0,332.1 L911.6,332.1 L912.0,280.6 L912.6,280.6 L913.0,284.7 L913.6,284.7 L914.0,292.7 L914.6,292.7 L915.0,284.2 L915.6,284.2 L916.0,292.7 L916.6,292.7 L917.0,284.2 L917.6,284.2 L918.0,293.4 L918.6,293.4 L919.0,328.8 L919.6,328.8 L920.0,307.6 L920.6,307.6 L921.0,324.8 L921.6,324.8 L922.0,290.4 L922.6,290.4 L923.0,283.4 L923.6,283.4 L924.0,327.5 L924.6,327.5 L925.0,289.3 L925.6,289.3 L926.0,296.4 L926.6,296.4 L927.0,331.6 L927.6,331.6 L928.0,322.7 L928.6,322.7 L929.0,291.5 L929.6,291.5 L930.0,283.1 L930.6,283.1 L931.0,286.0 L931.6,286.0 L932.0,327.1 L932.6,327.1 L933.0,341.8 L933.6,341.8 L934.0,292.8 L934.6,292.8 L935.0,300.5 L935.6,300.5 L936.0,291.8 L936.6,291.8 L937.0,358.1 L937.6,358.1 L938.0,332.1 L938.6,332.1 L939.0,329.5 L939.6,329.5 L940.0,295.6 L940.6,295.6 L941.0,328.9 L941.6,328.9 L942.0,288.8 L942.6,288.8 L943.0,348.4 L943.6,348.4 L944.0,293.7 L944.6,293.7 L945.0,316.2 L945.6,316.2 L946.0,335.4 L946.6,335.4 L947.0,325.1 L947.6,325.1 L948.0,313.4 L948.6,313.4 L949.0,282.5 L949.6,282.5 L950.0,320.0 L950.6,320.0 L951.0,279.5 L951.6,279.5 L952.0,269.0 L952.6,269.0 L953.0,332.1 L953.6,332.1 L954.0,286.6 L954.6,286.6 L955.0,327.9 L955.6,327.9 L956.0,337.8 L956.6,337.8 L957.0,285.3 L957.6,285.3 L958.0,275.1 L958.6,275.1 L959.0,279.9 L959.6,279.9 L960.0,290.2 L960.6,290.2 L961.0,309.0 L961.6,309.0 L962.0,290.8 L962.6,290.8 L963.0,329.1 L963.6,329.1 L964.0,296.4 L964.6,296.4 L965.0,303.0 L965.6,303.0 L966.0,285.6 L966.6,285.6 L967.0,326.7 L967.6,326.7 L968.0,280.2 L968.6,280.2 L969.0,292.6 L969.6,292.6 L970.0,316.0 L970.6,316.0 L971.0,322.9 L971.6,322.9 L972.0,288.2 L972.6,288.2 L973.0,282.8 L973.6,282.8 L974.0,282.6 L974.6,282.6 L975.0,327.5 L975.6,327.5 L976.0,345.6 L976.6,345.6 L977.0,342.9 L977.6,342.9 L978.0,331.5 L978.6,331.5 L979.0,334.6 L979.6,334.6 L980.0,327.4 L980.6,327.4 L981.0,287.6 L981.6,287.6 L982.0,282.4 L982.6,282.4 L983.0,329.4 L983.6,329.4 L984.0,347.6 L984.6,347.6 L985.0,294.7 L985.6,294.7 L986.0,343.2 L986.6,343.2 L987.0,295.6 L987.6,295.6 L988.0,288.8 L988.6,288.8 L989.0,321.1 L989.6,321.1 L990.0,286.3 L990.6,286.3 L991.0,303.5 L991.6,303.5 L992.0,302.5 L992.6,302.5 L993.0,342.5 L993.6,342.5 L994.0,294.1 L994.6,294.1 L995.0,347.6 L995.6,347.6 L996.0,294.3 L996.6,294.3 L997.0,312.0 L997.6,312.0 L998.0,305.1 L998.6,305.1 L999.0,310.1 L999.6,310.1 L1000.0,337.3 L1000.6,337.3 L1001.0,323.2 L1001.6,323.2 L1002.0,287.4 L1002.6,287.4 L1003.0,292.5 L1003.6,292.5 L1004.0,295.2 L1004.6,295.2 L1005.0,326.8 L1005.6,326.8 L1006.0,284.7 L1006.6,284.7 L1007.0,327.0 L1007.6,327.0 L1008.0,333.2 L1008.6,333.2 L1009.0,291.3 L1009.6,291.3 L1010.0,347.4 L1010.6,347.4 L1011.0,297.6 L1011.6,297.6 L1012.0,330.2 L1012.6,330.2 L1013.0,346.9 L1013.6,346.9 L1014.0,300.5 L1014.6,300.5 L1015.0,320.3 L1015.6,320.3 L1016.0,336.9 L1016.6,336.9 L1017.0,307.8 L1017.6,307.8 L1018.0,333.7 L1018.6,333.7 L1019.0,325.0 L1019.6,325.0 L1020.0,280.3 L1020.6,280.3 L1021.0,321.7 L1021.6,321.7 L1022.0,295.5 L1022.6,295.5 L1023.0,302.0 L1023.6,302.0 L1024.0,305.4 L1024.6,305.4 L1025.0,340.1 L1025.6,340.1 L1026.0,332.1 L1026.6,332.1 L1027.0,299.7 L1027.6,299.7 L1028.0,319.4 L1028.6,319.4 L1029.0,298.0 L1029.6,298.0 L1030.0,346.7 L1030.6,346.7 L1031.0,325.6 L1031.6,325.6 L1032.0,285.4 L1032.6,285.4 L1033.0,275.5 L1033.6,275.5 L1034.0,285.4 L1034.6,285.4 L1035.0,293.8 L1035.6,293.8 L1036.0,325.5 L1036.6,325.5 L1037.0,339.6 L1037.6,339.6 L1038.0,346.9 L1038.6,346.9 L1039.0,320.3 L1039.6,320.3 L1040.0,314.6 L1040.6,314.6 L1041.0,293.6 L1041.6,293.6 L1042.0,283.3 L1042.6,283.3 L1043.0,317.3 L1043.6,317.3 L1044.0,300.8 L1044.6,300.8 L1045.0,322.7 L1045.6,322.7 L1046.0,347.9 L1046.6,347.9 L1047.0,295.2 L1047.6,295.2 L1048.0,285.2 L1048.6,285.2 L1049.0,324.0 L1049.6,324.0 L1050.0,326.9 L1050.6,326.9 L1051.0,255.1 L1051.6,255.1 L1052.0,292.0 L1052.6,292.0 L1053.0,268.9 L1053.6,268.9 L1054.0,303.0 L1054.6,303.0 L1055.0,265.2 L1055.6,265.2 L1056.0,327.4 L1056.6,327.4 L1057.0,277.0 L1057.6,277.0 L1058.0,343.5 L1058.6,343.5 L1059.0,322.8 L1059.6,322.8 L1060.0,341.7 L1060.6,341.7 L1061.0,341.8 L1061.6,341.8 L1062.0,330.9 L1062.6,330.9 L1063.0,288.5 L1063.6,288.5 L1064.0,297.9 L1064.6,297.9 L1065.0,328.1 L1065.6,328.1 L1066.0,284.6 L1066.6,284.6 L1067.0,317.8 L1067.6,317.8 L1068.0,331.7 L1068.6,331.7 L1069.0,315.1 L1069.6,315.1 L1070.0,349.1 L1070.6,349.1 L1071.0,286.7 L1071.6,286.7 L1072.0,316.5 L1072.6,316.5 L1073.0,319.3 L1073.6,319.3 L1074.0,298.2 L1074.6,298.2 L1075.0,332.5 L1075.6,332.5 L1076.0,319.1 L1076.6,319.1 L1077.0,335.5 L1077.6,335.5 L1078.0,274.3 L1078.6,274.3 L1079.0,286.5 L1079.6,286.5 L1080.0,323.4 L1080.6,323.4 L1081.0,300.3 L1081.6,300.3 L1082.0,275.9 L1082.6,275.9 L1083.0,336.6 L1083.6,336.6 L1084.0,303.0 L1084.6,303.0 L1085.0,301.5 L1085.6,301.5 L1086.0,344.6 L1086.6,344.6 L1087.0,307.2 L1087.6,307.2 L1088.0,304.5 L1088.6,304.5 L1089.0,295.7 L1089.6,295.7 L1090.0,336.8 L1090.6,336.8 L1091.0,342.3 L1091.6,342.3 L1092.0,320.3 L1092.6,320.3 L1093.0,287.5 L1093.6,287.5 L1094.0,326.7 L1094.6,326.7 L1095.0,299.6 L1095.6,299.6 L1096.0,326.9 L1096.6,326.9 L1097.0,299.1 L1097.6,299.1 L1098.0,291.7 L1098.6,291.7 L1099.0,299.4 L1099.6,299.4 L1100.0,343.4 L1100.6,343.4 L1101.0,295.5 L1101.6,295.5 L1102.0,302.2 L1102.6,302.2 L1103.0,323.7 L1103.6,323.7 L1104.0,307.5 L1104.6,307.5 L1105.0,323.6 L1105.6,323.6 L1106.0,325.7 L1106.6,325.7 L1107.0,314.8 L1107.6,314.8 L1108.0,327.0 L1108.6,327.0 L1109.0,292.4 L1109.6,292.4 L1110.0,331.9 L1110.6,331.9 L1111.0,295.5 L1111.6,295.5 L1112.0,333.0 L1112.6,333.0 L1113.0,323.8 L1113.6,323.8 L1114.0,283.3 L1114.6,283.3 L1115.0,313.3 L1115.6,313.3 L1116.0,293.1 L1116.6,293.1 L1117.0,339.8 L1117.6,339.8 L1118.0,292.7 L1118.6,292.7 L1119.0,287.1 L1119.6,287.1 L1120.0,284.8 L1120.6,284.8 L1121.0,288.6 L1121.6,288.6 L1122.0,313.4 L1122.6,313.4 L1123.0,305.8 L1123.6,305.8 L1124.0,328.4 L1124.6,328.4 L1125.0,312.5 L1125.6,312.5 L1126.0,308.0 L1126.6,308.0 L1127.0,332.0 L1127.6,332.0 L1128.0,349.3 L1128.6,349.3 L1129.0,285.5 L1129.6,285.5 L1130.0,264.8 L1130.6,264.8 L1131.0,335.2 L1131.6,335.2 L1132.0,283.6 L1132.6,283.6 L1133.0,289.9 L1133.6,289.9 L1134.0,297.8 L1134.6,297.8 L1135.0,347.4 L1135.6,347.4 L1136.0,339.6 L1136.6,339.6 L1137.0,334.1 L1137.6,334.1 L1138.0,342.4 L1138.6,342.4 L1139.0,330.8 L1139.6,330.8 L1140.0,329.8 L1140.6,329.8 L1141.0,330.2 L1141.6,330.2 L1142.0,339.0 L1142.6,339.0 L1143.0,306.0 L1143.6,306.0 L1144.0,311.4 L1144.6,311.4 L1145.0,309.3 L1145.6,309.3 L1146.0,328.9 L1146.6,328.9 L1147.0,288.3 L1147.6,288.3 L1148.0,335.8 L1148.6,335.8 L1149.0,321.7 L1149.6,321.7 L1150.0,321.9 L1150.6,321.9 L1151.0,306.4 L1151.6,306.4 L1152.0,299.5 L1152.6,299.5 L1153.0,297.0 L1153.6,297.0 L1154.0,288.2 L1154.6,288.2 L1155.0,312.1 L1155.6,312.1 L1156.0,316.4 L1156.6,316.4 L1157.0,331.2 L1157.6,331.2 L1158.0,328.3 L1158.6,328.3 L1159.0,285.7 L1159.6,285.7 L1160.0,338.9 L1160.6,338.9 L1161.0,349.7 L1161.6,349.7 L1162.0,320.9 L1162.6,320.9 L1163.0,286.4 L1163.6,286.4 L1164.0,287.9 L1164.6,287.9 L1165.0,292.4 L1165.6,292.4 L1166.0,313.1 L1166.6,313.1 L1167.0,296.2 L1167.6,296.2 L1168.0,308.6 L1168.6,308.6 L1169.0,346.6 L1169.6,346.6 L1170.0,320.4 L1170.6,320.4 L1171.0,337.5 L1171.6,337.5 L1172.0,339.1 L1172.6,339.1 L1173.0,337.4 L1173.6,337.4 L1174.0,319.6 L1174.6,319.6 L1175.0,335.3 L1175.6,335.3 L1176.0,326.7 L1176.6,326.7 L1177.0,340.8 L1177.6,340.8 L1178.0,334.5 L1178.6,334.5 L1179.0,278.6 L1179.6,278.6 L1180.0,274.8 L1180.6,274.8 L1181.0,276.8 L1181.6,276.8 L1182.0,269.1 L1182.6,269.1 L1183.0,290.6 L1183.6,290.6 L1184.0,278.3 L1184.6,278.3 L1185.0,274.7 L1185.6,274.7 L1186.0,332.6 L1186.6,332.6 L1187.0,292.2 L1187.6,292.2 L1188.0,301.9 L1188.6,301.9 L1189.0,293.1 L1189.6,293.1 L1190.0,335.4 L1190.6,335.4 L1191.0,324.2 L1191.6,324.2 L1192.0,304.4 L1192.6,304.4 L1193.0,336.7 L1193.6,336.7 L1194.0,281.7 L1194.6,281.7 L1195.0,300.9 L1195.6,300.9 L1196.0,336.7 L1196.6,336.7 L1197.0,325.8 L1197.6,325.8 L1198.0,297.8 L1198.6,297.8 L1199.0,309.7 L1199.6,309.7 L1200.0,320.0 L1200.6,320.0 L1201.0,296.4 L1201.6,296.4 L1202.0,331.4 L1202.6,331.4 L1203.0,296.5 L1203.6,296.5 L1204.0,338.2 L1204.6,338.2 L1205.0,315.5 L1205.6,315.5 L1206.0,308.2 L1206.6,308.2 L1207.0,311.9 L1207.6,311.9 L1208.0,335.5 L1208.6,335.5 L1209.0,325.0 L1209.6,325.0 L1210.0,326.7 L1210.6,326.7 L1211.0,312.5 L1211.6,312.5 L1212.0,350.4 L1212.6,350.4 L1213.0,340.8 L1213.6,340.8 L1214.0,346.0 L1214.6,346.0 L1215.0,349.1 L1215.6,349.1 L1216.0,325.8 L1216.6,325.8 L1217.0,351.1 L1217.6,351.1 L1218.0,340.2 L1218.6,340.2 L1219.0,340.4 L1219.6,340.4 L1220.0,283.2 L1220.6,283.2 L1221.0,319.4 L1221.6,319.4 L1222.0,344.4 L1222.6,344.4 L1223.0,302.8 L1223.6,302.8 L1224.0,299.6 L1224.6,299.6 L1225.0,307.5 L1225.6,307.5 L1226.0,299.8 L1226.6,299.8 L1227.0,307.5 L1227.6,307.5 L1228.0,309.2 L1228.6,309.2 L1229.0,312.2 L1229.6,312.2 L1230.0,301.2 L1230.6,301.2 L1231.0,304.6 L1231.6,304.6 L1232.0,333.0 L1232.6,333.0 L1233.0,325.3 L1233.6,325.3 L1234.0,294.9 L1234.6,294.9 L1235.0,326.2 L1235.6,326.2 L1236.0,298.6 L1236.6,298.6 L1237.0,327.6 L1237.6,327.6 L1238.0,285.2 L1238.6,285.2 L1239.0,342.4 L1239.6,342.4 L1240.0,289.6 L1240.6,289.6 L1241.0,330.5 L1241.6,330.5 L1242.0,312.0 L1242.6,312.0 L1243.0,295.8 L1243.6,295.8 L1244.0,285.3 L1244.6,285.3 L1245.0,280.8 L1245.6,280.8 L1246.0,285.1 L1246.6,285.1 L1247.0,296.0 L1247.6,296.0 L1248.0,329.5 L1248.6,329.5 L1249.0,294.3 L1249.6,294.3 L1250.0,315.6 L1250.6,315.6 L1251.0,294.4 L1251.6,294.4 L1252.0,293.9 L1252.6,293.9 L1253.0,295.4 L1253.6,295.4 L1254.0,292.7 L1254.6,292.7 L1255.0,297.6 L1255.6,297.6 L1256.0,297.0 L1256.6,297.0 L1257.0,352.3 L1257.6,352.3 L1258.0,295.4 L1258.6,295.4 L1259.0,343.0 L1259.6,343.0 L1260.0,288.4 L1260.6,288.4 L1261.0,304.3 L1261.6,304.3 L1262.0,309.6 L1262.6,309.6 L1263.0,332.1 L1263.6,332.1 L1264.0,302.2 L1264.6,302.2 L1265.0,301.7 L1265.6,301.7 L1266.0,302.7 L1266.6,302.7 L1267.0,304.5 L1267.6,304.5 L1268.0,317.4 L1268.6,317.4 L1269.0,325.0 L1269.6,325.0 L1270.0,314.4 L1270.6,314.4 L1271.0,322.5 L1271.6,322.5 L1272.0,308.8 L1272.6,308.8 L1273.0,296.5 L1273.6,296.5 L1274.0,283.1 L1274.6,283.1 L1275.0,273.7 L1275.6,273.7 L1276.0,287.6 L1276.6,287.6 L1277.0,308.3 L1277.6,308.3 L1278.0,295.4 L1278.6,295.4 L1279.0,344.8 L1279.6,344.8 L1280.0,330.4 L1280.6,330.4 L1281.0,300.4 L1281.6,300.4 L1282.0,309.2 L1282.6,309.2 L1283.0,319.8 L1283.6,319.8 L1284.0,286.0 L1284.6,286.0 L1285.0,289.4 L1285.6,289.4 L1286.0,319.1 L1286.6,319.1 L1287.0,293.9 L1287.6,293.9 L1288.0,315.5 L1288.6,315.5 L1289.0,342.3 L1289.6,342.3 L1290.0,309.1 L1290.6,309.1 L1291.0,334.2 L1291.6,334.2 L1292.0,294.3 L1292.6,294.3 L1293.0,275.9 L1293.6,275.9 L1294.0,318.6 L1294.6,318.6 L1295.0,293.7 L1295.6,293.7 L1296.0,301.7 L1296.6,301.7 L1297.0,315.9 L1297.6,315.9 L1298.0,320.4 L1298.6,320.4 L1299.0,317.3 L1299.6,317.3 L1300.0,314.2 L1300.6,314.2 L1301.0,321.4 L1301.6,321.4 L1302.0,332.2 L1302.6,332.2 L1303.0,338.4 L1303.6,338.4 L1304.0,298.9 L1304.6,298.9 L1305.0,298.3 L1305.6,298.3 L1306.0,295.6 L1306.6,295.6 L1307.0,344.0 L1307.6,344.0 L1308.0,347.7 L1308.6,347.7 L1309.0,350.8 L1309.6,350.8 L1310.0,346.9 L1310.6,346.9 L1311.0,338.7 L1311.6,338.7 L1312.0,338.9 L1312.6,338.9 L1313.0,336.6 L1313.6,336.6 L1314.0,348.7 L1314.6,348.7 L1315.0,350.4 L1315.6,350.4 L1316.0,339.4 L1316.6,339.4 L1317.0,338.3 L1317.6,338.3 L1318.0,338.3 L1318.6,338.3 L1319.0,332.0 L1319.6,332.0 L1320.0,330.8 L1320.6,330.8 L1321.0,331.1 L1321.6,331.1 L1322.0,333.7 L1322.6,333.7 L1323.0,346.4 L1323.6,346.4 L1324.0,348.7 L1324.6,348.7 L1325.0,347.4 L1325.6,347.4 L1326.0,341.9 L1326.6,341.9 L1327.0,345.9 L1327.6,345.9 L1328.0,345.7 L1328.6,345.7 L1329.0,353.1 L1329.6,353.1 L1330.0,348.0 L1330.6,348.0 L1331.0,339.9 L1331.6,339.9 L1332.0,344.1 L1332.6,344.1 L1333.0,351.3 L1333.6,351.3 L1334.0,353.3 L1334.6,353.3 L1335.0,346.5 L1335.6,346.5 L1336.0,343.3 L1336.6,343.3 L1337.0,342.2 L1337.6,342.2 L1338.0,340.9 L1338.6,340.9 L1339.0,343.9 L1339.6,343.9 L1340.0,342.2 L1340.6,342.2 L1341.0,351.4 L1341.6,351.4 L1342.0,355.2 L1342.6,355.2 L1343.0,350.0 L1343.6,350.0 L1344.0,352.7 L1344.6,352.7 L1345.0,356.0 L1345.6,356.0 L1346.0,355.6 L1346.6,355.6 L1347.0,351.7 L1347.6,351.7 L1348.0,347.0 L1348.6,347.0 L1349.0,341.8 L1349.6,341.8 L1350.0,349.6 L1350.6,349.6 L1351.0,337.2 L1351.6,337.2 L1352.0,339.9 L1352.6,339.9 L1353.0,331.2 L1353.6,331.2 L1354.0,286.8 L1354.6,286.8 L1355.0,285.4 L1355.6,285.4 L1356.0,302.7 L1356.6,302.7 L1357.0,328.8 L1357.6,328.8 L1358.0,287.2 L1358.6,287.2 L1359.0,281.7 L1359.6,281.7 L1360.0,341.7 L1360.6,341.7 L1361.0,339.5 L1361.6,339.5 L1362.0,298.7 L1362.6,298.7 L1363.0,305.0 L1363.6,305.0 L1364.0,295.6 L1364.6,295.6 L1365.0,346.5 L1365.6,346.5 L1366.0,288.6 L1366.6,288.6 L1367.0,314.2 L1367.6,314.2 L1368.0,273.3 L1368.6,273.3 L1369.0,316.7 L1369.6,316.7 L1370.0,337.3 L1370.6,337.3 L1371.0,267.7 L1371.6,267.7 L1372.0,292.9 L1372.6,292.9 L1373.0,290.1 L1373.6,290.1 L1374.0,331.1 L1374.6,331.1 L1375.0,300.1 L1375.6,300.1 L1376.0,333.2 L1376.6,333.2 L1377.0,289.0 L1377.6,289.0 L1378.0,306.7 L1378.6,306.7 L1379.0,294.2 L1379.6,294.2 L1380.0,287.1 L1380.6,287.1 L1381.0,335.6 L1381.6,335.6 L1382.0,314.6 L1382.6,314.6 L1383.0,333.5 L1383.6,333.5 L1384.0,293.5 L1384.6,293.5 L1385.0,295.6 L1385.6,295.6 L1386.0,295.7 L1386.6,295.7 L1387.0,334.8 L1387.6,334.8 L1388.0,278.3 L1388.6,278.3 L1389.0,277.4 L1389.6,277.4 L1390.0,321.2 L1390.6,321.2 L1391.0,287.8 L1391.6,287.8 L1392.0,293.5 L1392.6,293.5 L1393.0,297.6 L1393.6,297.6 L1394.0,342.5 L1394.6,342.5 L1395.0,319.1 L1395.6,319.1 L1396.0,330.4 L1396.6,330.4 L1397.0,339.4 L1397.6,339.4 L1398.0,326.6 L1398.6,326.6 L1399.0,328.0 L1399.6,328.0 L1400.0,347.5 L1400.6,347.5 L1401.0,323.8 L1401.6,323.8 L1402.0,292.3 L1402.6,292.3 L1403.0,325.4 L1403.6,325.4 L1404.0,357.3 L1404.6,357.3 L1405.0,342.9 L1405.6,342.9 L1406.0,349.5 L1406.6,349.5 L1407.0,338.3 L1407.6,338.3 L1408.0,339.1 L1408.6,339.1 L1409.0,346.7 L1409.6,346.7 L1410.0,326.2 L1410.6,326.2 L1411.0,295.6 L1411.6,295.6 L1412.0,283.8 L1412.6,283.8 L1413.0,282.0 L1413.6,282.0 L1414.0,322.6 L1414.6,322.6 L1415.0,327.6 L1415.6,327.6 L1416.0,291.9 L1416.6,291.9 L1417.0,294.3 L1417.6,294.3 L1418.0,293.1 L1418.6,293.1 L1419.0,291.2 L1419.6,291.2 L1420.0,301.7 L1420.6,301.7 L1421.0,350.5 L1421.6,350.5 L1422.0,347.4 L1422.6,347.4 L1423.0,330.2 L1423.6,330.2 L1424.0,343.5 L1424.6,343.5 L1425.0,283.8 L1425.6,283.8 L1426.0,326.0 L1426.6,326.0 L1427.0,304.4 L1427.6,304.4 L1428.0,307.9 L1428.6,307.9 L1429.0,348.0 L1429.6,348.0 L1430.0,333.5 L1430.6,333.5 L1431.0,297.3 L1431.6,297.3 L1432.0,285.4 L1432.6,285.4 L1433.0,279.8 L1433.6,279.8 L1434.0,283.3 L1434.6,283.3 L1435.0,322.4 L1435.6,322.4 L1436.0,282.1 L1436.6,282.1 L1437.0,289.4 L1437.6,289.4 L1438.0,331.1 L1438.6,331.1 L1439.0,300.3 L1439.6,300.3 L1440.0,329.8 L1440.6,329.8 L1441.0,314.8 L1441.6,314.8 L1442.0,302.7 L1442.6,302.7 L1443.0,327.4 L1443.6,327.4 L1444.0,329.4 L1444.6,329.4 L1445.0,301.1 L1445.6,301.1 L1446.0,270.2 L1446.6,270.2 L1447.0,322.8 L1447.6,322.8 L1448.0,342.2 L1448.6,342.2 L1449.0,311.9 L1449.6,311.9 L1450.0,318.0 L1450.6,318.0 L1451.0,335.9 L1451.6,335.9 L1452.0,329.3 L1452.6,329.3 L1453.0,333.2 L1453.6,333.2 L1454.0,337.4 L1454.6,337.4 L1455.0,341.9 L1455.6,341.9 L1456.0,346.6 L1456.6,346.6 L1457.0,351.7 L1457.6,351.7 L1458.0,357.3 L1458.6,357.3 L1459.0,363.5 L1459.6,363.5 L1460.0,370.8 L1460.6,370.8 L1461.0,380.1 L1461.6,380.1 L1462.0,400.0 L1462.6,400.0 L1463.0,400.0 L1463.6,400.0 L1463.6,400.0 L1463.0,400.0 L1462.6,400.0 L1462.0,400.0 L1461.6,419.9 L1461.0,419.9 L1460.6,429.2 L1460.0,429.2 L1459.6,436.5 L1459.0,436.5 L1458.6,442.7 L1458.0,442.7 L1457.6,448.3 L1457.0,448.3 L1456.6,453.4 L1456.0,453.4 L1455.6,458.1 L1455.0,458.1 L1454.6,462.6 L1454.0,462.6 L1453.6,466.8 L1453.0,466.8 L1452.6,470.7 L1452.0,470.7 L1451.6,467.0 L1451.0,467.0 L1450.6,498.4 L1450.0,498.4 L1449.6,466.9 L1449.0,466.9 L1448.6,510.6 L1448.0,510.6 L1447.6,523.3 L1447.0,523.3 L1446.6,513.9 L1446.0,513.9 L1445.6,517.2 L1445.0,517.2 L1444.6,506.7 L1444.0,506.7 L1443.6,513.1 L1443.0,513.1 L1442.6,495.2 L1442.0,495.2 L1441.6,497.8 L1441.0,497.8 L1440.6,501.8 L1440.0,501.8 L1439.6,463.3 L1439.0,463.3 L1438.6,456.6 L1438.0,456.6 L1437.6,442.2 L1437.0,442.2 L1436.6,496.5 L1436.0,496.5 L1435.6,478.5 L1435.0,478.5 L1434.6,515.9 L1434.0,515.9 L1433.6,516.1 L1433.0,516.1 L1432.6,504.6 L1432.0,504.6 L1431.6,509.7 L1431.0,509.7 L1430.6,515.7 L1430.0,515.7 L1429.6,525.6 L1429.0,525.6 L1428.6,513.2 L1428.0,513.2 L1427.6,503.8 L1427.0,503.8 L1426.6,462.5 L1426.0,462.5 L1425.6,509.3 L1425.0,509.3 L1424.6,479.0 L1424.0,479.0 L1423.6,503.8 L1423.0,503.8 L1422.6,491.6 L1422.0,491.6 L1421.6,478.4 L1421.0,478.4 L1420.6,490.5 L1420.0,490.5 L1419.6,454.4 L1419.0,454.4 L1418.6,502.5 L1418.0,502.5 L1417.6,500.1 L1417.0,500.1 L1416.6,450.0 L1416.0,450.0 L1415.6,495.6 L1415.0,495.6 L1414.6,465.4 L1414.0,465.4 L1413.6,518.0 L1413.0,518.0 L1412.6,520.8 L1412.0,520.8 L1411.6,520.0 L1411.0,520.0 L1410.6,508.3 L1410.0,508.3 L1409.6,515.7 L1409.0,515.7 L1408.6,492.5 L1408.0,492.5 L1407.6,520.3 L1407.0,520.3 L1406.6,520.3 L1406.0,520.3 L1405.6,481.3 L1405.0,481.3 L1404.6,513.3 L1404.0,513.3 L1403.6,505.8 L1403.0,505.8 L1402.6,480.9 L1402.0,480.9 L1401.6,489.6 L1401.0,489.6 L1400.6,517.8 L1400.0,517.8 L1399.6,506.5 L1399.0,506.5 L1398.6,500.5 L1398.0,500.5 L1397.6,494.5 L1397.0,494.5 L1396.6,504.1 L1396.0,504.1 L1395.6,456.7 L1395.0,456.7 L1394.6,503.6 L1394.0,503.6 L1393.6,499.5 L1393.0,499.5 L1392.6,499.9 L1392.0,499.9 L1391.6,450.6 L1391.0,450.6 L1390.6,506.5 L1390.0,506.5 L1389.6,468.5 L1389.0,468.5 L1388.6,511.5 L1388.0,511.5 L1387.6,508.9 L1387.0,508.9 L1386.6,450.6 L1386.0,450.6 L1385.6,483.7 L1385.0,483.7 L1384.6,491.9 L1384.0,491.9 L1383.6,456.8 L1383.0,456.8 L1382.6,461.7 L1382.0,461.7 L1381.6,449.8 L1381.0,449.8 L1380.6,514.2 L1380.0,514.2 L1379.6,519.5 L1379.0,519.5 L1378.6,523.9 L1378.0,523.9 L1377.6,521.5 L1377.0,521.5 L1376.6,527.4 L1376.0,527.4 L1375.6,475.8 L1375.0,475.8 L1374.6,517.1 L1374.0,517.1 L1373.6,468.2 L1373.0,468.2 L1372.6,506.9 L1372.0,506.9 L1371.6,496.2 L1371.0,496.2 L1370.6,457.8 L1370.0,457.8 L1369.6,470.8 L1369.0,470.8 L1368.6,459.6 L1368.0,459.6 L1367.6,454.3 L1367.0,454.3 L1366.6,498.3 L1366.0,498.3 L1365.6,489.3 L1365.0,489.3 L1364.6,477.9 L1364.0,477.9 L1363.6,449.0 L1363.0,449.0 L1362.6,496.1 L1362.0,496.1 L1361.6,496.5 L1361.0,496.5 L1360.6,506.0 L1360.0,506.0 L1359.6,501.3 L1359.0,501.3 L1358.6,499.6 L1358.0,499.6 L1357.6,504.9 L1357.0,504.9 L1356.6,493.7 L1356.0,493.7 L1355.6,508.2 L1355.0,508.2 L1354.6,500.8 L1354.0,500.8 L1353.6,460.1 L1353.0,460.1 L1352.6,444.1 L1352.0,444.1 L1351.6,450.3 L1351.0,450.3 L1350.6,444.3 L1350.0,444.3 L1349.6,442.5 L1349.0,442.5 L1348.6,442.3 L1348.0,442.3 L1347.6,445.4 L1347.0,445.4 L1346.6,446.3 L1346.0,446.3 L1345.6,449.0 L1345.0,449.0 L1344.6,445.8 L1344.0,445.8 L1343.6,449.2 L1343.0,449.2 L1342.6,451.2 L1342.0,451.2 L1341.6,449.0 L1341.0,449.0 L1340.6,441.6 L1340.0,441.6 L1339.6,442.7 L1339.0,442.7 L1338.6,448.5 L1338.0,448.5 L1337.6,450.3 L1337.0,450.3 L1336.6,450.1 L1336.0,450.1 L1335.6,449.1 L1335.0,449.1 L1334.6,457.3 L1334.0,457.3 L1333.6,468.3 L1333.0,468.3 L1332.6,477.1 L1332.0,477.1 L1331.6,474.5 L1331.0,474.5 L1330.6,476.4 L1330.0,476.4 L1329.6,472.7 L1329.0,472.7 L1328.6,474.2 L1328.0,474.2 L1327.6,471.9 L1327.0,471.9 L1326.6,463.8 L1326.0,463.8 L1325.6,459.1 L1325.0,459.1 L1324.6,453.0 L1324.0,453.0 L1323.6,449.1 L1323.0,449.1 L1322.6,450.6 L1322.0,450.6 L1321.6,447.8 L1321.0,447.8 L1320.6,451.9 L1320.0,451.9 L1319.6,450.4 L1319.0,450.4 L1318.6,441.7 L1318.0,441.7 L1317.6,444.3 L1317.0,444.3 L1316.6,452.1 L1316.0,452.1 L1315.6,450.9 L1315.0,450.9 L1314.6,442.5 L1314.0,442.5 L1313.6,438.1 L1313.0,438.1 L1312.6,433.5 L1312.0,433.5 L1311.6,444.9 L1311.0,444.9 L1310.6,450.0 L1310.0,450.0 L1309.6,438.0 L1309.0,438.0 L1308.6,439.7 L1308.0,439.7 L1307.6,445.0 L1307.0,445.0 L1306.6,494.0 L1306.0,494.0 L1305.6,465.2 L1305.0,465.2 L1304.6,464.6 L1304.0,464.6 L1303.6,503.5 L1303.0,503.5 L1302.6,484.5 L1302.0,484.5 L1301.6,481.9 L1301.0,481.9 L1300.6,519.9 L1300.0,519.9 L1299.6,496.0 L1299.0,496.0 L1298.6,508.6 L1298.0,508.6 L1297.6,464.2 L1297.0,464.2 L1296.6,483.6 L1296.0,483.6 L1295.6,521.3 L1295.0,521.3 L1294.6,506.9 L1294.0,506.9 L1293.6,487.8 L1293.0,487.8 L1292.6,508.1 L1292.0,508.1 L1291.6,506.6 L1291.0,506.6 L1290.6,508.8 L1290.0,508.8 L1289.6,451.2 L1289.0,451.2 L1288.6,487.6 L1288.0,487.6 L1287.6,510.6 L1287.0,510.6 L1286.6,506.3 L1286.0,506.3 L1285.6,512.2 L1285.0,512.2 L1284.6,483.6 L1284.0,483.6 L1283.6,471.4 L1283.0,471.4 L1282.6,519.1 L1282.0,519.1 L1281.6,456.0 L1281.0,456.0 L1280.6,456.2 L1280.0,456.2 L1279.6,505.4 L1279.0,505.4 L1278.6,509.5 L1278.0,509.5 L1277.6,520.7 L1277.0,520.7 L1276.6,512.0 L1276.0,512.0 L1275.6,512.2 L1275.0,512.2 L1274.6,498.7 L1274.0,498.7 L1273.6,503.3 L1273.0,503.3 L1272.6,506.8 L1272.0,506.8 L1271.6,475.4 L1271.0,475.4 L1270.6,484.4 L1270.0,484.4 L1269.6,457.0 L1269.0,457.0 L1268.6,492.2 L1268.0,492.2 L1267.6,486.9 L1267.0,486.9 L1266.6,493.2 L1266.0,493.2 L1265.6,502.5 L1265.0,502.5 L1264.6,505.7 L1264.0,505.7 L1263.6,502.7 L1263.0,502.7 L1262.6,496.5 L1262.0,496.5 L1261.6,456.9 L1261.0,456.9 L1260.6,473.7 L1260.0,473.7 L1259.6,479.3 L1259.0,479.3 L1258.6,515.5 L1258.0,515.5 L1257.6,457.4 L1257.0,457.4 L1256.6,498.1 L1256.0,498.1 L1255.6,487.8 L1255.0,487.8 L1254.6,475.1 L1254.0,475.1 L1253.6,525.0 L1253.0,525.0 L1252.6,526.3 L1252.0,526.3 L1251.6,458.5 L1251.0,458.5 L1250.6,470.8 L1250.0,470.8 L1249.6,484.0 L1249.0,484.0 L1248.6,466.1 L1248.0,466.1 L1247.6,486.7 L1247.0,486.7 L1246.6,499.0 L1246.0,499.0 L1245.6,473.4 L1245.0,473.4 L1244.6,468.8 L1244.0,468.8 L1243.6,510.3 L1243.0,510.3 L1242.6,495.5 L1242.0,495.5 L1241.6,496.8 L1241.0,496.8 L1240.6,510.5 L1240.0,510.5 L1239.6,488.7 L1239.0,488.7 L1238.6,473.7 L1238.0,473.7 L1237.6,499.4 L1237.0,499.4 L1236.6,484.3 L1236.0,484.3 L1235.6,522.3 L1235.0,522.3 L1234.6,516.7 L1234.0,516.7 L1233.6,458.6 L1233.0,458.6 L1232.6,512.1 L1232.0,512.1 L1231.6,480.4 L1231.0,480.4 L1230.6,519.6 L1230.0,519.6 L1229.6,517.5 L1229.0,517.5 L1228.6,487.5 L1228.0,487.5 L1227.6,509.4 L1227.0,509.4 L1226.6,500.8 L1226.0,500.8 L1225.6,506.0 L1225.0,506.0 L1224.6,483.5 L1224.0,483.5 L1223.6,482.4 L1223.0,482.4 L1222.6,462.0 L1222.0,462.0 L1221.6,502.6 L1221.0,502.6 L1220.6,511.7 L1220.0,511.7 L1219.6,473.9 L1219.0,473.9 L1218.6,501.3 L1218.0,501.3 L1217.6,457.2 L1217.0,457.2 L1216.6,483.2 L1216.0,483.2 L1215.6,440.8 L1215.0,440.8 L1214.6,450.1 L1214.0,450.1 L1213.6,498.4 L1213.0,498.4 L1212.6,475.2 L1212.0,475.2 L1211.6,475.9 L1211.0,475.9 L1210.6,457.5 L1210.0,457.5 L1209.6,477.7 L1209.0,477.7 L1208.6,463.0 L1208.0,463.0 L1207.6,501.0 L1207.0,501.0 L1206.6,486.9 L1206.0,486.9 L1205.6,454.6 L1205.0,454.6 L1204.6,479.0 L1204.0,479.0 L1203.6,479.1 L1203.0,479.1 L1202.6,443.3 L1202.0,443.3 L1201.6,487.4 L1201.0,487.4 L1200.6,464.0 L1200.0,464.0 L1199.6,492.6 L1199.0,492.6 L1198.6,471.0 L1198.0,471.0 L1197.6,493.6 L1197.0,493.6 L1196.6,513.8 L1196.0,513.8 L1195.6,476.4 L1195.0,476.4 L1194.6,507.5 L1194.0,507.5 L1193.6,460.5 L1193.0,460.5 L1192.6,470.9 L1192.0,470.9 L1191.6,519.4 L1191.0,519.4 L1190.6,513.1 L1190.0,513.1 L1189.6,479.2 L1189.0,479.2 L1188.6,488.9 L1188.0,488.9 L1187.6,507.2 L1187.0,507.2 L1186.6,457.4 L1186.0,457.4 L1185.6,460.4 L1185.0,460.4 L1184.6,505.9 L1184.0,505.9 L1183.6,502.2 L1183.0,502.2 L1182.6,506.4 L1182.0,506.4 L1181.6,482.5 L1181.0,482.5 L1180.6,475.0 L1180.0,475.0 L1179.6,508.2 L1179.0,508.2 L1178.6,468.8 L1178.0,468.8 L1177.6,497.2 L1177.0,497.2 L1176.6,511.4 L1176.0,511.4 L1175.6,494.1 L1175.0,494.1 L1174.6,501.9 L1174.0,501.9 L1173.6,515.3 L1173.0,515.3 L1172.6,520.4 L1172.0,520.4 L1171.6,530.5 L1171.0,530.5 L1170.6,484.5 L1170.0,484.5 L1169.6,480.2 L1169.0,480.2 L1168.6,488.3 L1168.0,488.3 L1167.6,498.2 L1167.0,498.2 L1166.6,488.1 L1166.0,488.1 L1165.6,501.8 L1165.0,501.8 L1164.6,494.5 L1164.0,494.5 L1163.6,500.8 L1163.0,500.8 L1162.6,488.7 L1162.0,488.7 L1161.6,467.5 L1161.0,467.5 L1160.6,504.5 L1160.0,504.5 L1159.6,509.4 L1159.0,509.4 L1158.6,504.6 L1158.0,504.6 L1157.6,450.1 L1157.0,450.1 L1156.6,491.5 L1156.0,491.5 L1155.6,449.4 L1155.0,449.4 L1154.6,450.5 L1154.0,450.5 L1153.6,519.1 L1153.0,519.1 L1152.6,528.7 L1152.0,528.7 L1151.6,485.3 L1151.0,485.3 L1150.6,479.1 L1150.0,479.1 L1149.6,473.0 L1149.0,473.0 L1148.6,476.2 L1148.0,476.2 L1147.6,476.1 L1147.0,476.1 L1146.6,486.0 L1146.0,486.0 L1145.6,467.0 L1145.0,467.0 L1144.6,456.3 L1144.0,456.3 L1143.6,493.6 L1143.0,493.6 L1142.6,501.2 L1142.0,501.2 L1141.6,457.9 L1141.0,457.9 L1140.6,484.6 L1140.0,484.6 L1139.6,485.7 L1139.0,485.7 L1138.6,492.3 L1138.0,492.3 L1137.6,502.5 L1137.0,502.5 L1136.6,498.8 L1136.0,498.8 L1135.6,481.5 L1135.0,481.5 L1134.6,475.7 L1134.0,475.7 L1133.6,491.3 L1133.0,491.3 L1132.6,465.6 L1132.0,465.6 L1131.6,475.1 L1131.0,475.1 L1130.6,506.9 L1130.0,506.9 L1129.6,517.1 L1129.0,517.1 L1128.6,515.4 L1128.0,515.4 L1127.6,453.6 L1127.0,453.6 L1126.6,483.7 L1126.0,483.7 L1125.6,510.1 L1125.0,510.1 L1124.6,487.2 L1124.0,487.2 L1123.6,504.3 L1123.0,504.3 L1122.6,449.1 L1122.0,449.1 L1121.6,439.7 L1121.0,439.7 L1120.6,447.1 L1120.0,447.1 L1119.6,485.4 L1119.0,485.4 L1118.6,490.2 L1118.0,490.2 L1117.6,463.3 L1117.0,463.3 L1116.6,454.5 L1116.0,454.5 L1115.6,498.0 L1115.0,498.0 L1114.6,476.3 L1114.0,476.3 L1113.6,501.9 L1113.0,501.9 L1112.6,492.5 L1112.0,492.5 L1111.6,488.8 L1111.0,488.8 L1110.6,475.2 L1110.0,475.2 L1109.6,509.6 L1109.0,509.6 L1108.6,518.3 L1108.0,518.3 L1107.6,518.8 L1107.0,518.8 L1106.6,493.1 L1106.0,493.1 L1105.6,522.4 L1105.0,522.4 L1104.6,528.2 L1104.0,528.2 L1103.6,484.5 L1103.0,484.5 L1102.6,510.0 L1102.0,510.0 L1101.6,470.2 L1101.0,470.2 L1100.6,485.2 L1100.0,485.2 L1099.6,504.5 L1099.0,504.5 L1098.6,504.0 L1098.0,504.0 L1097.6,495.1 L1097.0,495.1 L1096.6,486.3 L1096.0,486.3 L1095.6,493.6 L1095.0,493.6 L1094.6,501.7 L1094.0,501.7 L1093.6,512.5 L1093.0,512.5 L1092.6,455.3 L1092.0,455.3 L1091.6,508.9 L1091.0,508.9 L1090.6,455.6 L1090.0,455.6 L1089.6,488.7 L1089.0,488.7 L1088.6,501.6 L1088.0,501.6 L1087.6,463.3 L1087.0,463.3 L1086.6,499.4 L1086.0,499.4 L1085.6,473.3 L1085.0,473.3 L1084.6,523.1 L1084.0,523.1 L1083.6,481.8 L1083.0,481.8 L1082.6,498.0 L1082.0,498.0 L1081.6,478.5 L1081.0,478.5 L1080.6,465.6 L1080.0,465.6 L1079.6,463.0 L1079.0,463.0 L1078.6,518.5 L1078.0,518.5 L1077.6,511.4 L1077.0,511.4 L1076.6,479.5 L1076.0,479.5 L1075.6,526.9 L1075.0,526.9 L1074.6,542.3 L1074.0,542.3 L1073.6,527.3 L1073.0,527.3 L1072.6,487.1 L1072.0,487.1 L1071.6,487.0 L1071.0,487.0 L1070.6,456.1 L1070.0,456.1 L1069.6,509.1 L1069.0,509.1 L1068.6,498.9 L1068.0,498.9 L1067.6,463.1 L1067.0,463.1 L1066.6,511.6 L1066.0,511.6 L1065.6,465.5 L1065.0,465.5 L1064.6,522.4 L1064.0,522.4 L1063.6,520.1 L1063.0,520.1 L1062.6,509.4 L1062.0,509.4 L1061.6,500.5 L1061.0,500.5 L1060.6,500.2 L1060.0,500.2 L1059.6,450.1 L1059.0,450.1 L1058.6,498.8 L1058.0,498.8 L1057.6,498.0 L1057.0,498.0 L1056.6,487.4 L1056.0,487.4 L1055.6,474.5 L1055.0,474.5 L1054.6,468.1 L1054.0,468.1 L1053.6,489.9 L1053.0,489.9 L1052.6,469.4 L1052.0,469.4 L1051.6,515.8 L1051.0,515.8 L1050.6,523.6 L1050.0,523.6 L1049.6,518.3 L1049.0,518.3 L1048.6,487.3 L1048.0,487.3 L1047.6,465.7 L1047.0,465.7 L1046.6,465.6 L1046.0,465.6 L1045.6,488.1 L1045.0,488.1 L1044.6,462.2 L1044.0,462.2 L1043.6,473.5 L1043.0,473.5 L1042.6,457.3 L1042.0,457.3 L1041.6,508.4 L1041.0,508.4 L1040.6,519.6 L1040.0,519.6 L1039.6,505.1 L1039.0,505.1 L1038.6,468.6 L1038.0,468.6 L1037.6,472.0 L1037.0,472.0 L1036.6,471.6 L1036.0,471.6 L1035.6,481.9 L1035.0,481.9 L1034.6,470.7 L1034.0,470.7 L1033.6,506.9 L1033.0,506.9 L1032.6,468.6 L1032.0,468.6 L1031.6,499.8 L1031.0,499.8 L1030.6,496.4 L1030.0,496.4 L1029.6,483.3 L1029.0,483.3 L1028.6,518.0 L1028.0,518.0 L1027.6,521.8 L1027.0,521.8 L1026.6,459.9 L1026.0,459.9 L1025.6,490.2 L1025.0,490.2 L1024.6,525.9 L1024.0,525.9 L1023.6,463.1 L1023.0,463.1 L1022.6,510.5 L1022.0,510.5 L1021.6,457.2 L1021.0,457.2 L1020.6,470.0 L1020.0,470.0 L1019.6,506.2 L1019.0,506.2 L1018.6,510.2 L1018.0,510.2 L1017.6,517.8 L1017.0,517.8 L1016.6,520.8 L1016.0,520.8 L1015.6,493.2 L1015.0,493.2 L1014.6,455.7 L1014.0,455.7 L1013.6,452.5 L1013.0,452.5 L1012.6,481.5 L1012.0,481.5 L1011.6,465.4 L1011.0,465.4 L1010.6,495.9 L1010.0,495.9 L1009.6,499.8 L1009.0,499.8 L1008.6,501.6 L1008.0,501.6 L1007.6,498.5 L1007.0,498.5 L1006.6,448.0 L1006.0,448.0 L1005.6,504.0 L1005.0,504.0 L1004.6,457.2 L1004.0,457.2 L1003.6,469.7 L1003.0,469.7 L1002.6,452.5 L1002.0,452.5 L1001.6,451.5 L1001.0,451.5 L1000.6,490.2 L1000.0,490.2 L999.6,445.7 L999.0,445.7 L998.6,490.1 L998.0,490.1 L997.6,462.6 L997.0,462.6 L996.6,460.0 L996.0,460.0 L995.6,471.2 L995.0,471.2 L994.6,508.5 L994.0,508.5 L993.6,485.6 L993.0,485.6 L992.6,485.0 L992.0,485.0 L991.6,515.2 L991.0,515.2 L990.6,518.0 L990.0,518.0 L989.6,468.2 L989.0,468.2 L988.6,495.7 L988.0,495.7 L987.6,477.0 L987.0,477.0 L986.6,498.7 L986.0,498.7 L985.6,526.8 L985.0,526.8 L984.6,462.2 L984.0,462.2 L983.6,518.9 L983.0,518.9 L982.6,517.5 L982.0,517.5 L981.6,526.2 L981.0,526.2 L980.6,539.6 L980.0,539.6 L979.6,491.1 L979.0,491.1 L978.6,480.2 L978.0,480.2 L977.6,488.1 L977.0,488.1 L976.6,507.4 L976.0,507.4 L975.6,514.5 L975.0,514.5 L974.6,486.7 L974.0,486.7 L973.6,494.8 L973.0,494.8 L972.6,482.7 L972.0,482.7 L971.6,477.1 L971.0,477.1 L970.6,452.7 L970.0,452.7 L969.6,468.2 L969.0,468.2 L968.6,506.0 L968.0,506.0 L967.6,461.7 L967.0,461.7 L966.6,505.3 L966.0,505.3 L965.6,478.3 L965.0,478.3 L964.6,512.3 L964.0,512.3 L963.6,520.3 L963.0,520.3 L962.6,453.5 L962.0,453.5 L961.6,465.2 L961.0,465.2 L960.6,487.4 L960.0,487.4 L959.6,450.7 L959.0,450.7 L958.6,510.2 L958.0,510.2 L957.6,512.9 L957.0,512.9 L956.6,523.7 L956.0,523.7 L955.6,481.7 L955.0,481.7 L954.6,477.2 L954.0,477.2 L953.6,519.7 L953.0,519.7 L952.6,501.4 L952.0,501.4 L951.6,522.9 L951.0,522.9 L950.6,527.7 L950.0,527.7 L949.6,517.9 L949.0,517.9 L948.6,461.8 L948.0,461.8 L947.6,462.4 L947.0,462.4 L946.6,482.6 L946.0,482.6 L945.6,506.9 L945.0,506.9 L944.6,506.4 L944.0,506.4 L943.6,498.4 L943.0,498.4 L942.6,477.5 L942.0,477.5 L941.6,492.9 L941.0,492.9 L940.6,482.1 L940.0,482.1 L939.6,485.2 L939.0,485.2 L938.6,488.7 L938.0,488.7 L937.6,513.1 L937.0,513.1 L936.6,476.3 L936.0,476.3 L935.6,460.7 L935.0,460.7 L934.6,470.6 L934.0,470.6 L933.6,457.9 L933.0,457.9 L932.6,522.5 L932.0,522.5 L931.6,467.2 L931.0,467.2 L930.6,507.1 L930.0,507.1 L929.6,483.8 L929.0,483.8 L928.6,455.3 L928.0,455.3 L927.6,453.4 L927.0,453.4 L926.6,513.7 L926.0,513.7 L925.6,512.2 L925.0,512.2 L924.6,522.6 L924.0,522.6 L923.6,524.0 L923.0,524.0 L922.6,471.5 L922.0,471.5 L921.6,528.3 L921.0,528.3 L920.6,501.1 L920.0,501.1 L919.6,486.2 L919.0,486.2 L918.6,534.3 L918.0,534.3 L917.6,501.6 L917.0,501.6 L916.6,532.9 L916.0,532.9 L915.6,495.2 L915.0,495.2 L914.6,523.8 L914.0,523.8 L913.6,520.3 L913.0,520.3 L912.6,522.9 L912.0,522.9 L911.6,534.6 L911.0,534.6 L910.6,530.8 L910.0,530.8 L909.6,528.4 L909.0,528.4 L908.6,469.7 L908.0,469.7 L907.6,481.1 L907.0,481.1 L906.6,505.0 L906.0,505.0 L905.6,493.1 L905.0,493.1 L904.6,507.6 L904.0,507.6 L903.6,496.0 L903.0,496.0 L902.6,497.6 L902.0,497.6 L901.6,492.9 L901.0,492.9 L900.6,448.1 L900.0,448.1 L899.6,453.0 L899.0,453.0 L898.6,491.1 L898.0,491.1 L897.6,476.3 L897.0,476.3 L896.6,477.4 L896.0,477.4 L895.6,518.2 L895.0,518.2 L894.6,450.5 L894.0,450.5 L893.6,500.3 L893.0,500.3 L892.6,497.7 L892.0,497.7 L891.6,444.9 L891.0,444.9 L890.6,499.3 L890.0,499.3 L889.6,512.0 L889.0,512.0 L888.6,539.6 L888.0,539.6 L887.6,505.9 L887.0,505.9 L886.6,452.8 L886.0,452.8 L885.6,493.8 L885.0,493.8 L884.6,458.9 L884.0,458.9 L883.6,468.2 L883.0,468.2 L882.6,463.4 L882.0,463.4 L881.6,513.9 L881.0,513.9 L880.6,500.8 L880.0,500.8 L879.6,501.8 L879.0,501.8 L878.6,462.3 L878.0,462.3 L877.6,467.5 L877.0,467.5 L876.6,501.2 L876.0,501.2 L875.6,500.4 L875.0,500.4 L874.6,451.8 L874.0,451.8 L873.6,503.9 L873.0,503.9 L872.6,472.0 L872.0,472.0 L871.6,463.2 L871.0,463.2 L870.6,493.3 L870.0,493.3 L869.6,490.1 L869.0,490.1 L868.6,489.7 L868.0,489.7 L867.6,474.0 L867.0,474.0 L866.6,497.3 L866.0,497.3 L865.6,478.9 L865.0,478.9 L864.6,509.0 L864.0,509.0 L863.6,508.2 L863.0,508.2 L862.6,456.2 L862.0,456.2 L861.6,480.1 L861.0,480.1 L860.6,465.9 L860.0,465.9 L859.6,450.0 L859.0,450.0 L858.6,491.8 L858.0,491.8 L857.6,502.4 L857.0,502.4 L856.6,467.5 L856.0,467.5 L855.6,488.0 L855.0,488.0 L854.6,452.4 L854.0,452.4 L853.6,473.2 L853.0,473.2 L852.6,502.8 L852.0,502.8 L851.6,505.5 L851.0,505.5 L850.6,511.6 L850.0,511.6 L849.6,509.9 L849.0,509.9 L848.6,485.0 L848.0,485.0 L847.6,461.1 L847.0,461.1 L846.6,462.2 L846.0,462.2 L845.6,511.5 L845.0,511.5 L844.6,460.6 L844.0,460.6 L843.6,468.3 L843.0,468.3 L842.6,521.1 L842.0,521.1 L841.6,508.1 L841.0,508.1 L840.6,481.8 L840.0,481.8 L839.6,512.1 L839.0,512.1 L838.6,477.5 L838.0,477.5 L837.6,528.8 L837.0,528.8 L836.6,531.6 L836.0,531.6 L835.6,487.3 L835.0,487.3 L834.6,509.1 L834.0,509.1 L833.6,467.7 L833.0,467.7 L832.6,458.8 L832.0,458.8 L831.6,455.4 L831.0,455.4 L830.6,469.6 L830.0,469.6 L829.6,490.6 L829.0,490.6 L828.6,498.9 L828.0,498.9 L827.6,490.6 L827.0,490.6 L826.6,482.3 L826.0,482.3 L825.6,509.6 L825.0,509.6 L824.6,453.8 L824.0,453.8 L823.6,493.1 L823.0,493.1 L822.6,517.3 L822.0,517.3 L821.6,514.3 L821.0,514.3 L820.6,515.9 L820.0,515.9 L819.6,515.7 L819.0,515.7 L818.6,488.6 L818.0,488.6 L817.6,451.0 L817.0,451.0 L816.6,499.2 L816.0,499.2 L815.6,474.2 L815.0,474.2 L814.6,502.2 L814.0,502.2 L813.6,498.0 L813.0,498.0 L812.6,503.7 L812.0,503.7 L811.6,507.7 L811.0,507.7 L810.6,488.7 L810.0,488.7 L809.6,457.7 L809.0,457.7 L808.6,483.0 L808.0,483.0 L807.6,464.9 L807.0,464.9 L806.6,482.4 L806.0,482.4 L805.6,521.4 L805.0,521.4 L804.6,518.9 L804.0,518.9 L803.6,470.3 L803.0,470.3 L802.6,516.0 L802.0,516.0 L801.6,469.3 L801.0,469.3 L800.6,508.1 L800.0,508.1 L799.6,496.4 L799.0,496.4 L798.6,514.5 L798.0,514.5 L797.6,464.9 L797.0,464.9 L796.6,530.5 L796.0,530.5 L795.6,494.8 L795.0,494.8 L794.6,453.2 L794.0,453.2 L793.6,461.5 L793.0,461.5 L792.6,474.6 L792.0,474.6 L791.6,517.7 L791.0,517.7 L790.6,467.7 L790.0,467.7 L789.6,512.4 L789.0,512.4 L788.6,457.0 L788.0,457.0 L787.6,511.5 L787.0,511.5 L786.6,506.9 L786.0,506.9 L785.6,511.0 L785.0,511.0 L784.6,475.0 L784.0,475.0 L783.6,511.1 L783.0,511.1 L782.6,503.0 L782.0,503.0 L781.6,506.2 L781.0,506.2 L780.6,503.5 L780.0,503.5 L779.6,462.2 L779.0,462.2 L778.6,513.2 L778.0,513.2 L777.6,521.0 L777.0,521.0 L776.6,509.0 L776.0,509.0 L775.6,509.3 L775.0,509.3 L774.6,500.8 L774.0,500.8 L773.6,501.7 L773.0,501.7 L772.6,506.6 L772.0,506.6 L771.6,458.4 L771.0,458.4 L770.6,474.3 L770.0,474.3 L769.6,485.0 L769.0,485.0 L768.6,505.8 L768.0,505.8 L767.6,454.6 L767.0,454.6 L766.6,500.0 L766.0,500.0 L765.6,473.0 L765.0,473.0 L764.6,506.1 L764.0,506.1 L763.6,505.9 L763.0,505.9 L762.6,487.2 L762.0,487.2 L761.6,462.1 L761.0,462.1 L760.6,451.7 L760.0,451.7 L759.6,484.5 L759.0,484.5 L758.6,449.8 L758.0,449.8 L757.6,469.5 L757.0,469.5 L756.6,455.5 L756.0,455.5 L755.6,455.4 L755.0,455.4 L754.6,513.9 L754.0,513.9 L753.6,514.4 L753.0,514.4 L752.6,475.4 L752.0,475.4 L751.6,463.8 L751.0,463.8 L750.6,454.1 L750.0,454.1 L749.6,498.1 L749.0,498.1 L748.6,457.6 L748.0,457.6 L747.6,481.4 L747.0,481.4 L746.6,458.5 L746.0,458.5 L745.6,502.3 L745.0,502.3 L744.6,497.1 L744.0,497.1 L743.6,499.9 L743.0,499.9 L742.6,500.8 L742.0,500.8 L741.6,501.5 L741.0,501.5 L740.6,474.1 L740.0,474.1 L739.6,503.2 L739.0,503.2 L738.6,484.9 L738.0,484.9 L737.6,458.5 L737.0,458.5 L736.6,474.6 L736.0,474.6 L735.6,515.2 L735.0,515.2 L734.6,508.0 L734.0,508.0 L733.6,476.8 L733.0,476.8 L732.6,510.3 L732.0,510.3 L731.6,498.9 L731.0,498.9 L730.6,447.5 L730.0,447.5 L729.6,486.8 L729.0,486.8 L728.6,493.1 L728.0,493.1 L727.6,475.1 L727.0,475.1 L726.6,500.2 L726.0,500.2 L725.6,497.1 L725.0,497.1 L724.6,452.9 L724.0,452.9 L723.6,451.0 L723.0,451.0 L722.6,516.0 L722.0,516.0 L721.6,496.5 L721.0,496.5 L720.6,482.0 L720.0,482.0 L719.6,507.8 L719.0,507.8 L718.6,461.1 L718.0,461.1 L717.6,468.1 L717.0,468.1 L716.6,463.6 L716.0,463.6 L715.6,510.1 L715.0,510.1 L714.6,530.5 L714.0,530.5 L713.6,519.3 L713.0,519.3 L712.6,490.4 L712.0,490.4 L711.6,503.4 L711.0,503.4 L710.6,498.4 L710.0,498.4 L709.6,504.6 L709.0,504.6 L708.6,511.4 L708.0,511.4 L707.6,514.3 L707.0,514.3 L706.6,514.1 L706.0,514.1 L705.6,513.3 L705.0,513.3 L704.6,483.0 L704.0,483.0 L703.6,517.5 L703.0,517.5 L702.6,514.7 L702.0,514.7 L701.6,509.7 L701.0,509.7 L700.6,501.6 L700.0,501.6 L699.6,507.7 L699.0,507.7 L698.6,523.5 L698.0,523.5 L697.6,513.1 L697.0,513.1 L696.6,484.4 L696.0,484.4 L695.6,456.4 L695.0,456.4 L694.6,467.4 L694.0,467.4 L693.6,467.8 L693.0,467.8 L692.6,489.9 L692.0,489.9 L691.6,452.6 L691.0,452.6 L690.6,492.3 L690.0,492.3 L689.6,499.3 L689.0,499.3 L688.6,468.4 L688.0,468.4 L687.6,474.3 L687.0,474.3 L686.6,482.7 L686.0,482.7 L685.6,479.3 L685.0,479.3 L684.6,491.3 L684.0,491.3 L683.6,458.2 L683.0,458.2 L682.6,488.3 L682.0,488.3 L681.6,501.6 L681.0,501.6 L680.6,504.6 L680.0,504.6 L679.6,471.4 L679.0,471.4 L678.6,487.0 L678.0,487.0 L677.6,487.3 L677.0,487.3 L676.6,487.7 L676.0,487.7 L675.6,459.9 L675.0,459.9 L674.6,485.6 L674.0,485.6 L673.6,481.5 L673.0,481.5 L672.6,458.9 L672.0,458.9 L671.6,505.2 L671.0,505.2 L670.6,499.7 L670.0,499.7 L669.6,507.6 L669.0,507.6 L668.6,514.6 L668.0,514.6 L667.6,466.7 L667.0,466.7 L666.6,487.4 L666.0,487.4 L665.6,499.4 L665.0,499.4 L664.6,493.1 L664.0,493.1 L663.6,504.0 L663.0,504.0 L662.6,501.9 L662.0,501.9 L661.6,459.6 L661.0,459.6 L660.6,506.7 L660.0,506.7 L659.6,504.5 L659.0,504.5 L658.6,501.5 L658.0,501.5 L657.6,500.6 L657.0,500.6 L656.6,475.0 L656.0,475.0 L655.6,450.9 L655.0,450.9 L654.6,479.7 L654.0,479.7 L653.6,507.3 L653.0,507.3 L652.6,455.3 L652.0,455.3 L651.6,513.4 L651.0,513.4 L650.6,494.3 L650.0,494.3 L649.6,489.6 L649.0,489.6 L648.6,506.6 L648.0,506.6 L647.6,506.1 L647.0,506.1 L646.6,482.8 L646.0,482.8 L645.6,494.1 L645.0,494.1 L644.6,503.4 L644.0,503.4 L643.6,503.0 L643.0,503.0 L642.6,491.1 L642.0,491.1 L641.6,453.0 L641.0,453.0 L640.6,505.9 L640.0,505.9 L639.6,507.0 L639.0,507.0 L638.6,480.2 L638.0,480.2 L637.6,482.4 L637.0,482.4 L636.6,499.0 L636.0,499.0 L635.6,479.3 L635.0,479.3 L634.6,506.7 L634.0,506.7 L633.6,508.9 L633.0,508.9 L632.6,509.6 L632.0,509.6 L631.6,452.9 L631.0,452.9 L630.6,495.5 L630.0,495.5 L629.6,491.7 L629.0,491.7 L628.6,499.8 L628.0,499.8 L627.6,501.8 L627.0,501.8 L626.6,465.3 L626.0,465.3 L625.6,512.2 L625.0,512.2 L624.6,507.5 L624.0,507.5 L623.6,511.5 L623.0,511.5 L622.6,505.0 L622.0,505.0 L621.6,513.4 L621.0,513.4 L620.6,461.1 L620.0,461.1 L619.6,509.7 L619.0,509.7 L618.6,473.1 L618.0,473.1 L617.6,500.8 L617.0,500.8 L616.6,515.1 L616.0,515.1 L615.6,463.6 L615.0,463.6 L614.6,460.8 L614.0,460.8 L613.6,507.3 L613.0,507.3 L612.6,480.8 L612.0,480.8 L611.6,528.1 L611.0,528.1 L610.6,485.0 L610.0,485.0 L609.6,529.2 L609.0,529.2 L608.6,519.9 L608.0,519.9 L607.6,520.4 L607.0,520.4 L606.6,494.5 L606.0,494.5 L605.6,511.3 L605.0,511.3 L604.6,516.2 L604.0,516.2 L603.6,522.2 L603.0,522.2 L602.6,512.6 L602.0,512.6 L601.6,479.0 L601.0,479.0 L600.6,513.6 L600.0,513.6 L599.6,522.8 L599.0,522.8 L598.6,508.4 L598.0,508.4 L597.6,472.5 L597.0,472.5 L596.6,504.7 L596.0,504.7 L595.6,451.2 L595.0,451.2 L594.6,505.0 L594.0,505.0 L593.6,464.5 L593.0,464.5 L592.6,516.1 L592.0,516.1 L591.6,519.3 L591.0,519.3 L590.6,520.6 L590.0,520.6 L589.6,530.3 L589.0,530.3 L588.6,529.2 L588.0,529.2 L587.6,524.2 L587.0,524.2 L586.6,518.1 L586.0,518.1 L585.6,498.0 L585.0,498.0 L584.6,456.6 L584.0,456.6 L583.6,480.3 L583.0,480.3 L582.6,474.4 L582.0,474.4 L581.6,473.8 L581.0,473.8 L580.6,457.4 L580.0,457.4 L579.6,509.2 L579.0,509.2 L578.6,510.2 L578.0,510.2 L577.6,460.9 L577.0,460.9 L576.6,504.7 L576.0,504.7 L575.6,472.7 L575.0,472.7 L574.6,456.0 L574.0,456.0 L573.6,497.4 L573.0,497.4 L572.6,497.2 L572.0,497.2 L571.6,488.9 L571.0,488.9 L570.6,480.4 L570.0,480.4 L569.6,528.4 L569.0,528.4 L568.6,523.3 L568.0,523.3 L567.6,493.8 L567.0,493.8 L566.6,513.6 L566.0,513.6 L565.6,511.8 L565.0,511.8 L564.6,472.4 L564.0,472.4 L563.6,505.0 L563.0,505.0 L562.6,498.0 L562.0,498.0 L561.6,478.0 L561.0,478.0 L560.6,508.9 L560.0,508.9 L559.6,484.7 L559.0,484.7 L558.6,499.6 L558.0,499.6 L557.6,490.4 L557.0,490.4 L556.6,484.0 L556.0,484.0 L555.6,479.6 L555.0,479.6 L554.6,499.0 L554.0,499.0 L553.6,446.3 L553.0,446.3 L552.6,450.1 L552.0,450.1 L551.6,505.6 L551.0,505.6 L550.6,517.2 L550.0,517.2 L549.6,474.5 L549.0,474.5 L548.6,479.8 L548.0,479.8 L547.6,465.2 L547.0,465.2 L546.6,465.0 L546.0,465.0 L545.6,496.2 L545.0,496.2 L544.6,483.7 L544.0,483.7 L543.6,510.0 L543.0,510.0 L542.6,464.0 L542.0,464.0 L541.6,461.0 L541.0,461.0 L540.6,515.2 L540.0,515.2 L539.6,506.2 L539.0,506.2 L538.6,504.1 L538.0,504.1 L537.6,494.5 L537.0,494.5 L536.6,449.0 L536.0,449.0 L535.6,505.2 L535.0,505.2 L534.6,519.4 L534.0,519.4 L533.6,477.5 L533.0,477.5 L532.6,475.9 L532.0,475.9 L531.6,509.4 L531.0,509.4 L530.6,487.8 L530.0,487.8 L529.6,515.8 L529.0,515.8 L528.6,474.0 L528.0,474.0 L527.6,481.8 L527.0,481.8 L526.6,502.9 L526.0,502.9 L525.6,470.7 L525.0,470.7 L524.6,461.8 L524.0,461.8 L523.6,488.4 L523.0,488.4 L522.6,459.4 L522.0,459.4 L521.6,502.5 L521.0,502.5 L520.6,478.2 L520.0,478.2 L519.6,474.3 L519.0,474.3 L518.6,494.5 L518.0,494.5 L517.6,502.5 L517.0,502.5 L516.6,452.9 L516.0,452.9 L515.6,484.5 L515.0,484.5 L514.6,493.4 L514.0,493.4 L513.6,445.8 L513.0,445.8 L512.6,507.7 L512.0,507.7 L511.6,467.1 L511.0,467.1 L510.6,503.0 L510.0,503.0 L509.6,493.2 L509.0,493.2 L508.6,496.9 L508.0,496.9 L507.6,490.4 L507.0,490.4 L506.6,480.3 L506.0,480.3 L505.6,489.0 L505.0,489.0 L504.6,511.7 L504.0,511.7 L503.6,479.7 L503.0,479.7 L502.6,501.1 L502.0,501.1 L501.6,500.0 L501.0,500.0 L500.6,469.8 L500.0,469.8 L499.6,462.9 L499.0,462.9 L498.6,476.3 L498.0,476.3 L497.6,481.5 L497.0,481.5 L496.6,491.1 L496.0,491.1 L495.6,520.0 L495.0,520.0 L494.6,486.1 L494.0,486.1 L493.6,522.4 L493.0,522.4 L492.6,470.7 L492.0,470.7 L491.6,519.7 L491.0,519.7 L490.6,517.3 L490.0,517.3 L489.6,525.7 L489.0,525.7 L488.6,528.2 L488.0,528.2 L487.6,493.1 L487.0,493.1 L486.6,469.8 L486.0,469.8 L485.6,533.1 L485.0,533.1 L484.6,500.6 L484.0,500.6 L483.6,463.2 L483.0,463.2 L482.6,512.2 L482.0,512.2 L481.6,475.8 L481.0,475.8 L480.6,493.0 L480.0,493.0 L479.6,487.8 L479.0,487.8 L478.6,490.8 L478.0,490.8 L477.6,500.3 L477.0,500.3 L476.6,461.0 L476.0,461.0 L475.6,506.9 L475.0,506.9 L474.6,508.4 L474.0,508.4 L473.6,465.5 L473.0,465.5 L472.6,508.5 L472.0,508.5 L471.6,465.9 L471.0,465.9 L470.6,496.6 L470.0,496.6 L469.6,478.4 L469.0,478.4 L468.6,462.6 L468.0,462.6 L467.6,471.2 L467.0,471.2 L466.6,510.6 L466.0,510.6 L465.6,490.9 L465.0,490.9 L464.6,462.5 L464.0,462.5 L463.6,476.7 L463.0,476.7 L462.6,519.2 L462.0,519.2 L461.6,515.1 L461.0,515.1 L460.6,454.2 L460.0,454.2 L459.6,481.5 L459.0,481.5 L458.6,521.4 L458.0,521.4 L457.6,524.8 L457.0,524.8 L456.6,480.1 L456.0,480.1 L455.6,490.0 L455.0,490.0 L454.6,467.2 L454.0,467.2 L453.6,501.2 L453.0,501.2 L452.6,500.6 L452.0,500.6 L451.6,503.4 L451.0,503.4 L450.6,507.5 L450.0,507.5 L449.6,508.9 L449.0,508.9 L448.6,505.2 L448.0,505.2 L447.6,516.6 L447.0,516.6 L446.6,507.6 L446.0,507.6 L445.6,462.2 L445.0,462.2 L444.6,484.7 L444.0,484.7 L443.6,486.4 L443.0,486.4 L442.6,501.0 L442.0,501.0 L441.6,506.0 L441.0,506.0 L440.6,460.2 L440.0,460.2 L439.6,503.3 L439.0,503.3 L438.6,467.1 L438.0,467.1 L437.6,512.6 L437.0,512.6 L436.6,449.9 L436.0,449.9 L435.6,496.8 L435.0,496.8 L434.6,496.5 L434.0,496.5 L433.6,502.3 L433.0,502.3 L432.6,507.9 L432.0,507.9 L431.6,513.7 L431.0,513.7 L430.6,495.8 L430.0,495.8 L429.6,494.3 L429.0,494.3 L428.6,462.2 L428.0,462.2 L427.6,462.3 L427.0,462.3 L426.6,481.5 L426.0,481.5 L425.6,495.6 L425.0,495.6 L424.6,470.8 L424.0,470.8 L423.6,501.5 L423.0,501.5 L422.6,452.0 L422.0,452.0 L421.6,458.9 L421.0,458.9 L420.6,452.9 L420.0,452.9 L419.6,494.6 L419.0,494.6 L418.6,437.6 L418.0,437.6 L417.6,494.5 L417.0,494.5 L416.6,469.5 L416.0,469.5 L415.6,450.4 L415.0,450.4 L414.6,461.1 L414.0,461.1 L413.6,492.2 L413.0,492.2 L412.6,448.1 L412.0,448.1 L411.6,512.5 L411.0,512.5 L410.6,522.2 L410.0,522.2 L409.6,522.4 L409.0,522.4 L408.6,521.2 L408.0,521.2 L407.6,454.4 L407.0,454.4 L406.6,471.4 L406.0,471.4 L405.6,481.7 L405.0,481.7 L404.6,506.6 L404.0,506.6 L403.6,476.6 L403.0,476.6 L402.6,481.1 L402.0,481.1 L401.6,522.1 L401.0,522.1 L400.6,480.9 L400.0,480.9 L399.6,494.1 L399.0,494.1 L398.6,469.9 L398.0,469.9 L397.6,464.8 L397.0,464.8 L396.6,490.1 L396.0,490.1 L395.6,516.4 L395.0,516.4 L394.6,505.0 L394.0,505.0 L393.6,464.5 L393.0,464.5 L392.6,493.7 L392.0,493.7 L391.6,485.3 L391.0,485.3 L390.6,464.2 L390.0,464.2 L389.6,500.4 L389.0,500.4 L388.6,506.5 L388.0,506.5 L387.6,499.9 L387.0,499.9 L386.6,496.9 L386.0,496.9 L385.6,509.8 L385.0,509.8 L384.6,518.3 L384.0,518.3 L383.6,516.2 L383.0,516.2 L382.6,517.2 L382.0,517.2 L381.6,518.7 L381.0,518.7 L380.6,516.2 L380.0,516.2 L379.6,515.5 L379.0,515.5 L378.6,510.3 L378.0,510.3 L377.6,510.1 L377.0,510.1 L376.6,486.3 L376.0,486.3 L375.6,517.6 L375.0,517.6Z" fill="#3d9d6e"/>
<path d="M375.0,686.3 L375.6,686.3 L376.0,677.3 L376.6,677.3 L377.0,667.6 L377.6,667.6 L378.0,679.0 L378.6,679.0 L379.0,675.5 L379.6,675.5 L380.0,690.9 L380.6,690.9 L381.0,668.1 L381.6,668.1 L382.0,685.7 L382.6,685.7 L383.0,681.0 L383.6,681.0 L384.0,640.8 L384.6,640.8 L385.0,657.2 L385.6,657.2 L386.0,686.9 L386.6,686.9 L387.0,690.7 L387.6,690.7 L388.0,649.7 L388.6,649.7 L389.0,690.3 L389.6,690.3 L390.0,655.9 L390.6,655.9 L391.0,678.2 L391.6,678.2 L392.0,688.2 L392.6,688.2 L393.0,692.1 L393.6,692.1 L394.0,688.3 L394.6,688.3 L395.0,687.9 L395.6,687.9 L396.0,686.8 L396.6,686.8 L397.0,678.3 L397.6,678.3 L398.0,649.3 L398.6,649.3 L399.0,642.6 L399.6,642.6 L400.0,648.7 L400.6,648.7 L401.0,677.0 L401.6,677.0 L402.0,667.6 L402.6,667.6 L403.0,684.2 L403.6,684.2 L404.0,691.2 L404.6,691.2 L405.0,686.3 L405.6,686.3 L406.0,657.2 L406.6,657.2 L407.0,648.2 L407.6,648.2 L408.0,683.5 L408.6,683.5 L409.0,687.0 L409.6,687.0 L410.0,670.9 L410.6,670.9 L411.0,675.8 L411.6,675.8 L412.0,690.7 L412.6,690.7 L413.0,677.4 L413.6,677.4 L414.0,683.0 L414.6,683.0 L415.0,683.9 L415.6,683.9 L416.0,661.5 L416.6,661.5 L417.0,672.5 L417.6,672.5 L418.0,690.2 L418.6,690.2 L419.0,659.1 L419.6,659.1 L420.0,673.6 L420.6,673.6 L421.0,685.4 L421.6,685.4 L422.0,690.9 L422.6,690.9 L423.0,686.5 L423.6,686.5 L424.0,655.3 L424.6,655.3 L425.0,687.8 L425.6,687.8 L426.0,687.6 L426.6,687.6 L427.0,662.7 L427.6,662.7 L428.0,689.7 L428.6,689.7 L429.0,685.8 L429.6,685.8 L430.0,654.4 L430.6,654.4 L431.0,684.1 L431.6,684.1 L432.0,671.9 L432.6,671.9 L433.0,638.8 L433.6,638.8 L434.0,661.7 L434.6,661.7 L435.0,671.7 L435.6,671.7 L436.0,677.8 L436.6,677.8 L437.0,686.2 L437.6,686.2 L438.0,685.6 L438.6,685.6 L439.0,691.2 L439.6,691.2 L440.0,687.1 L440.6,687.1 L441.0,689.0 L441.6,689.0 L442.0,688.9 L442.6,688.9 L443.0,666.7 L443.6,666.7 L444.0,667.0 L444.6,667.0 L445.0,691.3 L445.6,691.3 L446.0,692.7 L446.6,692.7 L447.0,686.3 L447.6,686.3 L448.0,685.0 L448.6,685.0 L449.0,691.4 L449.6,691.4 L450.0,685.2 L450.6,685.2 L451.0,690.7 L451.6,690.7 L452.0,685.3 L452.6,685.3 L453.0,672.7 L453.6,672.7 L454.0,690.5 L454.6,690.5 L455.0,682.5 L455.6,682.5 L456.0,691.6 L456.6,691.6 L457.0,692.5 L457.6,692.5 L458.0,692.0 L458.6,692.0 L459.0,672.3 L459.6,672.3 L460.0,685.9 L460.6,685.9 L461.0,689.8 L461.6,689.8 L462.0,667.0 L462.6,667.0 L463.0,662.8 L463.6,662.8 L464.0,660.8 L464.6,660.8 L465.0,678.9 L465.6,678.9 L466.0,638.8 L466.6,638.8 L467.0,662.0 L467.6,662.0 L468.0,685.8 L468.6,685.8 L469.0,685.8 L469.6,685.8 L470.0,691.7 L470.6,691.7 L471.0,662.3 L471.6,662.3 L472.0,687.8 L472.6,687.8 L473.0,687.0 L473.6,687.0 L474.0,676.8 L474.6,676.8 L475.0,692.3 L475.6,692.3 L476.0,672.8 L476.6,672.8 L477.0,689.6 L477.6,689.6 L478.0,688.7 L478.6,688.7 L479.0,653.8 L479.6,653.8 L480.0,649.2 L480.6,649.2 L481.0,687.8 L481.6,687.8 L482.0,686.5 L482.6,686.5 L483.0,660.4 L483.6,660.4 L484.0,683.3 L484.6,683.3 L485.0,658.4 L485.6,658.4 L486.0,688.1 L486.6,688.1 L487.0,690.0 L487.6,690.0 L488.0,689.0 L488.6,689.0 L489.0,690.7 L489.6,690.7 L490.0,689.2 L490.6,689.2 L491.0,682.7 L491.6,682.7 L492.0,680.7 L492.6,680.7 L493.0,651.4 L493.6,651.4 L494.0,668.3 L494.6,668.3 L495.0,649.4 L495.6,649.4 L496.0,653.6 L496.6,653.6 L497.0,685.1 L497.6,685.1 L498.0,667.3 L498.6,667.3 L499.0,687.3 L499.6,687.3 L500.0,692.6 L500.6,692.6 L501.0,652.0 L501.6,652.0 L502.0,682.6 L502.6,682.6 L503.0,685.3 L503.6,685.3 L504.0,660.5 L504.6,660.5 L505.0,691.6 L505.6,691.6 L506.0,680.2 L506.6,680.2 L507.0,690.7 L507.6,690.7 L508.0,674.1 L508.6,674.1 L509.0,671.2 L509.6,671.2 L510.0,664.2 L510.6,664.2 L511.0,639.4 L511.6,639.4 L512.0,671.0 L512.6,671.0 L513.0,658.1 L513.6,658.1 L514.0,688.2 L514.6,688.2 L515.0,690.5 L515.6,690.5 L516.0,682.7 L516.6,682.7 L517.0,641.0 L517.6,641.0 L518.0,644.8 L518.6,644.8 L519.0,691.7 L519.6,691.7 L520.0,686.2 L520.6,686.2 L521.0,678.0 L521.6,678.0 L522.0,679.2 L522.6,679.2 L523.0,649.5 L523.6,649.5 L524.0,679.3 L524.6,679.3 L525.0,664.1 L525.6,664.1 L526.0,687.3 L526.6,687.3 L527.0,677.9 L527.6,677.9 L528.0,690.8 L528.6,690.8 L529.0,681.7 L529.6,681.7 L530.0,650.6 L530.6,650.6 L531.0,687.9 L531.6,687.9 L532.0,688.6 L532.6,688.6 L533.0,661.0 L533.6,661.0 L534.0,649.6 L534.6,649.6 L535.0,678.1 L535.6,678.1 L536.0,675.0 L536.6,675.0 L537.0,690.3 L537.6,690.3 L538.0,691.6 L538.6,691.6 L539.0,687.8 L539.6,687.8 L540.0,685.3 L540.6,685.3 L541.0,690.1 L541.6,690.1 L542.0,686.7 L542.6,686.7 L543.0,690.9 L543.6,690.9 L544.0,685.9 L544.6,685.9 L545.0,676.3 L545.6,676.3 L546.0,661.9 L546.6,661.9 L547.0,691.2 L547.6,691.2 L548.0,688.2 L548.6,688.2 L549.0,692.3 L549.6,692.3 L550.0,685.9 L550.6,685.9 L551.0,690.6 L551.6,690.6 L552.0,692.6 L552.6,692.6 L553.0,672.0 L553.6,672.0 L554.0,676.9 L554.6,676.9 L555.0,689.4 L555.6,689.4 L556.0,649.5 L556.6,649.5 L557.0,657.0 L557.6,657.0 L558.0,685.3 L558.6,685.3 L559.0,666.6 L559.6,666.6 L560.0,690.4 L560.6,690.4 L561.0,686.5 L561.6,686.5 L562.0,690.7 L562.6,690.7 L563.0,674.5 L563.6,674.5 L564.0,662.6 L564.6,662.6 L565.0,656.5 L565.6,656.5 L566.0,653.6 L566.6,653.6 L567.0,686.9 L567.6,686.9 L568.0,669.6 L568.6,669.6 L569.0,651.3 L569.6,651.3 L570.0,656.1 L570.6,656.1 L571.0,689.8 L571.6,689.8 L572.0,688.4 L572.6,688.4 L573.0,686.9 L573.6,686.9 L574.0,688.6 L574.6,688.6 L575.0,676.9 L575.6,676.9 L576.0,690.9 L576.6,690.9 L577.0,684.9 L577.6,684.9 L578.0,687.9 L578.6,687.9 L579.0,691.5 L579.6,691.5 L580.0,656.2 L580.6,656.2 L581.0,683.3 L581.6,683.3 L582.0,654.7 L582.6,654.7 L583.0,659.4 L583.6,659.4 L584.0,679.1 L584.6,679.1 L585.0,670.4 L585.6,670.4 L586.0,676.2 L586.6,676.2 L587.0,638.8 L587.6,638.8 L588.0,678.5 L588.6,678.5 L589.0,651.2 L589.6,651.2 L590.0,679.7 L590.6,679.7 L591.0,665.5 L591.6,665.5 L592.0,685.2 L592.6,685.2 L593.0,662.0 L593.6,662.0 L594.0,661.8 L594.6,661.8 L595.0,678.7 L595.6,678.7 L596.0,675.4 L596.6,675.4 L597.0,674.8 L597.6,674.8 L598.0,685.1 L598.6,685.1 L599.0,639.9 L599.6,639.9 L600.0,651.5 L600.6,651.5 L601.0,685.5 L601.6,685.5 L602.0,688.5 L602.6,688.5 L603.0,655.9 L603.6,655.9 L604.0,691.0 L604.6,691.0 L605.0,691.1 L605.6,691.1 L606.0,680.3 L606.6,680.3 L607.0,647.9 L607.6,647.9 L608.0,681.2 L608.6,681.2 L609.0,690.2 L609.6,690.2 L610.0,652.1 L610.6,652.1 L611.0,684.2 L611.6,684.2 L612.0,677.1 L612.6,677.1 L613.0,652.6 L613.6,652.6 L614.0,677.9 L614.6,677.9 L615.0,689.6 L615.6,689.6 L616.0,685.0 L616.6,685.0 L617.0,638.8 L617.6,638.8 L618.0,669.6 L618.6,669.6 L619.0,684.4 L619.6,684.4 L620.0,649.1 L620.6,649.1 L621.0,681.0 L621.6,681.0 L622.0,690.0 L622.6,690.0 L623.0,638.8 L623.6,638.8 L624.0,667.7 L624.6,667.7 L625.0,685.3 L625.6,685.3 L626.0,689.0 L626.6,689.0 L627.0,680.0 L627.6,680.0 L628.0,655.6 L628.6,655.6 L629.0,651.9 L629.6,651.9 L630.0,674.3 L630.6,674.3 L631.0,675.0 L631.6,675.0 L632.0,638.8 L632.6,638.8 L633.0,662.9 L633.6,662.9 L634.0,638.8 L634.6,638.8 L635.0,669.5 L635.6,669.5 L636.0,689.1 L636.6,689.1 L637.0,686.7 L637.6,686.7 L638.0,687.5 L638.6,687.5 L639.0,679.4 L639.6,679.4 L640.0,687.0 L640.6,687.0 L641.0,685.3 L641.6,685.3 L642.0,669.4 L642.6,669.4 L643.0,668.1 L643.6,668.1 L644.0,662.8 L644.6,662.8 L645.0,638.8 L645.6,638.8 L646.0,689.9 L646.6,689.9 L647.0,690.5 L647.6,690.5 L648.0,652.1 L648.6,652.1 L649.0,668.7 L649.6,668.7 L650.0,658.0 L650.6,658.0 L651.0,688.7 L651.6,688.7 L652.0,663.3 L652.6,663.3 L653.0,662.2 L653.6,662.2 L654.0,668.4 L654.6,668.4 L655.0,659.8 L655.6,659.8 L656.0,692.4 L656.6,692.4 L657.0,652.3 L657.6,652.3 L658.0,685.6 L658.6,685.6 L659.0,692.5 L659.6,692.5 L660.0,670.3 L660.6,670.3 L661.0,686.3 L661.6,686.3 L662.0,689.6 L662.6,689.6 L663.0,690.8 L663.6,690.8 L664.0,685.9 L664.6,685.9 L665.0,680.7 L665.6,680.7 L666.0,687.8 L666.6,687.8 L667.0,686.0 L667.6,686.0 L668.0,688.2 L668.6,688.2 L669.0,685.2 L669.6,685.2 L670.0,691.2 L670.6,691.2 L671.0,686.1 L671.6,686.1 L672.0,685.5 L672.6,685.5 L673.0,673.4 L673.6,673.4 L674.0,691.1 L674.6,691.1 L675.0,662.8 L675.6,662.8 L676.0,687.4 L676.6,687.4 L677.0,688.4 L677.6,688.4 L678.0,679.3 L678.6,679.3 L679.0,691.7 L679.6,691.7 L680.0,688.4 L680.6,688.4 L681.0,656.1 L681.6,656.1 L682.0,676.1 L682.6,676.1 L683.0,671.1 L683.6,671.1 L684.0,682.9 L684.6,682.9 L685.0,677.5 L685.6,677.5 L686.0,688.1 L686.6,688.1 L687.0,686.7 L687.6,686.7 L688.0,690.6 L688.6,690.6 L689.0,678.4 L689.6,678.4 L690.0,685.0 L690.6,685.0 L691.0,692.8 L691.6,692.8 L692.0,681.9 L692.6,681.9 L693.0,692.0 L693.6,692.0 L694.0,686.4 L694.6,686.4 L695.0,647.6 L695.6,647.6 L696.0,664.7 L696.6,664.7 L697.0,647.0 L697.6,647.0 L698.0,669.2 L698.6,669.2 L699.0,642.0 L699.6,642.0 L700.0,644.5 L700.6,644.5 L701.0,691.4 L701.6,691.4 L702.0,692.3 L702.6,692.3 L703.0,686.2 L703.6,686.2 L704.0,692.1 L704.6,692.1 L705.0,689.4 L705.6,689.4 L706.0,691.5 L706.6,691.5 L707.0,685.2 L707.6,685.2 L708.0,672.6 L708.6,672.6 L709.0,688.4 L709.6,688.4 L710.0,688.5 L710.6,688.5 L711.0,657.5 L711.6,657.5 L712.0,642.3 L712.6,642.3 L713.0,680.8 L713.6,680.8 L714.0,638.8 L714.6,638.8 L715.0,666.9 L715.6,666.9 L716.0,672.8 L716.6,672.8 L717.0,649.9 L717.6,649.9 L718.0,691.3 L718.6,691.3 L719.0,668.2 L719.6,668.2 L720.0,672.9 L720.6,672.9 L721.0,689.4 L721.6,689.4 L722.0,679.7 L722.6,679.7 L723.0,682.0 L723.6,682.0 L724.0,690.2 L724.6,690.2 L725.0,663.7 L725.6,663.7 L726.0,685.0 L726.6,685.0 L727.0,686.2 L727.6,686.2 L728.0,673.8 L728.6,673.8 L729.0,672.9 L729.6,672.9 L730.0,691.3 L730.6,691.3 L731.0,690.4 L731.6,690.4 L732.0,689.1 L732.6,689.1 L733.0,690.5 L733.6,690.5 L734.0,657.5 L734.6,657.5 L735.0,680.9 L735.6,680.9 L736.0,684.4 L736.6,684.4 L737.0,669.7 L737.6,669.7 L738.0,667.5 L738.6,667.5 L739.0,666.7 L739.6,666.7 L740.0,691.8 L740.6,691.8 L741.0,680.5 L741.6,680.5 L742.0,690.2 L742.6,690.2 L743.0,686.5 L743.6,686.5 L744.0,692.7 L744.6,692.7 L745.0,653.4 L745.6,653.4 L746.0,653.7 L746.6,653.7 L747.0,657.5 L747.6,657.5 L748.0,664.8 L748.6,664.8 L749.0,681.0 L749.6,681.0 L750.0,679.8 L750.6,679.8 L751.0,685.5 L751.6,685.5 L752.0,667.9 L752.6,667.9 L753.0,675.4 L753.6,675.4 L754.0,667.8 L754.6,667.8 L755.0,690.6 L755.6,690.6 L756.0,673.7 L756.6,673.7 L757.0,691.3 L757.6,691.3 L758.0,687.7 L758.6,687.7 L759.0,688.6 L759.6,688.6 L760.0,690.5 L760.6,690.5 L761.0,666.2 L761.6,666.2 L762.0,683.1 L762.6,683.1 L763.0,688.9 L763.6,688.9 L764.0,684.9 L764.6,684.9 L765.0,646.7 L765.6,646.7 L766.0,681.9 L766.6,681.9 L767.0,658.9 L767.6,658.9 L768.0,655.0 L768.6,655.0 L769.0,685.3 L769.6,685.3 L770.0,688.0 L770.6,688.0 L771.0,687.8 L771.6,687.8 L772.0,688.2 L772.6,688.2 L773.0,667.4 L773.6,667.4 L774.0,689.5 L774.6,689.5 L775.0,655.2 L775.6,655.2 L776.0,692.7 L776.6,692.7 L777.0,661.6 L777.6,661.6 L778.0,675.8 L778.6,675.8 L779.0,669.1 L779.6,669.1 L780.0,674.3 L780.6,674.3 L781.0,688.6 L781.6,688.6 L782.0,665.8 L782.6,665.8 L783.0,661.6 L783.6,661.6 L784.0,684.7 L784.6,684.7 L785.0,689.5 L785.6,689.5 L786.0,685.8 L786.6,685.8 L787.0,657.3 L787.6,657.3 L788.0,687.6 L788.6,687.6 L789.0,658.1 L789.6,658.1 L790.0,671.3 L790.6,671.3 L791.0,686.3 L791.6,686.3 L792.0,685.1 L792.6,685.1 L793.0,661.4 L793.6,661.4 L794.0,676.1 L794.6,676.1 L795.0,673.0 L795.6,673.0 L796.0,664.3 L796.6,664.3 L797.0,673.8 L797.6,673.8 L798.0,681.5 L798.6,681.5 L799.0,692.7 L799.6,692.7 L800.0,686.0 L800.6,686.0 L801.0,689.9 L801.6,689.9 L802.0,688.1 L802.6,688.1 L803.0,684.6 L803.6,684.6 L804.0,686.7 L804.6,686.7 L805.0,671.5 L805.6,671.5 L806.0,691.4 L806.6,691.4 L807.0,690.4 L807.6,690.4 L808.0,657.2 L808.6,657.2 L809.0,661.2 L809.6,661.2 L810.0,678.4 L810.6,678.4 L811.0,675.0 L811.6,675.0 L812.0,687.9 L812.6,687.9 L813.0,671.2 L813.6,671.2 L814.0,681.9 L814.6,681.9 L815.0,778.6 L815.6,778.6 L816.0,778.0 L816.6,778.0 L817.0,777.3 L817.6,777.3 L818.0,776.6 L818.6,776.6 L819.0,782.5 L819.6,782.5 L820.0,780.2 L820.6,780.2 L821.0,785.9 L821.6,785.9 L822.0,643.1 L822.6,643.1 L823.0,639.6 L823.6,639.6 L824.0,688.9 L824.6,688.9 L825.0,687.0 L825.6,687.0 L826.0,686.3 L826.6,686.3 L827.0,651.2 L827.6,651.2 L828.0,687.1 L828.6,687.1 L829.0,691.5 L829.6,691.5 L830.0,687.9 L830.6,687.9 L831.0,665.2 L831.6,665.2 L832.0,688.9 L832.6,688.9 L833.0,685.3 L833.6,685.3 L834.0,678.6 L834.6,678.6 L835.0,687.1 L835.6,687.1 L836.0,688.6 L836.6,688.6 L837.0,678.0 L837.6,678.0 L838.0,669.2 L838.6,669.2 L839.0,686.7 L839.6,686.7 L840.0,656.5 L840.6,656.5 L841.0,683.4 L841.6,683.4 L842.0,641.2 L842.6,641.2 L843.0,663.2 L843.6,663.2 L844.0,648.3 L844.6,648.3 L845.0,689.9 L845.6,689.9 L846.0,690.2 L846.6,690.2 L847.0,662.8 L847.6,662.8 L848.0,686.1 L848.6,686.1 L849.0,638.8 L849.6,638.8 L850.0,643.1 L850.6,643.1 L851.0,656.4 L851.6,656.4 L852.0,659.3 L852.6,659.3 L853.0,686.6 L853.6,686.6 L854.0,661.6 L854.6,661.6 L855.0,664.3 L855.6,664.3 L856.0,691.7 L856.6,691.7 L857.0,685.5 L857.6,685.5 L858.0,681.3 L858.6,681.3 L859.0,685.7 L859.6,685.7 L860.0,678.2 L860.6,678.2 L861.0,641.2 L861.6,641.2 L862.0,678.6 L862.6,678.6 L863.0,652.9 L863.6,652.9 L864.0,691.5 L864.6,691.5 L865.0,671.3 L865.6,671.3 L866.0,653.1 L866.6,653.1 L867.0,666.2 L867.6,666.2 L868.0,638.8 L868.6,638.8 L869.0,638.8 L869.6,638.8 L870.0,651.5 L870.6,651.5 L871.0,650.4 L871.6,650.4 L872.0,650.5 L872.6,650.5 L873.0,686.8 L873.6,686.8 L874.0,668.8 L874.6,668.8 L875.0,690.4 L875.6,690.4 L876.0,670.7 L876.6,670.7 L877.0,687.1 L877.6,687.1 L878.0,680.5 L878.6,680.5 L879.0,691.4 L879.6,691.4 L880.0,661.9 L880.6,661.9 L881.0,659.8 L881.6,659.8 L882.0,660.2 L882.6,660.2 L883.0,691.5 L883.6,691.5 L884.0,664.7 L884.6,664.7 L885.0,690.0 L885.6,690.0 L886.0,692.6 L886.6,692.6 L887.0,673.4 L887.6,673.4 L888.0,661.6 L888.6,661.6 L889.0,663.7 L889.6,663.7 L890.0,677.1 L890.6,677.1 L891.0,689.3 L891.6,689.3 L892.0,692.6 L892.6,692.6 L893.0,689.7 L893.6,689.7 L894.0,687.5 L894.6,687.5 L895.0,677.1 L895.6,677.1 L896.0,683.3 L896.6,683.3 L897.0,685.4 L897.6,685.4 L898.0,692.4 L898.6,692.4 L899.0,680.4 L899.6,680.4 L900.0,690.9 L900.6,690.9 L901.0,692.3 L901.6,692.3 L902.0,685.9 L902.6,685.9 L903.0,674.9 L903.6,674.9 L904.0,666.3 L904.6,666.3 L905.0,638.8 L905.6,638.8 L906.0,642.2 L906.6,642.2 L907.0,681.7 L907.6,681.7 L908.0,638.8 L908.6,638.8 L909.0,648.6 L909.6,648.6 L910.0,683.5 L910.6,683.5 L911.0,679.9 L911.6,679.9 L912.0,685.2 L912.6,685.2 L913.0,645.2 L913.6,645.2 L914.0,667.6 L914.6,667.6 L915.0,681.1 L915.6,681.1 L916.0,687.9 L916.6,687.9 L917.0,689.4 L917.6,689.4 L918.0,679.0 L918.6,679.0 L919.0,691.6 L919.6,691.6 L920.0,689.9 L920.6,689.9 L921.0,670.5 L921.6,670.5 L922.0,689.0 L922.6,689.0 L923.0,638.8 L923.6,638.8 L924.0,668.4 L924.6,668.4 L925.0,646.9 L925.6,646.9 L926.0,691.0 L926.6,691.0 L927.0,681.5 L927.6,681.5 L928.0,676.3 L928.6,676.3 L929.0,640.8 L929.6,640.8 L930.0,682.4 L930.6,682.4 L931.0,654.7 L931.6,654.7 L932.0,655.5 L932.6,655.5 L933.0,672.9 L933.6,672.9 L934.0,685.7 L934.6,685.7 L935.0,686.9 L935.6,686.9 L936.0,688.4 L936.6,688.4 L937.0,689.3 L937.6,689.3 L938.0,692.5 L938.6,692.5 L939.0,657.9 L939.6,657.9 L940.0,687.8 L940.6,687.8 L941.0,664.7 L941.6,664.7 L942.0,652.0 L942.6,652.0 L943.0,643.8 L943.6,643.8 L944.0,682.2 L944.6,682.2 L945.0,689.8 L945.6,689.8 L946.0,692.5 L946.6,692.5 L947.0,689.3 L947.6,689.3 L948.0,680.2 L948.6,680.2 L949.0,650.9 L949.6,650.9 L950.0,660.5 L950.6,660.5 L951.0,657.2 L951.6,657.2 L952.0,671.5 L952.6,671.5 L953.0,689.1 L953.6,689.1 L954.0,685.1 L954.6,685.1 L955.0,684.9 L955.6,684.9 L956.0,686.7 L956.6,686.7 L957.0,689.1 L957.6,689.1 L958.0,692.0 L958.6,692.0 L959.0,677.3 L959.6,677.3 L960.0,687.8 L960.6,687.8 L961.0,691.0 L961.6,691.0 L962.0,658.8 L962.6,658.8 L963.0,649.2 L963.6,649.2 L964.0,683.6 L964.6,683.6 L965.0,685.9 L965.6,685.9 L966.0,660.4 L966.6,660.4 L967.0,652.8 L967.6,652.8 L968.0,682.6 L968.6,682.6 L969.0,689.3 L969.6,689.3 L970.0,692.1 L970.6,692.1 L971.0,658.5 L971.6,658.5 L972.0,686.9 L972.6,686.9 L973.0,688.6 L973.6,688.6 L974.0,687.4 L974.6,687.4 L975.0,652.0 L975.6,652.0 L976.0,690.4 L976.6,690.4 L977.0,686.6 L977.6,686.6 L978.0,686.3 L978.6,686.3 L979.0,686.4 L979.6,686.4 L980.0,673.9 L980.6,673.9 L981.0,691.4 L981.6,691.4 L982.0,685.3 L982.6,685.3 L983.0,686.0 L983.6,686.0 L984.0,674.0 L984.6,674.0 L985.0,642.6 L985.6,642.6 L986.0,682.6 L986.6,682.6 L987.0,688.6 L987.6,688.6 L988.0,655.9 L988.6,655.9 L989.0,683.3 L989.6,683.3 L990.0,668.4 L990.6,668.4 L991.0,675.4 L991.6,675.4 L992.0,652.8 L992.6,652.8 L993.0,686.6 L993.6,686.6 L994.0,676.8 L994.6,676.8 L995.0,685.4 L995.6,685.4 L996.0,688.2 L996.6,688.2 L997.0,669.3 L997.6,669.3 L998.0,686.9 L998.6,686.9 L999.0,671.9 L999.6,671.9 L1000.0,680.1 L1000.6,680.1 L1001.0,638.8 L1001.6,638.8 L1002.0,681.9 L1002.6,681.9 L1003.0,638.8 L1003.6,638.8 L1004.0,678.4 L1004.6,678.4 L1005.0,689.7 L1005.6,689.7 L1006.0,683.4 L1006.6,683.4 L1007.0,682.7 L1007.6,682.7 L1008.0,656.4 L1008.6,656.4 L1009.0,687.5 L1009.6,687.5 L1010.0,638.8 L1010.6,638.8 L1011.0,638.8 L1011.6,638.8 L1012.0,648.0 L1012.6,648.0 L1013.0,641.9 L1013.6,641.9 L1014.0,638.8 L1014.6,638.8 L1015.0,647.6 L1015.6,647.6 L1016.0,672.2 L1016.6,672.2 L1017.0,661.1 L1017.6,661.1 L1018.0,685.0 L1018.6,685.0 L1019.0,673.9 L1019.6,673.9 L1020.0,666.7 L1020.6,666.7 L1021.0,663.6 L1021.6,663.6 L1022.0,639.6 L1022.6,639.6 L1023.0,661.0 L1023.6,661.0 L1024.0,663.8 L1024.6,663.8 L1025.0,690.1 L1025.6,690.1 L1026.0,661.2 L1026.6,661.2 L1027.0,676.3 L1027.6,676.3 L1028.0,685.9 L1028.6,685.9 L1029.0,638.8 L1029.6,638.8 L1030.0,690.0 L1030.6,690.0 L1031.0,686.4 L1031.6,686.4 L1032.0,638.8 L1032.6,638.8 L1033.0,680.5 L1033.6,680.5 L1034.0,680.9 L1034.6,680.9 L1035.0,673.5 L1035.6,673.5 L1036.0,679.7 L1036.6,679.7 L1037.0,641.1 L1037.6,641.1 L1038.0,656.2 L1038.6,656.2 L1039.0,690.5 L1039.6,690.5 L1040.0,689.8 L1040.6,689.8 L1041.0,685.1 L1041.6,685.1 L1042.0,647.4 L1042.6,647.4 L1043.0,683.1 L1043.6,683.1 L1044.0,686.8 L1044.6,686.8 L1045.0,665.0 L1045.6,665.0 L1046.0,661.5 L1046.6,661.5 L1047.0,690.4 L1047.6,690.4 L1048.0,689.1 L1048.6,689.1 L1049.0,665.0 L1049.6,665.0 L1050.0,649.0 L1050.6,649.0 L1051.0,686.4 L1051.6,686.4 L1052.0,685.0 L1052.6,685.0 L1053.0,660.5 L1053.6,660.5 L1054.0,690.7 L1054.6,690.7 L1055.0,687.3 L1055.6,687.3 L1056.0,691.2 L1056.6,691.2 L1057.0,691.3 L1057.6,691.3 L1058.0,671.1 L1058.6,671.1 L1059.0,687.5 L1059.6,687.5 L1060.0,690.6 L1060.6,690.6 L1061.0,689.3 L1061.6,689.3 L1062.0,685.9 L1062.6,685.9 L1063.0,687.3 L1063.6,687.3 L1064.0,686.9 L1064.6,686.9 L1065.0,685.8 L1065.6,685.8 L1066.0,660.8 L1066.6,660.8 L1067.0,685.3 L1067.6,685.3 L1068.0,654.2 L1068.6,654.2 L1069.0,655.8 L1069.6,655.8 L1070.0,689.8 L1070.6,689.8 L1071.0,663.2 L1071.6,663.2 L1072.0,665.0 L1072.6,665.0 L1073.0,667.9 L1073.6,667.9 L1074.0,684.1 L1074.6,684.1 L1075.0,660.9 L1075.6,660.9 L1076.0,678.2 L1076.6,678.2 L1077.0,642.9 L1077.6,642.9 L1078.0,664.4 L1078.6,664.4 L1079.0,686.1 L1079.6,686.1 L1080.0,673.3 L1080.6,673.3 L1081.0,650.4 L1081.6,650.4 L1082.0,692.1 L1082.6,692.1 L1083.0,680.0 L1083.6,680.0 L1084.0,689.0 L1084.6,689.0 L1085.0,691.2 L1085.6,691.2 L1086.0,683.1 L1086.6,683.1 L1087.0,664.7 L1087.6,664.7 L1088.0,687.5 L1088.6,687.5 L1089.0,661.3 L1089.6,661.3 L1090.0,681.2 L1090.6,681.2 L1091.0,644.3 L1091.6,644.3 L1092.0,687.8 L1092.6,687.8 L1093.0,691.7 L1093.6,691.7 L1094.0,664.4 L1094.6,664.4 L1095.0,684.4 L1095.6,684.4 L1096.0,686.6 L1096.6,686.6 L1097.0,672.3 L1097.6,672.3 L1098.0,687.2 L1098.6,687.2 L1099.0,687.6 L1099.6,687.6 L1100.0,661.2 L1100.6,661.2 L1101.0,654.8 L1101.6,654.8 L1102.0,663.6 L1102.6,663.6 L1103.0,650.2 L1103.6,650.2 L1104.0,692.1 L1104.6,692.1 L1105.0,659.4 L1105.6,659.4 L1106.0,676.2 L1106.6,676.2 L1107.0,672.4 L1107.6,672.4 L1108.0,648.3 L1108.6,648.3 L1109.0,690.1 L1109.6,690.1 L1110.0,692.0 L1110.6,692.0 L1111.0,678.6 L1111.6,678.6 L1112.0,676.9 L1112.6,676.9 L1113.0,663.6 L1113.6,663.6 L1114.0,638.8 L1114.6,638.8 L1115.0,681.4 L1115.6,681.4 L1116.0,681.6 L1116.6,681.6 L1117.0,655.6 L1117.6,655.6 L1118.0,679.8 L1118.6,679.8 L1119.0,660.1 L1119.6,660.1 L1120.0,690.2 L1120.6,690.2 L1121.0,686.5 L1121.6,686.5 L1122.0,664.1 L1122.6,664.1 L1123.0,666.5 L1123.6,666.5 L1124.0,687.0 L1124.6,687.0 L1125.0,734.3 L1125.6,734.3 L1126.0,734.7 L1126.6,734.7 L1127.0,733.3 L1127.6,733.3 L1128.0,729.6 L1128.6,729.6 L1129.0,738.0 L1129.6,738.0 L1130.0,743.1 L1130.6,743.1 L1131.0,747.6 L1131.6,747.6 L1132.0,743.9 L1132.6,743.9 L1133.0,746.3 L1133.6,746.3 L1134.0,747.8 L1134.6,747.8 L1135.0,746.5 L1135.6,746.5 L1136.0,732.0 L1136.6,732.0 L1137.0,738.5 L1137.6,738.5 L1138.0,735.8 L1138.6,735.8 L1139.0,751.4 L1139.6,751.4 L1140.0,760.3 L1140.6,760.3 L1141.0,740.9 L1141.6,740.9 L1142.0,739.1 L1142.6,739.1 L1143.0,743.5 L1143.6,743.5 L1144.0,740.2 L1144.6,740.2 L1145.0,671.9 L1145.6,671.9 L1146.0,677.0 L1146.6,677.0 L1147.0,720.5 L1147.6,720.5 L1148.0,731.9 L1148.6,731.9 L1149.0,689.1 L1149.6,689.1 L1150.0,708.6 L1150.6,708.6 L1151.0,734.4 L1151.6,734.4 L1152.0,720.6 L1152.6,720.6 L1153.0,720.0 L1153.6,720.0 L1154.0,704.4 L1154.6,704.4 L1155.0,699.7 L1155.6,699.7 L1156.0,727.6 L1156.6,727.6 L1157.0,727.9 L1157.6,727.9 L1158.0,715.9 L1158.6,715.9 L1159.0,727.8 L1159.6,727.8 L1160.0,676.0 L1160.6,676.0 L1161.0,673.8 L1161.6,673.8 L1162.0,674.4 L1162.6,674.4 L1163.0,679.7 L1163.6,679.7 L1164.0,685.3 L1164.6,685.3 L1165.0,684.2 L1165.6,684.2 L1166.0,674.0 L1166.6,674.0 L1167.0,661.6 L1167.6,661.6 L1168.0,730.6 L1168.6,730.6 L1169.0,681.0 L1169.6,681.0 L1170.0,667.1 L1170.6,667.1 L1171.0,671.1 L1171.6,671.1 L1172.0,698.7 L1172.6,698.7 L1173.0,677.1 L1173.6,677.1 L1174.0,676.2 L1174.6,676.2 L1175.0,671.2 L1175.6,671.2 L1176.0,670.1 L1176.6,670.1 L1177.0,706.4 L1177.6,706.4 L1178.0,698.9 L1178.6,698.9 L1179.0,698.7 L1179.6,698.7 L1180.0,668.4 L1180.6,668.4 L1181.0,692.4 L1181.6,692.4 L1182.0,663.4 L1182.6,663.4 L1183.0,662.4 L1183.6,662.4 L1184.0,723.7 L1184.6,723.7 L1185.0,661.4 L1185.6,661.4 L1186.0,670.5 L1186.6,670.5 L1187.0,673.8 L1187.6,673.8 L1188.0,725.5 L1188.6,725.5 L1189.0,659.4 L1189.6,659.4 L1190.0,648.5 L1190.6,648.5 L1191.0,713.3 L1191.6,713.3 L1192.0,713.4 L1192.6,713.4 L1193.0,673.3 L1193.6,673.3 L1194.0,731.2 L1194.6,731.2 L1195.0,670.3 L1195.6,670.3 L1196.0,674.7 L1196.6,674.7 L1197.0,731.4 L1197.6,731.4 L1198.0,710.6 L1198.6,710.6 L1199.0,677.8 L1199.6,677.8 L1200.0,675.3 L1200.6,675.3 L1201.0,719.6 L1201.6,719.6 L1202.0,726.3 L1202.6,726.3 L1203.0,676.8 L1203.6,676.8 L1204.0,723.3 L1204.6,723.3 L1205.0,688.6 L1205.6,688.6 L1206.0,732.0 L1206.6,732.0 L1207.0,709.7 L1207.6,709.7 L1208.0,722.0 L1208.6,722.0 L1209.0,721.6 L1209.6,721.6 L1210.0,700.3 L1210.6,700.3 L1211.0,693.2 L1211.6,693.2 L1212.0,754.3 L1212.6,754.3 L1213.0,697.6 L1213.6,697.6 L1214.0,694.9 L1214.6,694.9 L1215.0,712.6 L1215.6,712.6 L1216.0,714.0 L1216.6,714.0 L1217.0,693.4 L1217.6,693.4 L1218.0,673.8 L1218.6,673.8 L1219.0,668.6 L1219.6,668.6 L1220.0,696.3 L1220.6,696.3 L1221.0,680.8 L1221.6,680.8 L1222.0,679.8 L1222.6,679.8 L1223.0,694.9 L1223.6,694.9 L1224.0,675.4 L1224.6,675.4 L1225.0,673.4 L1225.6,673.4 L1226.0,693.3 L1226.6,693.3 L1227.0,663.1 L1227.6,663.1 L1228.0,672.6 L1228.6,672.6 L1229.0,676.7 L1229.6,676.7 L1230.0,718.6 L1230.6,718.6 L1231.0,690.6 L1231.6,690.6 L1232.0,730.7 L1232.6,730.7 L1233.0,739.5 L1233.6,739.5 L1234.0,704.9 L1234.6,704.9 L1235.0,724.0 L1235.6,724.0 L1236.0,725.0 L1236.6,725.0 L1237.0,668.6 L1237.6,668.6 L1238.0,728.5 L1238.6,728.5 L1239.0,703.6 L1239.6,703.6 L1240.0,734.7 L1240.6,734.7 L1241.0,711.1 L1241.6,711.1 L1242.0,742.7 L1242.6,742.7 L1243.0,731.2 L1243.6,731.2 L1244.0,679.0 L1244.6,679.0 L1245.0,701.3 L1245.6,701.3 L1246.0,647.6 L1246.6,647.6 L1247.0,698.2 L1247.6,698.2 L1248.0,678.7 L1248.6,678.7 L1249.0,704.0 L1249.6,704.0 L1250.0,687.1 L1250.6,687.1 L1251.0,737.9 L1251.6,737.9 L1252.0,701.5 L1252.6,701.5 L1253.0,677.8 L1253.6,677.8 L1254.0,672.2 L1254.6,672.2 L1255.0,699.4 L1255.6,699.4 L1256.0,701.3 L1256.6,701.3 L1257.0,694.8 L1257.6,694.8 L1258.0,686.1 L1258.6,686.1 L1259.0,720.5 L1259.6,720.5 L1260.0,671.2 L1260.6,671.2 L1261.0,702.9 L1261.6,702.9 L1262.0,671.6 L1262.6,671.6 L1263.0,729.4 L1263.6,729.4 L1264.0,695.7 L1264.6,695.7 L1265.0,734.5 L1265.6,734.5 L1266.0,679.2 L1266.6,679.2 L1267.0,691.4 L1267.6,691.4 L1268.0,687.9 L1268.6,687.9 L1269.0,690.2 L1269.6,690.2 L1270.0,713.4 L1270.6,713.4 L1271.0,728.4 L1271.6,728.4 L1272.0,665.3 L1272.6,665.3 L1273.0,670.0 L1273.6,670.0 L1274.0,702.8 L1274.6,702.8 L1275.0,681.3 L1275.6,681.3 L1276.0,708.5 L1276.6,708.5 L1277.0,697.1 L1277.6,697.1 L1278.0,654.6 L1278.6,654.6 L1279.0,700.2 L1279.6,700.2 L1280.0,679.6 L1280.6,679.6 L1281.0,678.0 L1281.6,678.0 L1282.0,728.5 L1282.6,728.5 L1283.0,724.0 L1283.6,724.0 L1284.0,686.2 L1284.6,686.2 L1285.0,717.1 L1285.6,717.1 L1286.0,673.2 L1286.6,673.2 L1287.0,699.3 L1287.6,699.3 L1288.0,697.5 L1288.6,697.5 L1289.0,727.8 L1289.6,727.8 L1290.0,690.3 L1290.6,690.3 L1291.0,687.4 L1291.6,687.4 L1292.0,701.3 L1292.6,701.3 L1293.0,702.9 L1293.6,702.9 L1294.0,683.9 L1294.6,683.9 L1295.0,714.3 L1295.6,714.3 L1296.0,675.0 L1296.6,675.0 L1297.0,709.0 L1297.6,709.0 L1298.0,732.6 L1298.6,732.6 L1299.0,670.8 L1299.6,670.8 L1300.0,699.4 L1300.6,699.4 L1301.0,700.9 L1301.6,700.9 L1302.0,698.9 L1302.6,698.9 L1303.0,712.9 L1303.6,712.9 L1304.0,694.7 L1304.6,694.7 L1305.0,683.1 L1305.6,683.1 L1306.0,727.4 L1306.6,727.4 L1307.0,665.0 L1307.6,665.0 L1308.0,761.3 L1308.6,761.3 L1309.0,754.0 L1309.6,754.0 L1310.0,739.5 L1310.6,739.5 L1311.0,747.6 L1311.6,747.6 L1312.0,745.3 L1312.6,745.3 L1313.0,754.1 L1313.6,754.1 L1314.0,745.5 L1314.6,745.5 L1315.0,737.5 L1315.6,737.5 L1316.0,747.8 L1316.6,747.8 L1317.0,744.3 L1317.6,744.3 L1318.0,738.9 L1318.6,738.9 L1319.0,739.7 L1319.6,739.7 L1320.0,732.5 L1320.6,732.5 L1321.0,733.5 L1321.6,733.5 L1322.0,737.2 L1322.6,737.2 L1323.0,740.2 L1323.6,740.2 L1324.0,735.2 L1324.6,735.2 L1325.0,740.1 L1325.6,740.1 L1326.0,747.2 L1326.6,747.2 L1327.0,746.5 L1327.6,746.5 L1328.0,739.9 L1328.6,739.9 L1329.0,734.8 L1329.6,734.8 L1330.0,736.8 L1330.6,736.8 L1331.0,733.4 L1331.6,733.4 L1332.0,727.9 L1332.6,727.9 L1333.0,725.6 L1333.6,725.6 L1334.0,734.8 L1334.6,734.8 L1335.0,728.4 L1335.6,728.4 L1336.0,725.0 L1336.6,725.0 L1337.0,723.4 L1337.6,723.4 L1338.0,723.1 L1338.6,723.1 L1339.0,728.7 L1339.6,728.7 L1340.0,730.6 L1340.6,730.6 L1341.0,738.9 L1341.6,738.9 L1342.0,741.2 L1342.6,741.2 L1343.0,745.8 L1343.6,745.8 L1344.0,747.3 L1344.6,747.3 L1345.0,750.9 L1345.6,750.9 L1346.0,751.9 L1346.6,751.9 L1347.0,745.9 L1347.6,745.9 L1348.0,754.3 L1348.6,754.3 L1349.0,751.4 L1349.6,751.4 L1350.0,747.3 L1350.6,747.3 L1351.0,755.1 L1351.6,755.1 L1352.0,740.0 L1352.6,740.0 L1353.0,678.5 L1353.6,678.5 L1354.0,738.5 L1354.6,738.5 L1355.0,682.0 L1355.6,682.0 L1356.0,745.4 L1356.6,745.4 L1357.0,736.9 L1357.6,736.9 L1358.0,687.0 L1358.6,687.0 L1359.0,702.1 L1359.6,702.1 L1360.0,680.4 L1360.6,680.4 L1361.0,714.2 L1361.6,714.2 L1362.0,683.3 L1362.6,683.3 L1363.0,679.5 L1363.6,679.5 L1364.0,669.6 L1364.6,669.6 L1365.0,673.8 L1365.6,673.8 L1366.0,678.3 L1366.6,678.3 L1367.0,678.4 L1367.6,678.4 L1368.0,684.6 L1368.6,684.6 L1369.0,733.7 L1369.6,733.7 L1370.0,736.4 L1370.6,736.4 L1371.0,741.6 L1371.6,741.6 L1372.0,691.6 L1372.6,691.6 L1373.0,741.2 L1373.6,741.2 L1374.0,684.2 L1374.6,684.2 L1375.0,716.5 L1375.6,716.5 L1376.0,709.1 L1376.6,709.1 L1377.0,671.5 L1377.6,671.5 L1378.0,715.1 L1378.6,715.1 L1379.0,709.3 L1379.6,709.3 L1380.0,735.1 L1380.6,735.1 L1381.0,728.7 L1381.6,728.7 L1382.0,704.1 L1382.6,704.1 L1383.0,698.3 L1383.6,698.3 L1384.0,686.2 L1384.6,686.2 L1385.0,733.8 L1385.6,733.8 L1386.0,732.6 L1386.6,732.6 L1387.0,675.5 L1387.6,675.5 L1388.0,676.9 L1388.6,676.9 L1389.0,673.5 L1389.6,673.5 L1390.0,685.7 L1390.6,685.7 L1391.0,674.3 L1391.6,674.3 L1392.0,729.8 L1392.6,729.8 L1393.0,679.7 L1393.6,679.7 L1394.0,723.8 L1394.6,723.8 L1395.0,667.0 L1395.6,667.0 L1396.0,666.0 L1396.6,666.0 L1397.0,671.4 L1397.6,671.4 L1398.0,682.4 L1398.6,682.4 L1399.0,707.4 L1399.6,707.4 L1400.0,686.8 L1400.6,686.8 L1401.0,703.3 L1401.6,703.3 L1402.0,706.1 L1402.6,706.1 L1403.0,668.1 L1403.6,668.1 L1404.0,678.1 L1404.6,678.1 L1405.0,742.8 L1405.6,742.8 L1406.0,686.3 L1406.6,686.3 L1407.0,705.7 L1407.6,705.7 L1408.0,675.0 L1408.6,675.0 L1409.0,715.9 L1409.6,715.9 L1410.0,675.2 L1410.6,675.2 L1411.0,684.9 L1411.6,684.9 L1412.0,702.4 L1412.6,702.4 L1413.0,723.8 L1413.6,723.8 L1414.0,718.6 L1414.6,718.6 L1415.0,675.4 L1415.6,675.4 L1416.0,721.3 L1416.6,721.3 L1417.0,734.2 L1417.6,734.2 L1418.0,688.1 L1418.6,688.1 L1419.0,686.4 L1419.6,686.4 L1420.0,686.9 L1420.6,686.9 L1421.0,714.0 L1421.6,714.0 L1422.0,715.3 L1422.6,715.3 L1423.0,686.2 L1423.6,686.2 L1424.0,738.9 L1424.6,738.9 L1425.0,713.0 L1425.6,713.0 L1426.0,684.8 L1426.6,684.8 L1427.0,681.0 L1427.6,681.0 L1428.0,717.6 L1428.6,717.6 L1429.0,701.9 L1429.6,701.9 L1430.0,717.7 L1430.6,717.7 L1431.0,714.3 L1431.6,714.3 L1432.0,676.0 L1432.6,676.0 L1433.0,672.4 L1433.6,672.4 L1434.0,724.1 L1434.6,724.1 L1435.0,730.8 L1435.6,730.8 L1436.0,692.7 L1436.6,692.7 L1437.0,739.0 L1437.6,739.0 L1438.0,687.0 L1438.6,687.0 L1439.0,690.0 L1439.6,690.0 L1440.0,681.6 L1440.6,681.6 L1441.0,724.7 L1441.6,724.7 L1442.0,667.4 L1442.6,667.4 L1443.0,676.1 L1443.6,676.1 L1444.0,674.2 L1444.6,674.2 L1445.0,733.8 L1445.6,733.8 L1446.0,708.7 L1446.6,708.7 L1447.0,673.2 L1447.6,673.2 L1448.0,677.2 L1448.6,677.2 L1449.0,689.6 L1449.6,689.6 L1450.0,732.2 L1450.6,732.2 L1451.0,737.3 L1451.6,737.3 L1452.0,724.3 L1452.6,724.3 L1453.0,728.2 L1453.6,728.2 L1454.0,732.4 L1454.6,732.4 L1455.0,736.9 L1455.6,736.9 L1456.0,741.6 L1456.6,741.6 L1457.0,746.7 L1457.6,746.7 L1458.0,752.3 L1458.6,752.3 L1459.0,758.5 L1459.6,758.5 L1460.0,765.8 L1460.6,765.8 L1461.0,775.1 L1461.6,775.1 L1462.0,795.0 L1462.6,795.0 L1463.0,795.0 L1463.6,795.0 L1463.6,795.0 L1463.0,795.0 L1462.6,795.0 L1462.0,795.0 L1461.6,814.9 L1461.0,814.9 L1460.6,824.2 L1460.0,824.2 L1459.6,831.5 L1459.0,831.5 L1458.6,837.7 L1458.0,837.7 L1457.6,843.3 L1457.0,843.3 L1456.6,848.4 L1456.0,848.4 L1455.6,853.1 L1455.0,853.1 L1454.6,857.6 L1454.0,857.6 L1453.6,861.8 L1453.0,861.8 L1452.6,865.7 L1452.0,865.7 L1451.6,877.8 L1451.0,877.8 L1450.6,889.0 L1450.0,889.0 L1449.6,879.8 L1449.0,879.8 L1448.6,909.6 L1448.0,909.6 L1447.6,916.3 L1447.0,916.3 L1446.6,905.8 L1446.0,905.8 L1445.6,907.3 L1445.0,907.3 L1444.6,903.4 L1444.0,903.4 L1443.6,878.5 L1443.0,878.5 L1442.6,914.2 L1442.0,914.2 L1441.6,910.4 L1441.0,910.4 L1440.6,880.1 L1440.0,880.1 L1439.6,891.8 L1439.0,891.8 L1438.6,931.6 L1438.0,931.6 L1437.6,886.8 L1437.0,886.8 L1436.6,931.8 L1436.0,931.8 L1435.6,861.5 L1435.0,861.5 L1434.6,902.7 L1434.0,902.7 L1433.6,887.3 L1433.0,887.3 L1432.6,918.2 L1432.0,918.2 L1431.6,863.0 L1431.0,863.0 L1430.6,903.5 L1430.0,903.5 L1429.6,869.3 L1429.0,869.3 L1428.6,924.1 L1428.0,924.1 L1427.6,923.8 L1427.0,923.8 L1426.6,907.3 L1426.0,907.3 L1425.6,841.3 L1425.0,841.3 L1424.6,845.4 L1424.0,845.4 L1423.6,886.4 L1423.0,886.4 L1422.6,861.4 L1422.0,861.4 L1421.6,905.4 L1421.0,905.4 L1420.6,907.0 L1420.0,907.0 L1419.6,891.6 L1419.0,891.6 L1418.6,899.8 L1418.0,899.8 L1417.6,889.9 L1417.0,889.9 L1416.6,891.2 L1416.0,891.2 L1415.6,860.7 L1415.0,860.7 L1414.6,857.9 L1414.0,857.9 L1413.6,875.5 L1413.0,875.5 L1412.6,896.9 L1412.0,896.9 L1411.6,882.4 L1411.0,882.4 L1410.6,871.4 L1410.0,871.4 L1409.6,903.6 L1409.0,903.6 L1408.6,871.2 L1408.0,871.2 L1407.6,884.3 L1407.0,884.3 L1406.6,932.5 L1406.0,932.5 L1405.6,881.4 L1405.0,881.4 L1404.6,916.0 L1404.0,916.0 L1403.6,852.7 L1403.0,852.7 L1402.6,897.5 L1402.0,897.5 L1401.6,911.1 L1401.0,911.1 L1400.6,876.6 L1400.0,876.6 L1399.6,859.5 L1399.0,859.5 L1398.6,920.2 L1398.0,920.2 L1397.6,907.7 L1397.0,907.7 L1396.6,868.4 L1396.0,868.4 L1395.6,864.8 L1395.0,864.8 L1394.6,874.8 L1394.0,874.8 L1393.6,889.7 L1393.0,889.7 L1392.6,898.8 L1392.0,898.8 L1391.6,890.9 L1391.0,890.9 L1390.6,896.5 L1390.0,896.5 L1389.6,906.3 L1389.0,906.3 L1388.6,900.4 L1388.0,900.4 L1387.6,861.1 L1387.0,861.1 L1386.6,875.9 L1386.0,875.9 L1385.6,879.8 L1385.0,879.8 L1384.6,894.8 L1384.0,894.8 L1383.6,889.7 L1383.0,889.7 L1382.6,856.5 L1382.0,856.5 L1381.6,877.4 L1381.0,877.4 L1380.6,892.5 L1380.0,892.5 L1379.6,854.3 L1379.0,854.3 L1378.6,879.8 L1378.0,879.8 L1377.6,854.0 L1377.0,854.0 L1376.6,896.7 L1376.0,896.7 L1375.6,849.1 L1375.0,849.1 L1374.6,908.7 L1374.0,908.7 L1373.6,903.0 L1373.0,903.0 L1372.6,908.6 L1372.0,908.6 L1371.6,879.4 L1371.0,879.4 L1370.6,893.8 L1370.0,893.8 L1369.6,860.2 L1369.0,860.2 L1368.6,901.5 L1368.0,901.5 L1367.6,907.5 L1367.0,907.5 L1366.6,869.5 L1366.0,869.5 L1365.6,915.1 L1365.0,915.1 L1364.6,865.5 L1364.0,865.5 L1363.6,933.1 L1363.0,933.1 L1362.6,931.8 L1362.0,931.8 L1361.6,936.7 L1361.0,936.7 L1360.6,899.6 L1360.0,899.6 L1359.6,897.1 L1359.0,897.1 L1358.6,933.0 L1358.0,933.0 L1357.6,935.2 L1357.0,935.2 L1356.6,921.8 L1356.0,921.8 L1355.6,901.4 L1355.0,901.4 L1354.6,895.7 L1354.0,895.7 L1353.6,924.9 L1353.0,924.9 L1352.6,848.3 L1352.0,848.3 L1351.6,858.2 L1351.0,858.2 L1350.6,856.5 L1350.0,856.5 L1349.6,858.4 L1349.0,858.4 L1348.6,852.9 L1348.0,852.9 L1347.6,859.5 L1347.0,859.5 L1346.6,869.8 L1346.0,869.8 L1345.6,872.2 L1345.0,872.2 L1344.6,865.0 L1344.0,865.0 L1343.6,869.1 L1343.0,869.1 L1342.6,853.0 L1342.0,853.0 L1341.6,854.0 L1341.0,854.0 L1340.6,850.5 L1340.0,850.5 L1339.6,837.6 L1339.0,837.6 L1338.6,835.3 L1338.0,835.3 L1337.6,829.8 L1337.0,829.8 L1336.6,826.1 L1336.0,826.1 L1335.6,827.6 L1335.0,827.6 L1334.6,823.3 L1334.0,823.3 L1333.6,826.0 L1333.0,826.0 L1332.6,837.4 L1332.0,837.4 L1331.6,832.7 L1331.0,832.7 L1330.6,834.1 L1330.0,834.1 L1329.6,839.4 L1329.0,839.4 L1328.6,841.3 L1328.0,841.3 L1327.6,837.3 L1327.0,837.3 L1326.6,832.9 L1326.0,832.9 L1325.6,830.3 L1325.0,830.3 L1324.6,835.1 L1324.0,835.1 L1323.6,836.6 L1323.0,836.6 L1322.6,837.1 L1322.0,837.1 L1321.6,838.0 L1321.0,838.0 L1320.6,865.7 L1320.0,865.7 L1319.6,866.4 L1319.0,866.4 L1318.6,853.3 L1318.0,853.3 L1317.6,850.2 L1317.0,850.2 L1316.6,846.1 L1316.0,846.1 L1315.6,839.2 L1315.0,839.2 L1314.6,831.7 L1314.0,831.7 L1313.6,822.7 L1313.0,822.7 L1312.6,824.9 L1312.0,824.9 L1311.6,840.1 L1311.0,840.1 L1310.6,840.8 L1310.0,840.8 L1309.6,838.5 L1309.0,838.5 L1308.6,853.4 L1308.0,853.4 L1307.6,914.6 L1307.0,914.6 L1306.6,912.2 L1306.0,912.2 L1305.6,897.2 L1305.0,897.2 L1304.6,848.0 L1304.0,848.0 L1303.6,899.6 L1303.0,899.6 L1302.6,902.6 L1302.0,902.6 L1301.6,888.0 L1301.0,888.0 L1300.6,865.0 L1300.0,865.0 L1299.6,899.2 L1299.0,899.2 L1298.6,909.9 L1298.0,909.9 L1297.6,873.2 L1297.0,873.2 L1296.6,870.1 L1296.0,870.1 L1295.6,881.8 L1295.0,881.8 L1294.6,913.5 L1294.0,913.5 L1293.6,915.1 L1293.0,915.1 L1292.6,910.8 L1292.0,910.8 L1291.6,913.8 L1291.0,913.8 L1290.6,914.9 L1290.0,914.9 L1289.6,905.9 L1289.0,905.9 L1288.6,890.8 L1288.0,890.8 L1287.6,894.3 L1287.0,894.3 L1286.6,881.3 L1286.0,881.3 L1285.6,918.3 L1285.0,918.3 L1284.6,867.0 L1284.0,867.0 L1283.6,870.1 L1283.0,870.1 L1282.6,913.5 L1282.0,913.5 L1281.6,864.5 L1281.0,864.5 L1280.6,912.5 L1280.0,912.5 L1279.6,923.6 L1279.0,923.6 L1278.6,903.6 L1278.0,903.6 L1277.6,907.8 L1277.0,907.8 L1276.6,861.8 L1276.0,861.8 L1275.6,904.7 L1275.0,904.7 L1274.6,869.8 L1274.0,869.8 L1273.6,914.5 L1273.0,914.5 L1272.6,917.6 L1272.0,917.6 L1271.6,881.4 L1271.0,881.4 L1270.6,876.8 L1270.0,876.8 L1269.6,884.5 L1269.0,884.5 L1268.6,885.9 L1268.0,885.9 L1267.6,868.8 L1267.0,868.8 L1266.6,923.9 L1266.0,923.9 L1265.6,863.8 L1265.0,863.8 L1264.6,869.3 L1264.0,869.3 L1263.6,897.1 L1263.0,897.1 L1262.6,894.7 L1262.0,894.7 L1261.6,902.9 L1261.0,902.9 L1260.6,873.0 L1260.0,873.0 L1259.6,909.7 L1259.0,909.7 L1258.6,890.9 L1258.0,890.9 L1257.6,891.4 L1257.0,891.4 L1256.6,916.9 L1256.0,916.9 L1255.6,865.0 L1255.0,865.0 L1254.6,876.8 L1254.0,876.8 L1253.6,906.7 L1253.0,906.7 L1252.6,897.1 L1252.0,897.1 L1251.6,904.3 L1251.0,904.3 L1250.6,897.4 L1250.0,897.4 L1249.6,904.6 L1249.0,904.6 L1248.6,904.6 L1248.0,904.6 L1247.6,911.9 L1247.0,911.9 L1246.6,863.2 L1246.0,863.2 L1245.6,869.2 L1245.0,869.2 L1244.6,940.3 L1244.0,940.3 L1243.6,884.4 L1243.0,884.4 L1242.6,938.1 L1242.0,938.1 L1241.6,925.1 L1241.0,925.1 L1240.6,916.6 L1240.0,916.6 L1239.6,907.8 L1239.0,907.8 L1238.6,895.1 L1238.0,895.1 L1237.6,931.5 L1237.0,931.5 L1236.6,932.8 L1236.0,932.8 L1235.6,935.3 L1235.0,935.3 L1234.6,875.0 L1234.0,875.0 L1233.6,860.8 L1233.0,860.8 L1232.6,890.2 L1232.0,890.2 L1231.6,865.3 L1231.0,865.3 L1230.6,908.9 L1230.0,908.9 L1229.6,913.0 L1229.0,913.0 L1228.6,872.3 L1228.0,872.3 L1227.6,873.7 L1227.0,873.7 L1226.6,870.5 L1226.0,870.5 L1225.6,868.7 L1225.0,868.7 L1224.6,887.3 L1224.0,887.3 L1223.6,881.5 L1223.0,881.5 L1222.6,913.8 L1222.0,913.8 L1221.6,866.5 L1221.0,866.5 L1220.6,895.0 L1220.0,895.0 L1219.6,903.9 L1219.0,903.9 L1218.6,877.0 L1218.0,877.0 L1217.6,917.3 L1217.0,917.3 L1216.6,914.5 L1216.0,914.5 L1215.6,911.6 L1215.0,911.6 L1214.6,860.5 L1214.0,860.5 L1213.6,874.0 L1213.0,874.0 L1212.6,853.9 L1212.0,853.9 L1211.6,867.4 L1211.0,867.4 L1210.6,852.0 L1210.0,852.0 L1209.6,891.3 L1209.0,891.3 L1208.6,900.1 L1208.0,900.1 L1207.6,876.6 L1207.0,876.6 L1206.6,852.5 L1206.0,852.5 L1205.6,909.3 L1205.0,909.3 L1204.6,870.2 L1204.0,870.2 L1203.6,851.3 L1203.0,851.3 L1202.6,896.0 L1202.0,896.0 L1201.6,880.2 L1201.0,880.2 L1200.6,916.2 L1200.0,916.2 L1199.6,907.5 L1199.0,907.5 L1198.6,906.7 L1198.0,906.7 L1197.6,899.1 L1197.0,899.1 L1196.6,897.8 L1196.0,897.8 L1195.6,894.0 L1195.0,894.0 L1194.6,903.5 L1194.0,903.5 L1193.6,913.5 L1193.0,913.5 L1192.6,874.0 L1192.0,874.0 L1191.6,878.9 L1191.0,878.9 L1190.6,914.7 L1190.0,914.7 L1189.6,914.6 L1189.0,914.6 L1188.6,904.5 L1188.0,904.5 L1187.6,862.2 L1187.0,862.2 L1186.6,854.5 L1186.0,854.5 L1185.6,900.3 L1185.0,900.3 L1184.6,872.2 L1184.0,872.2 L1183.6,882.0 L1183.0,882.0 L1182.6,865.6 L1182.0,865.6 L1181.6,887.5 L1181.0,887.5 L1180.6,861.8 L1180.0,861.8 L1179.6,874.4 L1179.0,874.4 L1178.6,857.6 L1178.0,857.6 L1177.6,900.8 L1177.0,900.8 L1176.6,898.1 L1176.0,898.1 L1175.6,896.2 L1175.0,896.2 L1174.6,872.2 L1174.0,872.2 L1173.6,922.3 L1173.0,922.3 L1172.6,926.5 L1172.0,926.5 L1171.6,902.2 L1171.0,902.2 L1170.6,913.7 L1170.0,913.7 L1169.6,859.3 L1169.0,859.3 L1168.6,915.0 L1168.0,915.0 L1167.6,868.1 L1167.0,868.1 L1166.6,851.3 L1166.0,851.3 L1165.6,878.3 L1165.0,878.3 L1164.6,852.3 L1164.0,852.3 L1163.6,860.4 L1163.0,860.4 L1162.6,927.1 L1162.0,927.1 L1161.6,892.3 L1161.0,892.3 L1160.6,870.8 L1160.0,870.8 L1159.6,903.0 L1159.0,903.0 L1158.6,898.0 L1158.0,898.0 L1157.6,872.4 L1157.0,872.4 L1156.6,902.2 L1156.0,902.2 L1155.6,901.7 L1155.0,901.7 L1154.6,870.8 L1154.0,870.8 L1153.6,909.6 L1153.0,909.6 L1152.6,897.5 L1152.0,897.5 L1151.6,896.3 L1151.0,896.3 L1150.6,851.3 L1150.0,851.3 L1149.6,850.0 L1149.0,850.0 L1148.6,859.3 L1148.0,859.3 L1147.6,905.1 L1147.0,905.1 L1146.6,922.8 L1146.0,922.8 L1145.6,926.5 L1145.0,926.5 L1144.6,835.4 L1144.0,835.4 L1143.6,845.7 L1143.0,845.7 L1142.6,849.5 L1142.0,849.5 L1141.6,837.7 L1141.0,837.7 L1140.6,830.1 L1140.0,830.1 L1139.6,812.5 L1139.0,812.5 L1138.6,814.6 L1138.0,814.6 L1137.6,830.9 L1137.0,830.9 L1136.6,825.7 L1136.0,825.7 L1135.6,828.4 L1135.0,828.4 L1134.6,841.5 L1134.0,841.5 L1133.6,841.1 L1133.0,841.1 L1132.6,857.9 L1132.0,857.9 L1131.6,852.2 L1131.0,852.2 L1130.6,852.3 L1130.0,852.3 L1129.6,854.5 L1129.0,854.5 L1128.6,836.2 L1128.0,836.2 L1127.6,842.1 L1127.0,842.1 L1126.6,839.4 L1126.0,839.4 L1125.6,836.7 L1125.0,836.7 L1124.6,951.2 L1124.0,951.2 L1123.6,918.5 L1123.0,918.5 L1122.6,907.2 L1122.0,907.2 L1121.6,951.2 L1121.0,951.2 L1120.6,915.6 L1120.0,915.6 L1119.6,901.4 L1119.0,901.4 L1118.6,904.0 L1118.0,904.0 L1117.6,898.3 L1117.0,898.3 L1116.6,919.8 L1116.0,919.8 L1115.6,915.6 L1115.0,915.6 L1114.6,900.2 L1114.0,900.2 L1113.6,899.8 L1113.0,899.8 L1112.6,899.6 L1112.0,899.6 L1111.6,900.5 L1111.0,900.5 L1110.6,924.7 L1110.0,924.7 L1109.6,903.2 L1109.0,903.2 L1108.6,910.0 L1108.0,910.0 L1107.6,904.9 L1107.0,904.9 L1106.6,939.8 L1106.0,939.8 L1105.6,946.3 L1105.0,946.3 L1104.6,908.2 L1104.0,908.2 L1103.6,922.3 L1103.0,922.3 L1102.6,940.4 L1102.0,940.4 L1101.6,904.3 L1101.0,904.3 L1100.6,902.9 L1100.0,902.9 L1099.6,910.5 L1099.0,910.5 L1098.6,919.4 L1098.0,919.4 L1097.6,898.0 L1097.0,898.0 L1096.6,931.5 L1096.0,931.5 L1095.6,903.8 L1095.0,903.8 L1094.6,935.3 L1094.0,935.3 L1093.6,921.2 L1093.0,921.2 L1092.6,936.9 L1092.0,936.9 L1091.6,939.2 L1091.0,939.2 L1090.6,899.6 L1090.0,899.6 L1089.6,901.8 L1089.0,901.8 L1088.6,899.2 L1088.0,899.2 L1087.6,906.9 L1087.0,906.9 L1086.6,950.4 L1086.0,950.4 L1085.6,945.1 L1085.0,945.1 L1084.6,903.1 L1084.0,903.1 L1083.6,909.9 L1083.0,909.9 L1082.6,937.8 L1082.0,937.8 L1081.6,915.9 L1081.0,915.9 L1080.6,901.0 L1080.0,901.0 L1079.6,940.1 L1079.0,940.1 L1078.6,903.7 L1078.0,903.7 L1077.6,897.6 L1077.0,897.6 L1076.6,897.9 L1076.0,897.9 L1075.6,897.8 L1075.0,897.8 L1074.6,910.2 L1074.0,910.2 L1073.6,901.8 L1073.0,901.8 L1072.6,919.7 L1072.0,919.7 L1071.6,913.3 L1071.0,913.3 L1070.6,951.2 L1070.0,951.2 L1069.6,941.2 L1069.0,941.2 L1068.6,906.8 L1068.0,906.8 L1067.6,937.8 L1067.0,937.8 L1066.6,902.4 L1066.0,902.4 L1065.6,904.6 L1065.0,904.6 L1064.6,904.2 L1064.0,904.2 L1063.6,923.4 L1063.0,923.4 L1062.6,901.9 L1062.0,901.9 L1061.6,911.2 L1061.0,911.2 L1060.6,927.2 L1060.0,927.2 L1059.6,903.1 L1059.0,903.1 L1058.6,906.4 L1058.0,906.4 L1057.6,923.6 L1057.0,923.6 L1056.6,904.9 L1056.0,904.9 L1055.6,902.9 L1055.0,902.9 L1054.6,902.4 L1054.0,902.4 L1053.6,914.7 L1053.0,914.7 L1052.6,901.9 L1052.0,901.9 L1051.6,935.0 L1051.0,935.0 L1050.6,951.2 L1050.0,951.2 L1049.6,922.9 L1049.0,922.9 L1048.6,935.3 L1048.0,935.3 L1047.6,948.6 L1047.0,948.6 L1046.6,904.6 L1046.0,904.6 L1045.6,897.5 L1045.0,897.5 L1044.6,899.0 L1044.0,899.0 L1043.6,930.4 L1043.0,930.4 L1042.6,902.0 L1042.0,902.0 L1041.6,925.3 L1041.0,925.3 L1040.6,901.9 L1040.0,901.9 L1039.6,942.7 L1039.0,942.7 L1038.6,909.5 L1038.0,909.5 L1037.6,899.0 L1037.0,899.0 L1036.6,951.2 L1036.0,951.2 L1035.6,905.6 L1035.0,905.6 L1034.6,922.0 L1034.0,922.0 L1033.6,902.9 L1033.0,902.9 L1032.6,930.3 L1032.0,930.3 L1031.6,903.3 L1031.0,903.3 L1030.6,907.5 L1030.0,907.5 L1029.6,939.3 L1029.0,939.3 L1028.6,951.2 L1028.0,951.2 L1027.6,903.4 L1027.0,903.4 L1026.6,908.2 L1026.0,908.2 L1025.6,901.6 L1025.0,901.6 L1024.6,911.6 L1024.0,911.6 L1023.6,904.3 L1023.0,904.3 L1022.6,900.2 L1022.0,900.2 L1021.6,899.2 L1021.0,899.2 L1020.6,926.8 L1020.0,926.8 L1019.6,898.7 L1019.0,898.7 L1018.6,938.0 L1018.0,938.0 L1017.6,900.7 L1017.0,900.7 L1016.6,901.2 L1016.0,901.2 L1015.6,902.6 L1015.0,902.6 L1014.6,918.1 L1014.0,918.1 L1013.6,900.0 L1013.0,900.0 L1012.6,911.5 L1012.0,911.5 L1011.6,904.0 L1011.0,904.0 L1010.6,939.5 L1010.0,939.5 L1009.6,901.9 L1009.0,901.9 L1008.6,902.2 L1008.0,902.2 L1007.6,901.0 L1007.0,901.0 L1006.6,939.8 L1006.0,939.8 L1005.6,915.0 L1005.0,915.0 L1004.6,912.6 L1004.0,912.6 L1003.6,946.8 L1003.0,946.8 L1002.6,916.6 L1002.0,916.6 L1001.6,948.7 L1001.0,948.7 L1000.6,905.4 L1000.0,905.4 L999.6,916.2 L999.0,916.2 L998.6,948.1 L998.0,948.1 L997.6,951.2 L997.0,951.2 L996.6,951.2 L996.0,951.2 L995.6,951.2 L995.0,951.2 L994.6,913.7 L994.0,913.7 L993.6,915.8 L993.0,915.8 L992.6,913.8 L992.0,913.8 L991.6,933.6 L991.0,933.6 L990.6,905.9 L990.0,905.9 L989.6,904.9 L989.0,904.9 L988.6,904.6 L988.0,904.6 L987.6,913.7 L987.0,913.7 L986.6,904.4 L986.0,904.4 L985.6,901.3 L985.0,901.3 L984.6,909.6 L984.0,909.6 L983.6,899.5 L983.0,899.5 L982.6,899.1 L982.0,899.1 L981.6,920.6 L981.0,920.6 L980.6,905.6 L980.0,905.6 L979.6,900.6 L979.0,900.6 L978.6,927.5 L978.0,927.5 L977.6,898.2 L977.0,898.2 L976.6,950.0 L976.0,950.0 L975.6,946.7 L975.0,946.7 L974.6,915.4 L974.0,915.4 L973.6,904.8 L973.0,904.8 L972.6,901.3 L972.0,901.3 L971.6,906.6 L971.0,906.6 L970.6,939.4 L970.0,939.4 L969.6,924.9 L969.0,924.9 L968.6,921.4 L968.0,921.4 L967.6,898.4 L967.0,898.4 L966.6,930.9 L966.0,930.9 L965.6,897.9 L965.0,897.9 L964.6,936.3 L964.0,936.3 L963.6,942.1 L963.0,942.1 L962.6,914.5 L962.0,914.5 L961.6,905.0 L961.0,905.0 L960.6,932.2 L960.0,932.2 L959.6,933.3 L959.0,933.3 L958.6,897.4 L958.0,897.4 L957.6,903.5 L957.0,903.5 L956.6,914.6 L956.0,914.6 L955.6,901.0 L955.0,901.0 L954.6,916.4 L954.0,916.4 L953.6,936.2 L953.0,936.2 L952.6,933.3 L952.0,933.3 L951.6,936.9 L951.0,936.9 L950.6,900.6 L950.0,900.6 L949.6,915.8 L949.0,915.8 L948.6,901.6 L948.0,901.6 L947.6,898.1 L947.0,898.1 L946.6,908.8 L946.0,908.8 L945.6,913.3 L945.0,913.3 L944.6,906.6 L944.0,906.6 L943.6,902.0 L943.0,902.0 L942.6,934.0 L942.0,934.0 L941.6,931.0 L941.0,931.0 L940.6,951.2 L940.0,951.2 L939.6,909.9 L939.0,909.9 L938.6,903.2 L938.0,903.2 L937.6,912.1 L937.0,912.1 L936.6,911.4 L936.0,911.4 L935.6,925.1 L935.0,925.1 L934.6,926.1 L934.0,926.1 L933.6,931.0 L933.0,931.0 L932.6,925.2 L932.0,925.2 L931.6,918.9 L931.0,918.9 L930.6,939.4 L930.0,939.4 L929.6,898.5 L929.0,898.5 L928.6,951.2 L928.0,951.2 L927.6,944.0 L927.0,944.0 L926.6,943.2 L926.0,943.2 L925.6,904.3 L925.0,904.3 L924.6,909.7 L924.0,909.7 L923.6,941.6 L923.0,941.6 L922.6,907.4 L922.0,907.4 L921.6,901.8 L921.0,901.8 L920.6,932.3 L920.0,932.3 L919.6,898.6 L919.0,898.6 L918.6,925.4 L918.0,925.4 L917.6,902.5 L917.0,902.5 L916.6,901.4 L916.0,901.4 L915.6,914.3 L915.0,914.3 L914.6,927.0 L914.0,927.0 L913.6,898.8 L913.0,898.8 L912.6,906.9 L912.0,906.9 L911.6,913.2 L911.0,913.2 L910.6,903.2 L910.0,903.2 L909.6,905.0 L909.0,905.0 L908.6,906.2 L908.0,906.2 L907.6,940.9 L907.0,940.9 L906.6,939.2 L906.0,939.2 L905.6,904.7 L905.0,904.7 L904.6,904.0 L904.0,904.0 L903.6,931.8 L903.0,931.8 L902.6,899.4 L902.0,899.4 L901.6,903.6 L901.0,903.6 L900.6,914.6 L900.0,914.6 L899.6,928.8 L899.0,928.8 L898.6,938.7 L898.0,938.7 L897.6,898.3 L897.0,898.3 L896.6,934.4 L896.0,934.4 L895.6,898.1 L895.0,898.1 L894.6,915.6 L894.0,915.6 L893.6,899.0 L893.0,899.0 L892.6,916.3 L892.0,916.3 L891.6,900.4 L891.0,900.4 L890.6,904.8 L890.0,904.8 L889.6,929.9 L889.0,929.9 L888.6,904.0 L888.0,904.0 L887.6,899.8 L887.0,899.8 L886.6,912.4 L886.0,912.4 L885.6,904.3 L885.0,904.3 L884.6,912.8 L884.0,912.8 L883.6,913.6 L883.0,913.6 L882.6,898.0 L882.0,898.0 L881.6,904.0 L881.0,904.0 L880.6,913.4 L880.0,913.4 L879.6,902.8 L879.0,902.8 L878.6,903.0 L878.0,903.0 L877.6,898.9 L877.0,898.9 L876.6,903.5 L876.0,903.5 L875.6,913.6 L875.0,913.6 L874.6,899.1 L874.0,899.1 L873.6,907.2 L873.0,907.2 L872.6,904.5 L872.0,904.5 L871.6,898.2 L871.0,898.2 L870.6,933.7 L870.0,933.7 L869.6,926.9 L869.0,926.9 L868.6,929.2 L868.0,929.2 L867.6,946.9 L867.0,946.9 L866.6,940.1 L866.0,940.1 L865.6,928.5 L865.0,928.5 L864.6,913.0 L864.0,913.0 L863.6,939.7 L863.0,939.7 L862.6,905.5 L862.0,905.5 L861.6,904.0 L861.0,904.0 L860.6,903.9 L860.0,903.9 L859.6,908.7 L859.0,908.7 L858.6,902.4 L858.0,902.4 L857.6,931.3 L857.0,931.3 L856.6,902.7 L856.0,902.7 L855.6,903.1 L855.0,903.1 L854.6,905.9 L854.0,905.9 L853.6,905.1 L853.0,905.1 L852.6,922.6 L852.0,922.6 L851.6,897.5 L851.0,897.5 L850.6,903.8 L850.0,903.8 L849.6,903.3 L849.0,903.3 L848.6,903.4 L848.0,903.4 L847.6,899.0 L847.0,899.0 L846.6,928.6 L846.0,928.6 L845.6,902.9 L845.0,902.9 L844.6,937.3 L844.0,937.3 L843.6,904.1 L843.0,904.1 L842.6,922.6 L842.0,922.6 L841.6,903.0 L841.0,903.0 L840.6,910.4 L840.0,910.4 L839.6,900.0 L839.0,900.0 L838.6,903.8 L838.0,903.8 L837.6,903.2 L837.0,903.2 L836.6,897.5 L836.0,897.5 L835.6,913.8 L835.0,913.8 L834.6,928.0 L834.0,928.0 L833.6,900.9 L833.0,900.9 L832.6,899.8 L832.0,899.8 L831.6,901.9 L831.0,901.9 L830.6,941.3 L830.0,941.3 L829.6,902.7 L829.0,902.7 L828.6,915.3 L828.0,915.3 L827.6,904.5 L827.0,904.5 L826.6,908.0 L826.0,908.0 L825.6,901.4 L825.0,901.4 L824.6,937.7 L824.0,937.7 L823.6,947.1 L823.0,947.1 L822.6,914.8 L822.0,914.8 L821.6,810.5 L821.0,810.5 L820.6,809.4 L820.0,809.4 L819.6,804.6 L819.0,804.6 L818.6,801.2 L818.0,801.2 L817.6,807.2 L817.0,807.2 L816.6,806.5 L816.0,806.5 L815.6,811.3 L815.0,811.3 L814.6,921.7 L814.0,921.7 L813.6,900.8 L813.0,900.8 L812.6,926.8 L812.0,926.8 L811.6,900.9 L811.0,900.9 L810.6,931.1 L810.0,931.1 L809.6,931.5 L809.0,931.5 L808.6,905.7 L808.0,905.7 L807.6,919.4 L807.0,919.4 L806.6,904.2 L806.0,904.2 L805.6,901.6 L805.0,901.6 L804.6,904.1 L804.0,904.1 L803.6,907.5 L803.0,907.5 L802.6,951.2 L802.0,951.2 L801.6,928.3 L801.0,928.3 L800.6,911.9 L800.0,911.9 L799.6,904.5 L799.0,904.5 L798.6,917.6 L798.0,917.6 L797.6,923.1 L797.0,923.1 L796.6,904.0 L796.0,904.0 L795.6,924.1 L795.0,924.1 L794.6,944.4 L794.0,944.4 L793.6,902.0 L793.0,902.0 L792.6,947.6 L792.0,947.6 L791.6,905.1 L791.0,905.1 L790.6,951.0 L790.0,951.0 L789.6,903.6 L789.0,903.6 L788.6,922.8 L788.0,922.8 L787.6,940.5 L787.0,940.5 L786.6,950.3 L786.0,950.3 L785.6,917.5 L785.0,917.5 L784.6,902.0 L784.0,902.0 L783.6,901.9 L783.0,901.9 L782.6,897.4 L782.0,897.4 L781.6,925.7 L781.0,925.7 L780.6,904.2 L780.0,904.2 L779.6,899.8 L779.0,899.8 L778.6,935.5 L778.0,935.5 L777.6,936.7 L777.0,936.7 L776.6,945.4 L776.0,945.4 L775.6,902.5 L775.0,902.5 L774.6,919.8 L774.0,919.8 L773.6,902.9 L773.0,902.9 L772.6,907.6 L772.0,907.6 L771.6,937.2 L771.0,937.2 L770.6,911.8 L770.0,911.8 L769.6,914.6 L769.0,914.6 L768.6,946.1 L768.0,946.1 L767.6,899.2 L767.0,899.2 L766.6,897.2 L766.0,897.2 L765.6,897.2 L765.0,897.2 L764.6,904.8 L764.0,904.8 L763.6,923.3 L763.0,923.3 L762.6,897.6 L762.0,897.6 L761.6,929.7 L761.0,929.7 L760.6,902.5 L760.0,902.5 L759.6,943.4 L759.0,943.4 L758.6,935.0 L758.0,935.0 L757.6,933.4 L757.0,933.4 L756.6,899.7 L756.0,899.7 L755.6,944.4 L755.0,944.4 L754.6,912.8 L754.0,912.8 L753.6,913.1 L753.0,913.1 L752.6,902.2 L752.0,902.2 L751.6,923.4 L751.0,923.4 L750.6,904.9 L750.0,904.9 L749.6,901.5 L749.0,901.5 L748.6,928.2 L748.0,928.2 L747.6,936.2 L747.0,936.2 L746.6,902.5 L746.0,902.5 L745.6,905.8 L745.0,905.8 L744.6,906.4 L744.0,906.4 L743.6,904.1 L743.0,904.1 L742.6,908.1 L742.0,908.1 L741.6,922.0 L741.0,922.0 L740.6,903.2 L740.0,903.2 L739.6,898.0 L739.0,898.0 L738.6,902.7 L738.0,902.7 L737.6,926.6 L737.0,926.6 L736.6,897.9 L736.0,897.9 L735.6,915.3 L735.0,915.3 L734.6,933.0 L734.0,933.0 L733.6,916.3 L733.0,916.3 L732.6,946.4 L732.0,946.4 L731.6,908.8 L731.0,908.8 L730.6,908.2 L730.0,908.2 L729.6,920.5 L729.0,920.5 L728.6,951.2 L728.0,951.2 L727.6,927.4 L727.0,927.4 L726.6,899.2 L726.0,899.2 L725.6,919.3 L725.0,919.3 L724.6,903.8 L724.0,903.8 L723.6,908.0 L723.0,908.0 L722.6,945.9 L722.0,945.9 L721.6,940.5 L721.0,940.5 L720.6,919.9 L720.0,919.9 L719.6,938.1 L719.0,938.1 L718.6,951.2 L718.0,951.2 L717.6,917.6 L717.0,917.6 L716.6,933.2 L716.0,933.2 L715.6,913.4 L715.0,913.4 L714.6,918.3 L714.0,918.3 L713.6,949.5 L713.0,949.5 L712.6,928.4 L712.0,928.4 L711.6,931.1 L711.0,931.1 L710.6,927.8 L710.0,927.8 L709.6,938.2 L709.0,938.2 L708.6,903.0 L708.0,903.0 L707.6,899.2 L707.0,899.2 L706.6,938.9 L706.0,938.9 L705.6,908.0 L705.0,908.0 L704.6,933.3 L704.0,933.3 L703.6,903.9 L703.0,903.9 L702.6,902.1 L702.0,902.1 L701.6,903.6 L701.0,903.6 L700.6,903.5 L700.0,903.5 L699.6,899.5 L699.0,899.5 L698.6,911.6 L698.0,911.6 L697.6,898.6 L697.0,898.6 L696.6,904.7 L696.0,904.7 L695.6,901.9 L695.0,901.9 L694.6,906.3 L694.0,906.3 L693.6,903.1 L693.0,903.1 L692.6,901.7 L692.0,901.7 L691.6,900.9 L691.0,900.9 L690.6,897.4 L690.0,897.4 L689.6,945.5 L689.0,945.5 L688.6,940.2 L688.0,940.2 L687.6,903.4 L687.0,903.4 L686.6,901.8 L686.0,901.8 L685.6,914.0 L685.0,914.0 L684.6,924.3 L684.0,924.3 L683.6,900.3 L683.0,900.3 L682.6,902.5 L682.0,902.5 L681.6,904.4 L681.0,904.4 L680.6,934.4 L680.0,934.4 L679.6,951.2 L679.0,951.2 L678.6,935.9 L678.0,935.9 L677.6,928.1 L677.0,928.1 L676.6,902.5 L676.0,902.5 L675.6,901.7 L675.0,901.7 L674.6,916.7 L674.0,916.7 L673.6,904.4 L673.0,904.4 L672.6,914.7 L672.0,914.7 L671.6,903.6 L671.0,903.6 L670.6,901.9 L670.0,901.9 L669.6,902.1 L669.0,902.1 L668.6,950.1 L668.0,950.1 L667.6,926.3 L667.0,926.3 L666.6,941.5 L666.0,941.5 L665.6,904.7 L665.0,904.7 L664.6,902.1 L664.0,902.1 L663.6,942.1 L663.0,942.1 L662.6,906.9 L662.0,906.9 L661.6,899.9 L661.0,899.9 L660.6,899.5 L660.0,899.5 L659.6,897.4 L659.0,897.4 L658.6,897.4 L658.0,897.4 L657.6,903.1 L657.0,903.1 L656.6,898.9 L656.0,898.9 L655.6,936.9 L655.0,936.9 L654.6,934.0 L654.0,934.0 L653.6,898.9 L653.0,898.9 L652.6,902.5 L652.0,902.5 L651.6,936.3 L651.0,936.3 L650.6,949.1 L650.0,949.1 L649.6,912.3 L649.0,912.3 L648.6,929.9 L648.0,929.9 L647.6,913.7 L647.0,913.7 L646.6,949.2 L646.0,949.2 L645.6,907.5 L645.0,907.5 L644.6,924.6 L644.0,924.6 L643.6,903.4 L643.0,903.4 L642.6,897.3 L642.0,897.3 L641.6,899.0 L641.0,899.0 L640.6,927.1 L640.0,927.1 L639.6,941.2 L639.0,941.2 L638.6,905.8 L638.0,905.8 L637.6,912.7 L637.0,912.7 L636.6,937.6 L636.0,937.6 L635.6,940.0 L635.0,940.0 L634.6,904.8 L634.0,904.8 L633.6,943.9 L633.0,943.9 L632.6,904.4 L632.0,904.4 L631.6,925.1 L631.0,925.1 L630.6,904.4 L630.0,904.4 L629.6,937.6 L629.0,937.6 L628.6,932.6 L628.0,932.6 L627.6,931.0 L627.0,931.0 L626.6,911.0 L626.0,911.0 L625.6,907.8 L625.0,907.8 L624.6,899.3 L624.0,899.3 L623.6,903.7 L623.0,903.7 L622.6,935.8 L622.0,935.8 L621.6,930.6 L621.0,930.6 L620.6,902.5 L620.0,902.5 L619.6,912.7 L619.0,912.7 L618.6,925.2 L618.0,925.2 L617.6,945.4 L617.0,945.4 L616.6,941.7 L616.0,941.7 L615.6,951.2 L615.0,951.2 L614.6,902.0 L614.0,902.0 L613.6,922.2 L613.0,922.2 L612.6,915.3 L612.0,915.3 L611.6,932.1 L611.0,932.1 L610.6,949.8 L610.0,949.8 L609.6,951.2 L609.0,951.2 L608.6,905.7 L608.0,905.7 L607.6,922.8 L607.0,922.8 L606.6,919.3 L606.0,919.3 L605.6,935.5 L605.0,935.5 L604.6,902.9 L604.0,902.9 L603.6,904.2 L603.0,904.2 L602.6,931.0 L602.0,931.0 L601.6,905.3 L601.0,905.3 L600.6,938.7 L600.0,938.7 L599.6,936.2 L599.0,936.2 L598.6,905.0 L598.0,905.0 L597.6,909.3 L597.0,909.3 L596.6,942.7 L596.0,942.7 L595.6,903.8 L595.0,903.8 L594.6,948.2 L594.0,948.2 L593.6,910.8 L593.0,910.8 L592.6,929.9 L592.0,929.9 L591.6,917.9 L591.0,917.9 L590.6,903.6 L590.0,903.6 L589.6,904.2 L589.0,904.2 L588.6,939.7 L588.0,939.7 L587.6,951.2 L587.0,951.2 L586.6,914.9 L586.0,914.9 L585.6,897.6 L585.0,897.6 L584.6,899.5 L584.0,899.5 L583.6,931.8 L583.0,931.8 L582.6,908.0 L582.0,908.0 L581.6,900.9 L581.0,900.9 L580.6,947.8 L580.0,947.8 L579.6,931.9 L579.0,931.9 L578.6,948.1 L578.0,948.1 L577.6,915.4 L577.0,915.4 L576.6,906.2 L576.0,906.2 L575.6,919.4 L575.0,919.4 L574.6,902.7 L574.0,902.7 L573.6,908.7 L573.0,908.7 L572.6,918.5 L572.0,918.5 L571.6,900.2 L571.0,900.2 L570.6,911.9 L570.0,911.9 L569.6,897.4 L569.0,897.4 L568.6,899.5 L568.0,899.5 L567.6,905.8 L567.0,905.8 L566.6,928.1 L566.0,928.1 L565.6,904.2 L565.0,904.2 L564.6,904.1 L564.0,904.1 L563.6,903.3 L563.0,903.3 L562.6,930.9 L562.0,930.9 L561.6,901.9 L561.0,901.9 L560.6,902.6 L560.0,902.6 L559.6,899.0 L559.0,899.0 L558.6,904.9 L558.0,904.9 L557.6,922.2 L557.0,922.2 L556.6,920.1 L556.0,920.1 L555.6,901.1 L555.0,901.1 L554.6,907.0 L554.0,907.0 L553.6,917.6 L553.0,917.6 L552.6,931.6 L552.0,931.6 L551.6,926.9 L551.0,926.9 L550.6,919.5 L550.0,919.5 L549.6,936.3 L549.0,936.3 L548.6,900.8 L548.0,900.8 L547.6,947.5 L547.0,947.5 L546.6,907.4 L546.0,907.4 L545.6,908.9 L545.0,908.9 L544.6,903.1 L544.0,903.1 L543.6,902.3 L543.0,902.3 L542.6,899.0 L542.0,899.0 L541.6,951.2 L541.0,951.2 L540.6,910.2 L540.0,910.2 L539.6,909.6 L539.0,909.6 L538.6,907.9 L538.0,907.9 L537.6,931.1 L537.0,931.1 L536.6,945.4 L536.0,945.4 L535.6,906.4 L535.0,906.4 L534.6,949.8 L534.0,949.8 L533.6,938.7 L533.0,938.7 L532.6,904.1 L532.0,904.1 L531.6,943.2 L531.0,943.2 L530.6,901.7 L530.0,901.7 L529.6,917.4 L529.0,917.4 L528.6,914.5 L528.0,914.5 L527.6,906.7 L527.0,906.7 L526.6,902.7 L526.0,902.7 L525.6,923.9 L525.0,923.9 L524.6,903.7 L524.0,903.7 L523.6,905.4 L523.0,905.4 L522.6,900.5 L522.0,900.5 L521.6,904.1 L521.0,904.1 L520.6,927.3 L520.0,927.3 L519.6,905.1 L519.0,905.1 L518.6,905.7 L518.0,905.7 L517.6,901.2 L517.0,901.2 L516.6,929.5 L516.0,929.5 L515.6,899.9 L515.0,899.9 L514.6,901.2 L514.0,901.2 L513.6,903.1 L513.0,903.1 L512.6,903.5 L512.0,903.5 L511.6,916.7 L511.0,916.7 L510.6,901.6 L510.0,901.6 L509.6,918.9 L509.0,918.9 L508.6,900.4 L508.0,900.4 L507.6,906.3 L507.0,906.3 L506.6,903.6 L506.0,903.6 L505.6,903.2 L505.0,903.2 L504.6,904.6 L504.0,904.6 L503.6,950.4 L503.0,950.4 L502.6,926.2 L502.0,926.2 L501.6,944.9 L501.0,944.9 L500.6,924.0 L500.0,924.0 L499.6,898.6 L499.0,898.6 L498.6,911.4 L498.0,911.4 L497.6,903.2 L497.0,903.2 L496.6,915.8 L496.0,915.8 L495.6,945.1 L495.0,945.1 L494.6,902.1 L494.0,902.1 L493.6,935.7 L493.0,935.7 L492.6,900.8 L492.0,900.8 L491.6,904.7 L491.0,904.7 L490.6,904.9 L490.0,904.9 L489.6,918.6 L489.0,918.6 L488.6,914.7 L488.0,914.7 L487.6,916.8 L487.0,916.8 L486.6,912.3 L486.0,912.3 L485.6,901.2 L485.0,901.2 L484.6,901.2 L484.0,901.2 L483.6,904.9 L483.0,904.9 L482.6,934.5 L482.0,934.5 L481.6,947.2 L481.0,947.2 L480.6,951.2 L480.0,951.2 L479.6,903.5 L479.0,903.5 L478.6,910.8 L478.0,910.8 L477.6,903.8 L477.0,903.8 L476.6,939.5 L476.0,939.5 L475.6,934.4 L475.0,934.4 L474.6,903.2 L474.0,903.2 L473.6,929.1 L473.0,929.1 L472.6,945.8 L472.0,945.8 L471.6,925.1 L471.0,925.1 L470.6,919.4 L470.0,919.4 L469.6,903.6 L469.0,903.6 L468.6,903.6 L468.0,903.6 L467.6,930.4 L467.0,930.4 L466.6,944.3 L466.0,944.3 L465.6,900.4 L465.0,900.4 L464.6,904.1 L464.0,904.1 L463.6,902.4 L463.0,902.4 L462.6,902.3 L462.0,902.3 L461.6,905.7 L461.0,905.7 L460.6,903.1 L460.0,903.1 L459.6,935.9 L459.0,935.9 L458.6,921.2 L458.0,921.2 L457.6,897.8 L457.0,897.8 L456.6,927.8 L456.0,927.8 L455.6,903.3 L455.0,903.3 L454.6,910.0 L454.0,910.0 L453.6,913.3 L453.0,913.3 L452.6,942.4 L452.0,942.4 L451.6,933.5 L451.0,933.5 L450.6,914.7 L450.0,914.7 L449.6,900.4 L449.0,900.4 L448.6,926.7 L448.0,926.7 L447.6,933.5 L447.0,933.5 L446.6,947.9 L446.0,947.9 L445.6,902.8 L445.0,902.8 L444.6,939.0 L444.0,939.0 L443.6,910.0 L443.0,910.0 L442.6,944.9 L442.0,944.9 L441.6,904.7 L441.0,904.7 L440.6,911.1 L440.0,911.1 L439.6,951.2 L439.0,951.2 L438.6,951.2 L438.0,951.2 L437.6,910.0 L437.0,910.0 L436.6,910.5 L436.0,910.5 L435.6,897.4 L435.0,897.4 L434.6,922.1 L434.0,922.1 L433.6,897.4 L433.0,897.4 L432.6,937.4 L432.0,937.4 L431.6,915.9 L431.0,915.9 L430.6,908.0 L430.0,908.0 L429.6,951.2 L429.0,951.2 L428.6,921.9 L428.0,921.9 L427.6,909.7 L427.0,909.7 L426.6,913.4 L426.0,913.4 L425.6,930.2 L425.0,930.2 L424.6,904.1 L424.0,904.1 L423.6,941.3 L423.0,941.3 L422.6,902.9 L422.0,902.9 L421.6,904.4 L421.0,904.4 L420.6,929.6 L420.0,929.6 L419.6,946.8 L419.0,946.8 L418.6,941.3 L418.0,941.3 L417.6,941.8 L417.0,941.8 L416.6,905.0 L416.0,905.0 L415.6,901.7 L415.0,901.7 L414.6,914.3 L414.0,914.3 L413.6,919.8 L413.0,919.8 L412.6,924.2 L412.0,924.2 L411.6,937.6 L411.0,937.6 L410.6,915.0 L410.0,915.0 L409.6,911.3 L409.0,911.3 L408.6,951.2 L408.0,951.2 L407.6,906.6 L407.0,906.6 L406.6,923.1 L406.0,923.1 L405.6,941.9 L405.0,941.9 L404.6,944.4 L404.0,944.4 L403.6,912.0 L403.0,912.0 L402.6,928.0 L402.0,928.0 L401.6,947.6 L401.0,947.6 L400.6,903.9 L400.0,903.9 L399.6,933.3 L399.0,933.3 L398.6,902.2 L398.0,902.2 L397.6,900.1 L397.0,900.1 L396.6,903.7 L396.0,903.7 L395.6,916.5 L395.0,916.5 L394.6,903.0 L394.0,903.0 L393.6,903.3 L393.0,903.3 L392.6,924.6 L392.0,924.6 L391.6,901.5 L391.0,901.5 L390.6,913.8 L390.0,913.8 L389.6,914.1 L389.0,914.1 L388.6,899.5 L388.0,899.5 L387.6,911.6 L387.0,911.6 L386.6,903.8 L386.0,903.8 L385.6,901.3 L385.0,901.3 L384.6,934.9 L384.0,934.9 L383.6,936.0 L383.0,936.0 L382.6,927.9 L382.0,927.9 L381.6,903.7 L381.0,903.7 L380.6,936.5 L380.0,936.5 L379.6,933.1 L379.0,933.1 L378.6,904.1 L378.0,904.1 L377.6,910.2 L377.0,910.2 L376.6,905.9 L376.0,905.9 L375.6,902.1 L375.0,902.1Z" fill="#3d9d6e"/>
<rect x="1188" y="243" width="1.3" height="60" fill="#3d9d6e"/>
<rect x="376" y="242.3" width="1088" height="1.1" fill="#b3b3b3"/>
<rect x="376" y="556.7" width="1088" height="1.1" fill="#b3b3b3"/>
<rect x="376" y="637.3" width="1088" height="1.1" fill="#b3b3b3"/>
<rect x="376" y="951.7" width="1088" height="1.1" fill="#b3b3b3"/>
<rect x="1463.5" y="203" width="1.2" height="394" fill="#cfcfcf"/>
<rect x="1463.5" y="203" width="7" height="1.5" fill="#cfcfcf"/>
<rect x="1463.5" y="598" width="1.2" height="394" fill="#cfcfcf"/>
<rect x="1463.5" y="598" width="7" height="1.5" fill="#cfcfcf"/>
<rect x="1464" y="596.0" width="6" height="1.2" fill="#cfcfcf"/>
<rect x="1464" y="588.1" width="3.5" height="1.2" fill="#cfcfcf"/>
<rect x="1464" y="580.3" width="3.5" height="1.2" fill="#cfcfcf"/>
<rect x="1464" y="572.4" width="3.5" height="1.2" fill="#cfcfcf"/>
<rect x="1464" y="564.6" width="3.5" height="1.2" fill="#cfcfcf"/>
<rect x="1464" y="556.7" width="6" height="1.2" fill="#cfcfcf"/>
<rect x="1464" y="548.8" width="3.5" height="1.2" fill="#cfcfcf"/>
<rect x="1464" y="541.0" width="3.5" height="1.2" fill="#cfcfcf"/>
<rect x="1464" y="533.1" width="3.5" height="1.2" fill="#cfcfcf"/>
<rect x="1464" y="525.3" width="3.5" height="1.2" fill="#cfcfcf"/>
<rect x="1464" y="517.4" width="6" height="1.2" fill="#cfcfcf"/>
<rect x="1464" y="509.5" width="3.5" height="1.2" fill="#cfcfcf"/>
<rect x="1464" y="501.7" width="3.5" height="1.2" fill="#cfcfcf"/>
<rect x="1464" y="493.8" width="3.5" height="1.2" fill="#cfcfcf"/>
<rect x="1464" y="486.0" width="3.5" height="1.2" fill="#cfcfcf"/>
<rect x="1464" y="478.1" width="6" height="1.2" fill="#cfcfcf"/>
<rect x="1464" y="470.2" width="3.5" height="1.2" fill="#cfcfcf"/>
<rect x="1464" y="462.4" width="3.5" height="1.2" fill="#cfcfcf"/>
<rect x="1464" y="454.5" width="3.5" height="1.2" fill="#cfcfcf"/>
<rect x="1464" y="446.7" width="3.5" height="1.2" fill="#cfcfcf"/>
<rect x="1464" y="438.8" width="6" height="1.2" fill="#cfcfcf"/>
<rect x="1464" y="430.9" width="3.5" height="1.2" fill="#cfcfcf"/>
<rect x="1464" y="423.1" width="3.5" height="1.2" fill="#cfcfcf"/>
<rect x="1464" y="415.2" width="3.5" height="1.2" fill="#cfcfcf"/>
<rect x="1464" y="407.4" width="3.5" height="1.2" fill="#cfcfcf"/>
<rect x="1464" y="399.5" width="6" height="1.2" fill="#cfcfcf"/>
<rect x="1464" y="391.6" width="3.5" height="1.2" fill="#cfcfcf"/>
<rect x="1464" y="383.8" width="3.5" height="1.2" fill="#cfcfcf"/>
<rect x="1464" y="375.9" width="3.5" height="1.2" fill="#cfcfcf"/>
<rect x="1464" y="368.1" width="3.5" height="1.2" fill="#cfcfcf"/>
<rect x="1464" y="360.2" width="6" height="1.2" fill="#cfcfcf"/>
<rect x="1464" y="352.3" width="3.5" height="1.2" fill="#cfcfcf"/>
<rect x="1464" y="344.5" width="3.5" height="1.2" fill="#cfcfcf"/>
<rect x="1464" y="336.6" width="3.5" height="1.2" fill="#cfcfcf"/>
<rect x="1464" y="328.8" width="3.5" height="1.2" fill="#cfcfcf"/>
<rect x="1464" y="320.9" width="6" height="1.2" fill="#cfcfcf"/>
<rect x="1464" y="313.0" width="3.5" height="1.2" fill="#cfcfcf"/>
<rect x="1464" y="305.2" width="3.5" height="1.2" fill="#cfcfcf"/>
<rect x="1464" y="297.3" width="3.5" height="1.2" fill="#cfcfcf"/>
<rect x="1464" y="289.5" width="3.5" height="1.2" fill="#cfcfcf"/>
<rect x="1464" y="281.6" width="6" height="1.2" fill="#cfcfcf"/>
<rect x="1464" y="273.7" width="3.5" height="1.2" fill="#cfcfcf"/>
<rect x="1464" y="265.9" width="3.5" height="1.2" fill="#cfcfcf"/>
<rect x="1464" y="258.0" width="3.5" height="1.2" fill="#cfcfcf"/>
<rect x="1464" y="250.2" width="3.5" height="1.2" fill="#cfcfcf"/>
<rect x="1464" y="242.3" width="6" height="1.2" fill="#cfcfcf"/>
<rect x="1464" y="234.4" width="3.5" height="1.2" fill="#cfcfcf"/>
<rect x="1464" y="226.6" width="3.5" height="1.2" fill="#cfcfcf"/>
<rect x="1464" y="218.7" width="3.5" height="1.2" fill="#cfcfcf"/>
<rect x="1464" y="210.9" width="3.5" height="1.2" fill="#cfcfcf"/>
<rect x="1464" y="203.0" width="6" height="1.2" fill="#cfcfcf"/>
<rect x="1464" y="991.0" width="6" height="1.2" fill="#cfcfcf"/>
<rect x="1464" y="983.1" width="3.5" height="1.2" fill="#cfcfcf"/>
<rect x="1464" y="975.3" width="3.5" height="1.2" fill="#cfcfcf"/>
<rect x="1464" y="967.4" width="3.5" height="1.2" fill="#cfcfcf"/>
<rect x="1464" y="959.6" width="3.5" height="1.2" fill="#cfcfcf"/>
<rect x="1464" y="951.7" width="6" height="1.2" fill="#cfcfcf"/>
<rect x="1464" y="943.8" width="3.5" height="1.2" fill="#cfcfcf"/>
<rect x="1464" y="936.0" width="3.5" height="1.2" fill="#cfcfcf"/>
<rect x="1464" y="928.1" width="3.5" height="1.2" fill="#cfcfcf"/>
<rect x="1464" y="920.3" width="3.5" height="1.2" fill="#cfcfcf"/>
<rect x="1464" y="912.4" width="6" height="1.2" fill="#cfcfcf"/>
<rect x="1464" y="904.5" width="3.5" height="1.2" fill="#cfcfcf"/>
<rect x="1464" y="896.7" width="3.5" height="1.2" fill="#cfcfcf"/>
<rect x="1464" y="888.8" width="3.5" height="1.2" fill="#cfcfcf"/>
<rect x="1464" y="881.0" width="3.5" height="1.2" fill="#cfcfcf"/>
<rect x="1464" y="873.1" width="6" height="1.2" fill="#cfcfcf"/>
<rect x="1464" y="865.2" width="3.5" height="1.2" fill="#cfcfcf"/>
<rect x="1464" y="857.4" width="3.5" height="1.2" fill="#cfcfcf"/>
<rect x="1464" y="849.5" width="3.5" height="1.2" fill="#cfcfcf"/>
<rect x="1464" y="841.7" width="3.5" height="1.2" fill="#cfcfcf"/>
<rect x="1464" y="833.8" width="6" height="1.2" fill="#cfcfcf"/>
<rect x="1464" y="825.9" width="3.5" height="1.2" fill="#cfcfcf"/>
<rect x="1464" y="818.1" width="3.5" height="1.2" fill="#cfcfcf"/>
<rect x="1464" y="810.2" width="3.5" height="1.2" fill="#cfcfcf"/>
<rect x="1464" y="802.4" width="3.5" height="1.2" fill="#cfcfcf"/>
<rect x="1464" y="794.5" width="6" height="1.2" fill="#cfcfcf"/>
<rect x="1464" y="786.6" width="3.5" height="1.2" fill="#cfcfcf"/>
<rect x="1464" y="778.8" width="3.5" height="1.2" fill="#cfcfcf"/>
<rect x="1464" y="770.9" width="3.5" height="1.2" fill="#cfcfcf"/>
<rect x="1464" y="763.1" width="3.5" height="1.2" fill="#cfcfcf"/>
<rect x="1464" y="755.2" width="6" height="1.2" fill="#cfcfcf"/>
<rect x="1464" y="747.3" width="3.5" height="1.2" fill="#cfcfcf"/>
<rect x="1464" y="739.5" width="3.5" height="1.2" fill="#cfcfcf"/>
<rect x="1464" y="731.6" width="3.5" height="1.2" fill="#cfcfcf"/>
<rect x="1464" y="723.8" width="3.5" height="1.2" fill="#cfcfcf"/>
<rect x="1464" y="715.9" width="6" height="1.2" fill="#cfcfcf"/>
<rect x="1464" y="708.0" width="3.5" height="1.2" fill="#cfcfcf"/>
<rect x="1464" y="700.2" width="3.5" height="1.2" fill="#cfcfcf"/>
<rect x="1464" y="692.3" width="3.5" height="1.2" fill="#cfcfcf"/>
<rect x="1464" y="684.5" width="3.5" height="1.2" fill="#cfcfcf"/>
<rect x="1464" y="676.6" width="6" height="1.2" fill="#cfcfcf"/>
<rect x="1464" y="668.7" width="3.5" height="1.2" fill="#cfcfcf"/>
<rect x="1464" y="660.9" width="3.5" height="1.2" fill="#cfcfcf"/>
<rect x="1464" y="653.0" width="3.5" height="1.2" fill="#cfcfcf"/>
<rect x="1464" y="645.2" width="3.5" height="1.2" fill="#cfcfcf"/>
<rect x="1464" y="637.3" width="6" height="1.2" fill="#cfcfcf"/>
<rect x="1464" y="629.4" width="3.5" height="1.2" fill="#cfcfcf"/>
<rect x="1464" y="621.6" width="3.5" height="1.2" fill="#cfcfcf"/>
<rect x="1464" y="613.7" width="3.5" height="1.2" fill="#cfcfcf"/>
<rect x="1464" y="605.9" width="3.5" height="1.2" fill="#cfcfcf"/>
<rect x="1464" y="598.0" width="6" height="1.2" fill="#cfcfcf"/>
<rect x="376" y="991.5" width="1088" height="1.3" fill="#cfcfcf"/>
<rect x="374.3" y="992" width="1.2" height="11" fill="#cfcfcf"/>
<rect x="386.2" y="992" width="1" height="4" fill="#cfcfcf"/>
<rect x="398.0" y="992" width="1" height="4" fill="#cfcfcf"/>
<rect x="409.9" y="992" width="1" height="4" fill="#cfcfcf"/>
<rect x="421.7" y="992" width="1" height="4" fill="#cfcfcf"/>
<rect x="433.6" y="992" width="1" height="4" fill="#cfcfcf"/>
<rect x="445.4" y="992" width="1" height="4" fill="#cfcfcf"/>
<rect x="457.3" y="992" width="1" height="4" fill="#cfcfcf"/>
<rect x="469.1" y="992" width="1" height="4" fill="#cfcfcf"/>
<rect x="481.0" y="992" width="1" height="4" fill="#cfcfcf"/>
<rect x="492.8" y="992" width="1.2" height="11" fill="#cfcfcf"/>
<rect x="504.7" y="992" width="1" height="4" fill="#cfcfcf"/>
<rect x="516.5" y="992" width="1" height="4" fill="#cfcfcf"/>
<rect x="528.4" y="992" width="1" height="4" fill="#cfcfcf"/>
<rect x="540.2" y="992" width="1" height="4" fill="#cfcfcf"/>
<rect x="552.1" y="992" width="1" height="4" fill="#cfcfcf"/>
<rect x="564.0" y="992" width="1" height="4" fill="#cfcfcf"/>
<rect x="575.8" y="992" width="1" height="4" fill="#cfcfcf"/>
<rect x="587.7" y="992" width="1" height="4" fill="#cfcfcf"/>
<rect x="599.5" y="992" width="1" height="4" fill="#cfcfcf"/>
<rect x="611.4" y="992" width="1.2" height="11" fill="#cfcfcf"/>
<rect x="623.2" y="992" width="1" height="4" fill="#cfcfcf"/>
<rect x="635.1" y="992" width="1" height="4" fill="#cfcfcf"/>
<rect x="646.9" y="992" width="1" height="4" fill="#cfcfcf"/>
<rect x="658.8" y="992" width="1" height="4" fill="#cfcfcf"/>
<rect x="670.6" y="992" width="1" height="4" fill="#cfcfcf"/>
<rect x="682.5" y="992" width="1" height="4" fill="#cfcfcf"/>
<rect x="694.3" y="992" width="1" height="4" fill="#cfcfcf"/>
<rect x="706.2" y="992" width="1" height="4" fill="#cfcfcf"/>
<rect x="718.0" y="992" width="1" height="4" fill="#cfcfcf"/>
<rect x="729.9" y="992" width="1.2" height="11" fill="#cfcfcf"/>
<rect x="741.8" y="992" width="1" height="4" fill="#cfcfcf"/>
<rect x="753.6" y="992" width="1" height="4" fill="#cfcfcf"/>
<rect x="765.5" y="992" width="1" height="4" fill="#cfcfcf"/>
<rect x="777.3" y="992" width="1" height="4" fill="#cfcfcf"/>
<rect x="789.2" y="992" width="1" height="4" fill="#cfcfcf"/>
<rect x="801.0" y="992" width="1" height="4" fill="#cfcfcf"/>
<rect x="812.9" y="992" width="1" height="4" fill="#cfcfcf"/>
<rect x="824.7" y="992" width="1" height="4" fill="#cfcfcf"/>
<rect x="836.6" y="992" width="1" height="4" fill="#cfcfcf"/>
<rect x="848.4" y="992" width="1.2" height="11" fill="#cfcfcf"/>
<rect x="860.3" y="992" width="1" height="4" fill="#cfcfcf"/>
<rect x="872.1" y="992" width="1" height="4" fill="#cfcfcf"/>
<rect x="884.0" y="992" width="1" height="4" fill="#cfcfcf"/>
<rect x="895.8" y="992" width="1" height="4" fill="#cfcfcf"/>
<rect x="907.7" y="992" width="1" height="4" fill="#cfcfcf"/>
<rect x="919.6" y="992" width="1" height="4" fill="#cfcfcf"/>
<rect x="931.4" y="992" width="1" height="4" fill="#cfcfcf"/>
<rect x="943.3" y="992" width="1" height="4" fill="#cfcfcf"/>
<rect x="955.1" y="992" width="1" height="4" fill="#cfcfcf"/>
<rect x="967.0" y="992" width="1.2" height="11" fill="#cfcfcf"/>
<rect x="978.8" y="992" width="1" height="4" fill="#cfcfcf"/>
<rect x="990.7" y="992" width="1" height="4" fill="#cfcfcf"/>
<rect x="1002.5" y="992" width="1" height="4" fill="#cfcfcf"/>
<rect x="1014.4" y="992" width="1" height="4" fill="#cfcfcf"/>
<rect x="1026.2" y="992" width="1" height="4" fill="#cfcfcf"/>
<rect x="1038.1" y="992" width="1" height="4" fill="#cfcfcf"/>
<rect x="1049.9" y="992" width="1" height="4" fill="#cfcfcf"/>
<rect x="1061.8" y="992" width="1" height="4" fill="#cfcfcf"/>
<rect x="1073.7" y="992" width="1" height="4" fill="#cfcfcf"/>
<rect x="1085.5" y="992" width="1.2" height="11" fill="#cfcfcf"/>
<rect x="1097.4" y="992" width="1" height="4" fill="#cfcfcf"/>
<rect x="1109.2" y="992" width="1" height="4" fill="#cfcfcf"/>
<rect x="1121.1" y="992" width="1" height="4" fill="#cfcfcf"/>
<rect x="1132.9" y="992" width="1" height="4" fill="#cfcfcf"/>
<rect x="1144.8" y="992" width="1" height="4" fill="#cfcfcf"/>
<rect x="1156.6" y="992" width="1" height="4" fill="#cfcfcf"/>
<rect x="1168.5" y="992" width="1" height="4" fill="#cfcfcf"/>
<rect x="1180.3" y="992" width="1" height="4" fill="#cfcfcf"/>
<rect x="1192.2" y="992" width="1" height="4" fill="#cfcfcf"/>
<rect x="1204.0" y="992" width="1.2" height="11" fill="#cfcfcf"/>
<rect x="1215.9" y="992" width="1" height="4" fill="#cfcfcf"/>
<rect x="1227.7" y="992" width="1" height="4" fill="#cfcfcf"/>
<rect x="1239.6" y="992" width="1" height="4" fill="#cfcfcf"/>
<rect x="1251.5" y="992" width="1" height="4" fill="#cfcfcf"/>
<rect x="1263.3" y="992" width="1" height="4" fill="#cfcfcf"/>
<rect x="1275.2" y="992" width="1" height="4" fill="#cfcfcf"/>
<rect x="1287.0" y="992" width="1" height="4" fill="#cfcfcf"/>
<rect x="1298.9" y="992" width="1" height="4" fill="#cfcfcf"/>
<rect x="1310.7" y="992" width="1" height="4" fill="#cfcfcf"/>
<rect x="1322.6" y="992" width="1.2" height="11" fill="#cfcfcf"/>
<rect x="1334.4" y="992" width="1" height="4" fill="#cfcfcf"/>
<rect x="1346.3" y="992" width="1" height="4" fill="#cfcfcf"/>
<rect x="1358.1" y="992" width="1" height="4" fill="#cfcfcf"/>
<rect x="1370.0" y="992" width="1" height="4" fill="#cfcfcf"/>
<rect x="1381.8" y="992" width="1" height="4" fill="#cfcfcf"/>
<rect x="1393.7" y="992" width="1" height="4" fill="#cfcfcf"/>
<rect x="1405.5" y="992" width="1" height="4" fill="#cfcfcf"/>
<rect x="1417.4" y="992" width="1" height="4" fill="#cfcfcf"/>
<rect x="1429.3" y="992" width="1" height="4" fill="#cfcfcf"/>
<rect x="1441.1" y="992" width="1.2" height="11" fill="#cfcfcf"/>
<rect x="1453.0" y="992" width="1" height="4" fill="#cfcfcf"/>
<rect x="374.5" y="202" width="1.3" height="790" fill="#f0f0f0"/>
<path d="M375 982.5 Q369.8 988.5 369.8 992.5 A5.2 5.2 0 0 0 380.2 992.5 Q380.2 988.5 375 982.5Z" fill="#fff"/><circle cx="375" cy="992.5" r="1.8" fill="#1f1e20"/>
</svg>
<div class="ax" style="left:1472px;top:237.5px">+0.80</div>
<div class="ax" style="left:1472px;top:276.8px">+0.60</div>
<div class="ax" style="left:1472px;top:316.1px">+0.40</div>
<div class="ax" style="left:1472px;top:355.4px">+0.20</div>
<div class="ax" style="left:1472px;top:394.7px">+0.00</div>
<div class="ax" style="left:1472px;top:434.0px">-0.20</div>
<div class="ax" style="left:1472px;top:473.3px">-0.40</div>
<div class="ax" style="left:1472px;top:512.6px">-0.60</div>
<div class="ax" style="left:1472px;top:551.9px">-0.80</div>
<div class="ax" style="left:1472px;top:632.5px">+0.80</div>
<div class="ax" style="left:1472px;top:671.8px">+0.60</div>
<div class="ax" style="left:1472px;top:711.1px">+0.40</div>
<div class="ax" style="left:1472px;top:750.4px">+0.20</div>
<div class="ax" style="left:1472px;top:789.7px">+0.00</div>
<div class="ax" style="left:1472px;top:829.0px">-0.20</div>
<div class="ax" style="left:1472px;top:868.3px">-0.40</div>
<div class="ax" style="left:1472px;top:907.6px">-0.60</div>
<div class="ax" style="left:1472px;top:946.9px">-0.80</div>
<div class="tl" style="left:378.7px;top:999.5px;">00:00.000</div>
<div class="tl" style="left:497.2px;top:999.5px;">02:00.000</div>
<div class="tl" style="left:615.8px;top:999.5px;">04:00.000</div>
<div class="tl" style="left:734.3px;top:999.5px;">06:00.000</div>
<div class="tl" style="left:852.8px;top:999.5px;">08:00.000</div>
<div class="tl" style="left:971.4px;top:999.5px;">10:00.000</div>
<div class="tl" style="left:1089.9px;top:999.5px;">12:00.000</div>
<div class="tl" style="left:1208.4px;top:999.5px;">14:00.000</div>
<div class="tl" style="left:1327.0px;top:999.5px;">16:00.000</div>
<div class="tl" style="left:1445.5px;top:999.5px;color:#6a6a6a;">18:00.000</div>
</div>
<div id="wb"></div>
<style>
#dlg{position:absolute;left:350px;top:60px;width:797px;height:818px;border-radius:8px;overflow:hidden;box-shadow:0 5px 20px rgba(0,0,0,0.32);background:#eff3f8}
#dlgb{position:absolute;left:350px;top:60px;width:797px;height:818px;border-radius:8px;border:2px solid #1b4f86;border-top:1px solid #4a9be6;
}
#dlgh{position:absolute;left:352px;top:95px;width:793px;height:781px;border:1px solid rgba(225,245,255,0.85);border-top:none;border-radius:0 0 6px 6px;pointer-events:none;pointer-events:none}
#dlg .in{position:absolute;left:-350px;top:-60px;width:1539px;height:1020px}
#dlg .t{font-size:13.6px;color:#24242a;margin-top:1px;-webkit-text-stroke:0.1px #24242a}
#dlg .pn{position:absolute;left:366px;width:767px;background:#ebeff5;border-radius:4px;box-shadow:0 0 6px 2px #ebeff5}
</style>
<div id="dlg"><div class="in">
  <!-- title -->
  <div class="a" style="left:350px;top:60px;width:797px;height:35px;background:#0078d4"></div>
  <div class="a" style="left:350px;top:95px;width:797px;height:1px;background:#cfe3f6"></div>
  <svg class="a" style="left:363px;top:67px" width="15" height="20" viewBox="0 0 15 20">
    <path d="M2.5 4.5 L8.5 0.8 L11 6 L13.5 12.5 Q14 15 11.5 16.5 L8.5 19.5 L6 17.5 Q1.5 15 1.2 12 Q1 8 2.5 4.5Z" fill="#1f3550"/>
    <path d="M3.8 5.5 L8.2 2.6 L9.6 7 L4.5 8Z" fill="#3a6aa0"/>
    <ellipse cx="7.3" cy="11" rx="3.6" ry="4" fill="#f0a625"/>
    <path d="M5 14.5 Q7.5 13 10 14.5 L8.5 18.5 L6.5 18Z" fill="#1a0e0e"/>
  </svg>
  <div class="t" style="letter-spacing:0.2px;left:385px;top:69px;color:#fff;font-size:13.6px">Настройки звука</div>
  <svg class="a" style="left:1120px;top:71px" width="13" height="13" viewBox="0 0 13 13"><path d="M0.5 0.5L12.5 12.5M12.5 0.5L0.5 12.5" stroke="#fff" stroke-width="1.3"/></svg>

  <!-- tabs -->
  <div class="a" style="left:350px;top:96px;width:797px;height:109px;background:#e4e4e4"></div>
  <div class="a" style="left:350px;top:205px;width:797px;height:1px;background:#c4c4c4"></div>
  <div class="a" style="left:457px;top:110px;width:100px;height:80px;border-radius:9px;background:#3e8bf7;border:1px solid #b9d4fb"></div>
  <!-- gear -->
  <svg class="a" style="left:390px;top:120px" width="37" height="37" viewBox="-18.5 -18.5 37 37">
    <g fill="#5b5b5b">
      <circle r="13"/>
      <path d="M-2.6 -17.6 L2.6 -17.6 L3.6 -11 L-3.6 -11Z" transform="rotate(-15)"/><path d="M-2.6 -17.6 L2.6 -17.6 L3.6 -11 L-3.6 -11Z" transform="rotate(30)"/><path d="M-2.6 -17.6 L2.6 -17.6 L3.6 -11 L-3.6 -11Z" transform="rotate(75)"/><path d="M-2.6 -17.6 L2.6 -17.6 L3.6 -11 L-3.6 -11Z" transform="rotate(120)"/><path d="M-2.6 -17.6 L2.6 -17.6 L3.6 -11 L-3.6 -11Z" transform="rotate(165)"/><path d="M-2.6 -17.6 L2.6 -17.6 L3.6 -11 L-3.6 -11Z" transform="rotate(210)"/><path d="M-2.6 -17.6 L2.6 -17.6 L3.6 -11 L-3.6 -11Z" transform="rotate(255)"/><path d="M-2.6 -17.6 L2.6 -17.6 L3.6 -11 L-3.6 -11Z" transform="rotate(300)"/>
    </g>
    <circle r="8.6" fill="#e4e4e4"/><circle r="5.6" fill="#5b5b5b"/>
  </svg>
  <div class="tab" style="left:359px;top:165px;width:100px;font-size:13.4px">Общие</div>
  <!-- sound planet -->
  <svg class="a" style="left:485px;top:116px" width="45" height="45" viewBox="0 0 45 45">
    <g transform="translate(22.5 22.5) rotate(45)" fill="#fff">
      <path d="M -8.2 -1.3 A 8.5 8.5 0 0 1 8.8 -1.3 Z"/>
      <path d="M -16 0.9 A 16.2 13.2 0 0 0 16.4 0.9 Z"/>
      <g fill="none" stroke="#fff" stroke-width="3.2" stroke-linecap="round">
        <path d="M -21 0 A 21 7.8 0 0 0 21 0"/>
        <path d="M -21 0 A 21 7.8 0 0 1 -11 -6.6"/>
        <path d="M 10.5 -6.8 A 21 7.8 0 0 1 21 0"/>
      </g>
    </g>
  </svg>
  <div class="tab" style="left:457px;top:165px;width:100px;color:#fff;font-size:13.4px">Звук</div>
  <!-- key -->
  <svg class="a" style="left:589px;top:115px" width="33" height="30" viewBox="0 0 33 30">
    <path d="M15 0 H29 Q32 0 32 3 V26 Q32 29 29 29 H4 Q1 29 1 26 V17 Q1 14 4 14 H12 V3 Q12 0 15 0Z" fill="#5b5b5b"/>
    <path d="M25 17 V22 H9 M12.5 18.5 L8.5 22 L12.5 25.5" fill="none" stroke="#e4e4e4" stroke-width="2.2"/>
  </svg>
  <div class="tab" style="left:555px;top:156px;width:100px;font-size:13.4px;line-height:17.5px">Привязка<br>клавиш</div>
  <!-- spectrogram -->
  <svg class="a" style="left:698px;top:120px" width="38" height="36" viewBox="0 0 38 36">
    <g fill="#5b5b5b">
      <rect x="1" y="18.5" width="8" height="3" rx="1"/><rect x="1" y="22.6" width="8" height="3" rx="1"/><rect x="1" y="26.7" width="8" height="3" rx="1"/><rect x="1" y="30.8" width="8" height="3" rx="1"/>
      <rect x="10.2" y="10.3" width="8" height="3" rx="1"/><rect x="10.2" y="14.4" width="8" height="3" rx="1"/><rect x="10.2" y="18.5" width="8" height="3" rx="1"/><rect x="10.2" y="22.6" width="8" height="3" rx="1"/><rect x="10.2" y="26.7" width="8" height="3" rx="1"/><rect x="10.2" y="30.8" width="8" height="3" rx="1"/>
      <rect x="19.4" y="2" width="8" height="3" rx="1"/><rect x="19.4" y="6.2" width="8" height="3" rx="1"/><rect x="19.4" y="10.3" width="8" height="3" rx="1"/><rect x="19.4" y="14.4" width="8" height="3" rx="1"/><rect x="19.4" y="18.5" width="8" height="3" rx="1"/><rect x="19.4" y="22.6" width="8" height="3" rx="1"/><rect x="19.4" y="26.7" width="8" height="3" rx="1"/><rect x="19.4" y="30.8" width="8" height="3" rx="1"/>
      <rect x="28.6" y="22.6" width="8" height="3" rx="1"/><rect x="28.6" y="26.7" width="8" height="3" rx="1"/><rect x="28.6" y="30.8" width="8" height="3" rx="1"/>
    </g>
  </svg>
  <div class="tab" style="left:666px;top:165px;width:100px;font-size:13.4px">Спектрограмма</div>
  <!-- globe -->
  <svg class="a" style="left:810px;top:120px" width="37" height="37" viewBox="-18.5 -18.5 37 37">
    <circle cx="-0.2" cy="0" r="17.4" fill="#5b5b5b"/>
    <g fill="none" stroke="#e4e4e4" stroke-width="2.1" stroke-linejoin="round" stroke-linecap="round">
      <path d="M-11.5 -15 L-7 -8 L6.8 -10 L-2.4 0.5 L-7 -8 L-17.5 -1.5"/>
      <path d="M-17.8 0 L-2.4 0.5 L4.2 8.4 L-9.2 9.8 L-2.4 0.5"/>
      <path d="M-11.5 -15 Q-2 -18 10.5 -13.8 L6.8 -10 L13 -4.4 L16.5 5.3 L4.2 8.4 L9.8 15"/>
      <path d="M13 -4.4 L17.8 -6"/>
      <path d="M16.5 5.3 L13.5 12.5"/>
      <path d="M-9.2 9.8 L-13.8 11.5"/>
    </g>
  </svg>
  <div class="tab" style="left:777px;top:165px;width:100px;font-size:13.4px">Сеть</div>
  <!-- sparkle -->
  <svg class="a" style="left:908px;top:120px" width="38" height="38" viewBox="0 0 38 38">
    <path d="M18 2.3 L21.6 15.4 L35.1 19 L21.6 22.8 L18 35.6 L14.4 22.8 L1.3 19 L14.4 15.4Z" fill="#5b5b5b"/>
    <path d="M30.2 0.3 L31.8 5.1 L36.6 6.7 L31.8 8.3 L30.2 13 L28.6 8.3 L23.9 6.7 L28.6 5.1Z" fill="#5b5b5b"/>
  </svg>
  <div class="tab" style="left:876px;top:165px;width:100px;font-size:13.4px">Ocen Ai</div>
  <!-- puzzle -->
  <svg class="a" style="left:1003px;top:116px" width="45" height="45" viewBox="0 0 45 45">
    <g fill="#5b5b5b" stroke="#5b5b5b">
      <path d="M8.5 21.6 L22.5 8.1 L36.4 22 L22 36 Z" stroke-width="3.2" stroke-linejoin="round"/>
      <circle cx="10.9" cy="10.2" r="4.3" stroke="none"/>
      <path d="M14.7 14.1 L10.9 10.2" stroke-width="3.6"/>
      <circle cx="33.9" cy="33.7" r="4.3" stroke="none"/>
      <path d="M29.9 29.7 L33.9 33.7" stroke-width="3.6"/>
    </g>
    <circle cx="27" cy="17.6" r="4.1" fill="#e4e4e4"/>
    <path d="M27 17.6 L31.5 13" stroke="#e4e4e4" stroke-width="3.4"/>
  </svg>
  <div class="tab" style="left:975px;top:165px;width:100px;font-size:13.4px">Плагины</div>

  <!-- body sections -->
  <div class="pn" style="top:258px;height:74px"></div>
  <div class="pn" style="top:374px;height:208px"></div>
  <div class="pn" style="top:623px;height:152px"></div>
  <div class="pn" style="top:818px;height:44px"></div>
  <div class="lbl" style="left:366px;top:224px;width:147px;height:29px"></div>
  <div class="t" style="letter-spacing:0.2px;left:377px;top:230px">Микшерный сервер</div>
  <div class="sel" style="left:375px;top:266px;width:749px;height:27px"><div class="arr"></div></div>
  <div class="t" style="left:380px;top:272px">DirectSound</div>
  <div class="cb" style="left:377px;top:303px"></div>
  <div class="t" style="letter-spacing:0.07px;left:401px;top:302px">Использовать только Full-Duplex устройства</div>
  <div class="cb on" style="left:755px;top:303px"><svg width="11" height="11" viewBox="0 0 11 11"><path d="M0.8 5.6L3.9 8.6L10.3 2.2" fill="none" stroke="#fff" stroke-width="1.6"/></svg></div>
  <div class="t" style="left:780px;top:302px">Disable mixer when screen sleeps</div>

  <div class="lbl" style="left:366px;top:340px;width:282px;height:29px"></div>
  <div class="t" style="letter-spacing:0.2px;left:376px;top:345px">Устройство/параметры воспроизведения</div>
  <div class="sel" style="left:375px;top:381px;width:599px;height:27px"><div class="arr"></div></div>
  <div class="t" style="letter-spacing:0.2px;left:380px;top:387px">Первичный звуковой драйвер (2 channels)</div>
  <div class="btn" style="left:984px;top:381px;width:39px;height:27px"></div>
  <svg class="a" style="left:995px;top:389px" width="17" height="12" viewBox="0 0 17 12"><g fill="#333"><rect x="0" y="0" width="7.5" height="5" rx="1.5"/><rect x="9.5" y="0" width="7.5" height="5" rx="1.5"/><rect x="0" y="7" width="7.5" height="5" rx="1.5"/><rect x="9.5" y="7" width="7.5" height="5" rx="1.5"/></g></svg>
  <div class="btn" style="left:1032px;top:381px;width:92px;height:27px"></div>
  <div class="t" style="letter-spacing:0.2px;left:1042px;top:387px">Параметры</div>

  <div class="cb" style="left:380px;top:419px"></div><div class="t" style="letter-spacing:0.07px;left:405px;top:419px">Воспроизвести только видимую части аудио</div>
  <div class="cb on" style="left:380px;top:447px"><svg width="11" height="11" viewBox="0 0 11 11"><path d="M0.8 5.6L3.9 8.6L10.3 2.2" fill="none" stroke="#fff" stroke-width="1.6"/></svg></div><div class="t" style="left:405px;top:447px">Scroll view to follow play head</div>
  <div class="cb on" style="left:380px;top:474px"><svg width="11" height="11" viewBox="0 0 11 11"><path d="M0.8 5.6L3.9 8.6L10.3 2.2" fill="none" stroke="#fff" stroke-width="1.6"/></svg></div><div class="t" style="left:405px;top:474px">Play head follows cursor and selections</div>
  <div class="cb" style="left:380px;top:502px"></div><div class="t" style="left:405px;top:502px">Use play from start mode (space bar only / long press to stop)</div>
  <div class="cb" style="left:698px;top:419px"></div><div class="t" style="letter-spacing:0.07px;left:722px;top:419px">Переместить курсор в конец воспроизведения</div>
  <div class="cb" style="left:698px;top:447px"></div><div class="t" style="letter-spacing:0.07px;left:722px;top:447px">Приостановка воспроизведения на маркерах</div>
  <div class="cb" style="left:698px;top:474px"></div><div class="t" style="letter-spacing:0.2px;left:722px;top:474px">Продолжить воспроизведение следующего/выбранного аудио</div>

  <div class="a" style="left:375px;top:526px;width:749px;height:40px;border-radius:12px;background:#d4d4d4;box-shadow:inset 0 -2px 2px rgba(0,0,0,0.05), 0 1px 1px rgba(0,0,0,0.06)"></div>
  <div class="cb on" style="left:384px;top:539px"><svg width="11" height="11" viewBox="0 0 11 11"><path d="M0.8 5.6L3.9 8.6L10.3 2.2" fill="none" stroke="#fff" stroke-width="1.6"/></svg></div>
  <div class="t" style="left:408px;top:538px">Use full scroll (when duration is ...)</div>
  <div class="a" style="left:758px;top:533px;width:359px;height:27px;border-radius:8px;background:#f0f0f0"></div>
  <div class="t" style="left:764px;top:538px;color:#8c8c8c">Greater Than</div>
  <div class="t" style="left:1013px;top:538px">4</div>
  <div class="t" style="left:1030px;top:538px">seconds</div>
  <div class="a" style="left:1090px;top:537px;width:20px;height:19px;border-radius:4px;background:#2d7fd9"></div>
  <svg class="a" style="left:1093px;top:539.5px" width="14" height="14" viewBox="0 0 14 14"><path d="M7 2.8 A4.3 4.3 0 1 0 11.1 8.4" fill="none" stroke="#1a3558" stroke-width="2"/><path d="M6.2 0.6 L9.6 2.8 L6.2 5Z" fill="#1a3558"/></svg>

  <div class="lbl" style="left:366px;top:589px;width:212px;height:30px"></div>
  <div class="t" style="letter-spacing:0.2px;left:376px;top:595px">Устройства/параметры записи</div>
  <div class="sel" style="left:375px;top:631px;width:599px;height:27px"><div class="arr"></div></div>
  <div class="t" style="letter-spacing:0.2px;left:380px;top:637px">По умолчанию</div>
  <div class="btn" style="left:984px;top:631px;width:39px;height:27px"></div>
  <svg class="a" style="left:995px;top:639px" width="17" height="12" viewBox="0 0 17 12"><g fill="#333"><rect x="0" y="0" width="7.5" height="5" rx="1.5"/><rect x="9.5" y="0" width="7.5" height="5" rx="1.5"/><rect x="0" y="7" width="7.5" height="5" rx="1.5"/><rect x="9.5" y="7" width="7.5" height="5" rx="1.5"/></g></svg>
  <div class="btn" style="left:1032px;top:631px;width:92px;height:27px"></div>
  <div class="t" style="letter-spacing:0.2px;left:1042px;top:637px">Параметры</div>

  <div class="cb" style="left:380px;top:668px"></div><div class="t" style="letter-spacing:0.07px;left:405px;top:668px">Переместить курсор в конец записи</div>
  <div class="cb" style="left:380px;top:696px"></div><div class="t" style="letter-spacing:0.07px;left:405px;top:696px">Выбрать записанное аудио</div>
  <div class="cb" style="left:757px;top:668px"></div><div class="t" style="letter-spacing:0.07px;left:782px;top:668px">Замена существующего звука (режим перезаписи)</div>
  <div class="cb on" style="left:757px;top:696px"><svg width="11" height="11" viewBox="0 0 11 11"><path d="M0.8 5.6L3.9 8.6L10.3 2.2" fill="none" stroke="#fff" stroke-width="1.6"/></svg></div><div class="t" style="left:782px;top:696px">Keep a backup for each recording</div>

  <div class="a" style="left:375px;top:724px;width:749px;height:41px;border-radius:12px;background:#d4d4d4;box-shadow:inset 0 -2px 2px rgba(0,0,0,0.05), 0 1px 1px rgba(0,0,0,0.06)"></div>
  <div class="cb" style="left:384px;top:737px"></div>
  <div class="t" style="left:408px;top:737px">Pre Roll Active</div>
  <div class="a" style="left:758px;top:731px;width:359px;height:27px;border-radius:8px;background:#efefef"></div>
  <div class="t" style="left:764px;top:737px;color:#8c8c8c">Roll Time</div>
  <div class="t" style="left:1002px;top:737px;color:#8c8c8c">0.5</div>
  <div class="t" style="left:1030px;top:737px;color:#8c8c8c">seconds</div>
  <div class="a" style="left:1090px;top:735px;width:20px;height:19px;border-radius:4px;background:#d9d9d9"></div>
  <svg class="a" style="left:1093px;top:737.5px" width="14" height="14" viewBox="0 0 14 14"><path d="M7 2.8 A4.3 4.3 0 1 0 11.1 8.4" fill="none" stroke="#8f8f8f" stroke-width="2"/><path d="M6.2 0.6 L9.6 2.8 L6.2 5Z" fill="#8f8f8f"/></svg>

  <div class="lbl" style="left:366px;top:784px;width:228px;height:30px"></div>
  <div class="t" style="letter-spacing:0.2px;left:376px;top:790px">Частота дискретизации микшера</div>
  <div class="lbl" style="left:760px;top:784px;width:114px;height:30px"></div>
  <div class="t" style="letter-spacing:0.2px;left:769px;top:790px">Размер буфера</div>
  <div class="sel" style="left:375px;top:826px;width:356px;height:27px"><div class="arr"></div></div>
  <div class="t" style="left:380px;top:832px">System Sample Rate (44100 Hz)</div>
  <div class="sel" style="left:767px;top:826px;width:357px;height:27px"><div class="arr"></div></div>
  <div class="t" style="letter-spacing:0.2px;left:773px;top:832px">1024 сэмплов</div>
</div></div>
<div id="dlgb"></div><div id="dlgh"></div>

</body></html>
